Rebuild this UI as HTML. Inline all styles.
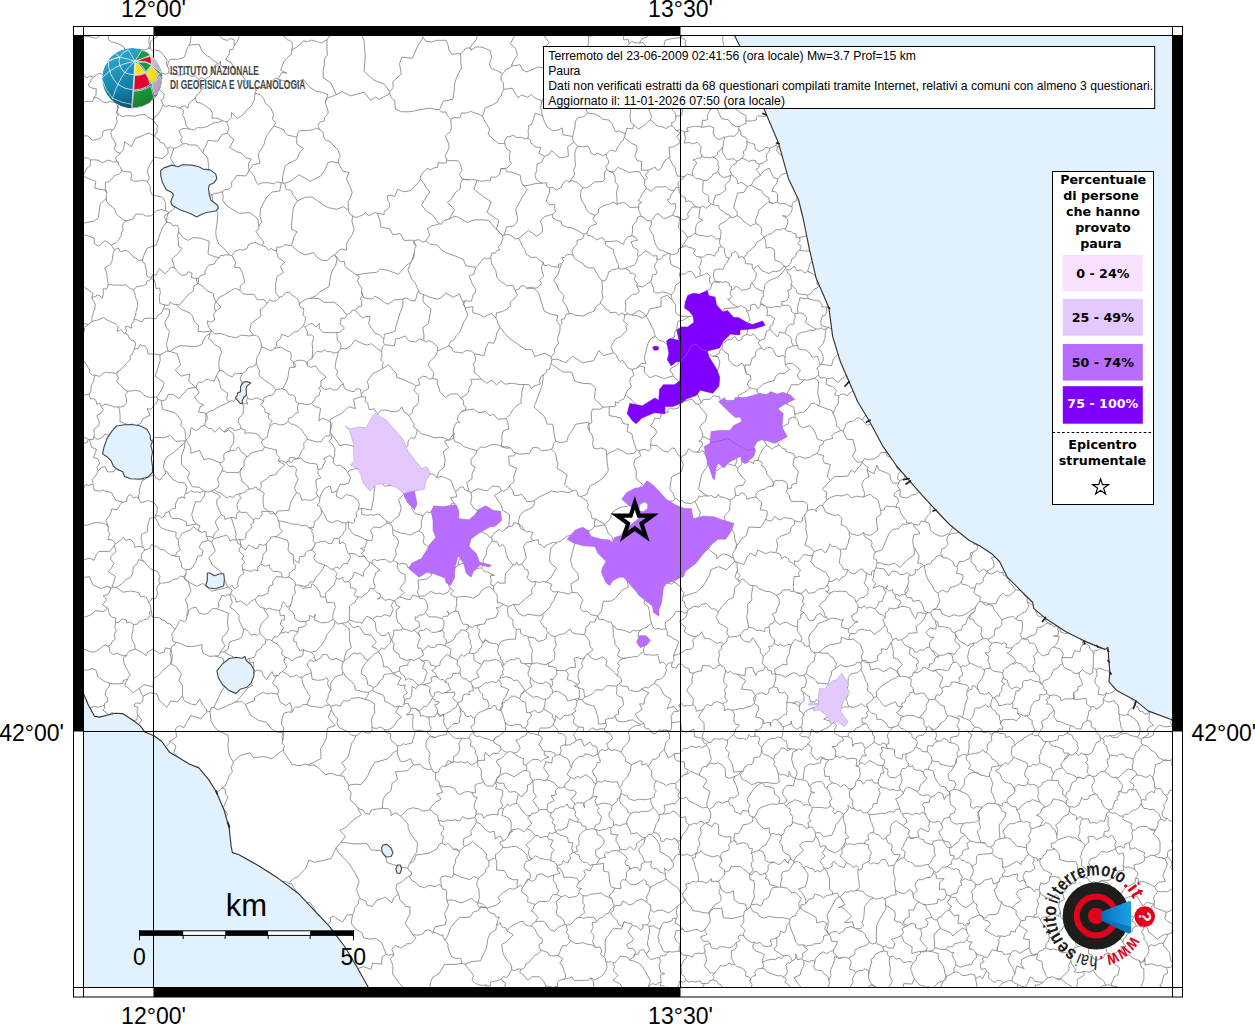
<!DOCTYPE html>
<html lang="it"><head><meta charset="utf-8"><title>Hai sentito il terremoto - Paura</title>
<style>html,body{margin:0;padding:0;background:#fff}body{width:1255px;height:1024px;overflow:hidden}svg{display:block}.h{font-family:"Liberation Sans",Arial,Helvetica,sans-serif}.d{font-family:"DejaVu Sans","Liberation Sans",sans-serif;font-weight:bold}</style></head><body>
<svg width="1255" height="1024" viewBox="0 0 1255 1024">
<defs><clipPath id="mapclip"><rect x="83.5" y="35.5" width="1089" height="952"/></clipPath>
<linearGradient id="gb" x1="0.2" y1="0" x2="0.7" y2="1"><stop offset="0" stop-color="#35aed0"/><stop offset="0.55" stop-color="#1583ab"/><stop offset="1" stop-color="#0b5f85"/></linearGradient>
<linearGradient id="gc" x1="0" y1="0" x2="1" y2="0"><stop offset="0" stop-color="#0a6fc0"/><stop offset="1" stop-color="#1aa3e6"/></linearGradient>
<clipPath id="globe2"><path d="M132.3,48A30.2,30.2 0 1 0 132.3,108.4A30.2,30.2 0 0 0 153,100Q162.5,90 162.3,76Q161,64 152,56A30.2,30.2 0 0 0 132.3,48Z"/></clipPath>
<radialGradient id="gsh" cx="0.4" cy="0.3" r="0.75"><stop offset="0.6" stop-color="#000" stop-opacity="0"/><stop offset="1" stop-color="#000" stop-opacity="0.22"/></radialGradient>
</defs>
<rect width="1255" height="1024" fill="#fff"/>
<g clip-path="url(#mapclip)">
<path d="M734.6,35.5 739.5,45.6 764.0,108.7 778.6,143.3 788.4,178.4 798.6,200.0 803.4,219.5 809.3,248.8 816.1,278.1 828.8,307.4 832.7,336.7 840.5,362.1 848.8,381.0 857.6,401.5 869.3,421.0 883.0,446.4 896.6,466.0 909.3,480.6 922.0,495.2 935.7,510.0 949.4,524.5 968.9,540.2 980.0,545.9 991.7,553.7 999.5,561.5 1007.3,577.1 1019.0,588.8 1032.7,602.5 1033.7,608.4 1046.4,619.1 1065.9,631.8 1083.5,640.6 1097.2,646.4 1105.0,649.4 1107.9,647.4 1108.9,661.1 1109.9,672.8 1108.9,681.6 1116.7,690.4 1136.3,701.1 1148.0,710.9 1172.5,720.0 1172.5,35.5Z" fill="#e1f2fe"/>
<path d="M83.5,693.7 88.6,705.4 94.4,716.1 99.3,717.1 107.1,715.2 114.9,713.2 122.7,713.6 132.5,720.0 140.3,725.9 145.2,732.3 154.0,735.7 161.8,741.5 169.6,752.3 179.4,758.1 189.1,764.0 198.9,767.9 208.7,779.6 216.5,792.3 224.3,810.9 229.2,828.4 231.1,846.0 232.4,852.6 238.5,854.5 259.0,865.9 278.6,878.6 298.1,893.2 313.8,909.8 329.4,926.4 345.0,947.0 356.7,966.5 368.4,987.5 83.5,987.5Z" fill="#e1f2fe"/>
<path d="M100.8,35.5l-1.7,.6 -2.7,2.2 -2.9-.5 -4.2-1.3 -5.8-.3M560.1,325.9l-3.3-4.7 .8-5.7 -7.1-1.5 -6.2-2.8 -3-9.3 -2.7-8.8 -4.6-4.8M534,288.3l-1.4-1.4 -5.9,1.3M560.1,325.9l2.1-2.2 -1.1-4.2 3.4-.6 .9-2.6 1-2.1 3-.2M561.6,263.6l-3.6,10.8 -4.4,5.7 2.6,3.6 3,6.7 4.8,5.2 -1.3,5.3 4.1,6 2.6,7.1M561.6,263.6l-3.2,.6 .4,3.3 -2.7-.7 -4.2-.2 -3-1.8 -2.8,.9 -2.2-.6 -.7-3M543.2,262.1l-1.5,4.1 .1,4.1 1.8,5.8 -4.1,4.1 2,3.4 -4,4.2 -3.5,.5M534,288.3l-.4,.1 -6.9-.2M83.5,682.5l.4-.3 -.4-.7M104.3,705.3l-5.9,1.9 -4.3-.8 -3.5,1.1 -.7,.2M104.3,705.3l.7-2.3 2.8-1.5 -.8-4.2 -1.8-2.3 .6-3.4 .7-2.5 2.8-2.5 0-3.4M109.3,683.2l-5.4-2.2 -6.3-4.6 -1.6-6.2 -3.9-1.9 -4.7,1.9 -3-.3 -.9,.5M134,318.9l0,2.8 -2.5,2 0,4.5 -3.7-1.9 -2.6,.5 1.4,4.1 -1.9,2.6M134,318.9l1.7-3.6 .2-3 1.7-6.6 -.3-4.8 -1.4-2.5 -.5-1.7 -.7-4.1 -1.3-3M91.9,297.4l1.6,3.6 1.7,2.6 -.4,5.6 -1.5,3 -.4,2.9 -1.2,2.3 .4,4M91.9,297.4l3.9-.8 1.3-2 2.9,1.4 2.2,2.1 1.1-3.7 -.3-5.6 3.3,.2 1.8-3M108.1,286l1.7-2 3.7,1.3 3-.4 3.6,.4 2.8-.1 3.4-.3 3.9,3.6 3.2,1.1M124.7,333.5l-3.9-3.8 -3.4,1.8 .9-4.6 -3.1-3.1 -7.2-3.3 -4.6-2.9 -4.3,2 -7,1.8M83.5,395.4l1.6-.4 4.1-.9M89.2,394.1l1.7-2.9 .2-3.3 .2-2.7 1.2-1.6 1.3-2.4 .1-3.1 1.5-3M95.4,375.1l-3.2,0 -2.9-2.5 .5-2 -1.6-3.2 -3.2-4.6 -1.5-2.2M83.5,323.6l5.2,.7M83.5,332.4l.7-.9 .4-4.1 4.1-3.1M91.9,297.4l1.1-4.2 -2.8-1.8 -3.2-2.6 -2.7-1.3 -.8,.2M88.7,324.3l3.4-2.9M134,318.9l3.5,1.1 4.2,2 2.3-3.4 6.1-.5 5.6,.9 2.6-3.9 3.8-2.8 1.1-3.4M163.2,308.9l2.1-3.9M133.4,289.6l3.4-2.8 4.1-.8 2.6-.3 2.9-1.7 .6-3 1.9-.3 2.4-2M165.3,305l-5.4-1.5 -.7-6.9 1.1-3.6 -.6-4.9 -3.6,.5 -.5-4.8 -1.3-4 -3-1.1M551,356.9l-6.3-3.7 -9.9,3.3 -2.7-6.6 -6.9-.4 -7.7-5.6 -9.4-6.7 -4.3-5 -3.9-4.9M551,356.9l2-2.3 1.5-1.9 .3-4.3 1.2-2.2 2.5-2.6 -1-5.3 2.4-7.3 .2-5.1M526.7,288.2l-2.5-2.4 -3.5,.2 -1.8,3 -3.9,1.4M499.9,327.3l-1.9-3.4 -.6-2.7 -1.6-3.1M515,290.4l2.4,4.4 -3.7,4.4 -3.6,3.2 .3,3.8 -4.3,3.2 -3.8,2.2 -5.8,1.2 -.7,5.3M231.9,255.7l4,6.8 -1.7,4.6 5.8,.8 2.8,5.9 1.3,5.4 .5,3.2 -4.2,3.3 -.4,4.6M231.9,255.7l2.1-3.1 1.5-1.6 4.1-1.4 3.1,.6 4.3-1.8 1.6-3.9 6.4-2.2 6.7,3.3M240,290.3l2.8,3.5 5.3,.6 5.8-.1 3.3,5.3 3,0 4.1,.1 1,1.9 1.9,1.6M267.2,303.2l2.3-3.5 4,1.6 2.9-.7 1.7-1.3 1.4-2.1M279.5,297.2l-3.6-4 -.5-7.5 1.6-9.3 6.4-3.8 -3.1-6.2 4.5-4.1 -6.4-4.4 -2-6.9M261.7,245.6l4.1,1.2 2.6,3.5 2.7-1.9 2.1,1.8 3.2,.8M122.4,55.7l3.8-1.5 3-1.6 2.3-1.4 4.4-.9 2.6-1 6.5,.8 3.6-1.7M122.4,55.7l3.6-4.5 -2.6-4.7 -5.5-2.8 -6.8-2.2 -2.9-2 .3-4M148.6,48.4l1-3 -.9-4.2 .8-4.4 -.4-1.3M83.5,75.6l.4,.1 2.9,2.2 2.9-1.8 3.9,1.1M93.6,77.2l2.2-1.8 3.1-2.1 5.6,1.5 4.6-.4 1-6.9 -.5-4 5.9-2.2 6.2-3M121.7,58.3l.7-2.6M499.9,327.3l-1.7,3.6 -1.4,1.8 -1.2,6.4 -1.8,4.1 -5.1-.7 -2.6,4.4 -1.9,8.7 -9.7-1.7M465.3,300.8l-1.6,3.1M463.7,303.9l-.4,.8 1.3,1.6M464.6,306.3l1,1.3 7.2-1 0,5.9 6.7,2.1 4.1,2.5 7.8-3.6 4.4,4.6M465.3,300.8l-2.5,.8M462.8,301.6l.9,2.3M463.7,303.9l.9,2.4M464.6,306.3l1.5,4.1 1.9,4.7 -3.9,6.6 -4.3,10.2 -3.6,3.7 -1.8,3.9 -3.8,1.8 -2.2,4.9M474.5,353.9l-3.1-2.8 -5.7-.5 -3.6,2.5 -4.3-1 -2.3,.2 -2.8-1.5 -1.3-3.7 -3-.9M511.7,969.8l2.1,1 2.4-1.3 2.9-.6 1.7,.4M511.7,969.8l-.1-3.6 -1.6-2.8 -2.9-2.9 -3.9-6.5 -1.7-9.3 5.6-3.3 6.2-6.6 -6.5-4M506.8,930.8l3-3.4 4.5-3.1 2.7-.8 3-1.9 3.3-.1 .8,2.2 3.7,2.1 4,.2M531.8,926l3.4,3.5 1.4,3.3 2.8,4.5 3,1.4 -.4,4.3 -2.9,1.2 0,2.9 1.9,3.2M520.8,969.3l2.5-.5 1.9-2.3 .3-2.2 3.2-1.5 3.5-4.5 2.7-3.1 3.5-1.5 2.6-3.4M118.3,406.9l1.1,2.4 .4,3.5 .3,4 -.1,5.2 1.9,0 2.8,1.7 2.3,.4 1.3,.5M118.3,406.9l-4.4,0 -4-1.7 -1.8-.3 -2.8-1 -1.4,1.1 -2.6,1.6M101.3,406.6l2,3.2 -1.8,3 -4.7,2.8 2.5,6 -.5,4.1 -5.1,3.6 .6,4.4 -.4,3.1M93.9,436.8l3.1,2.5 2.7-.6 2.4-1.4 3.1-3.4 3.8,1.5M133.1,424.6l-1-.8 -1.6,.8M115.8,468.2l-1.8,3.4 -6.2,.4 -2.9-5.3 -3,.4 -3.7,3.7M89.4,439.4l2.2,7.9 4.8,1.8 -1,3.3 -2,5.3 4.2,1.1 2.2,4.4 -2.8,4.3 1.2,3.3M89.4,439.4l3.6,.2 .9-2.8M176.2,304.4l3.3,.6 2.5-2.8 2.2-2.6 3.7-4.9 5.5-3.8 .6-5.2 3.8-1.8 -1.8-5.6M176.2,304.4l4.2,4.4 9.7,4.4 2.4,2.8 1.9,5.9 4.1,3.7 -.4,5.7 6,.7 7.4-1M211.5,331l-2.5-3.6 -1.6-4 .1-2.6 3.4,1.5 3.8-2.3 -1.2-5.3 1.8-3M215.3,311.7l-1-6.2 1.6-4 -2.1-4 -.5-4.1 -6.3-2.6 -4.2-4.5 -4.4-2.7 -.1-5.4M198.3,278.2l-2.3,.1M165.3,305l3.5,.5 1.6-3.5 3,2.3 2.8,.1M151.3,278.7l.6-1.8M151.9,276.9l.9-2.4 3.5,.7 1.1-2.9 2.1-3.8 5.5,5.4 4.1-4.3 1.9-2.6 3.6,1.2M174.6,268.2l2.8,3.2 3.4,3.8 5.4-.4 1.9-3.2 3.9,1.8 -.6,4.3 2.8,.6 1.8,0M163.2,308.9l6.5,.3 -.6,5.8 -4.4,7.8 1.9,5.3 2.9,3.4 -1.6,6.8 -1.6,5.9 2,7.2M211.5,331.1l-1.4,2.4M210.1,333.5l-3.9,2.4 -2.6,4 -1.9,4.7 -6.3,2.1 -9.5-.8 -5.7-.3 -5.4,2.3 -4.9,3.6M169.9,351.5l-1.6-.1M211.5,331.1l3.2,2.7 6.9-.2 6.2,2.5 8.3,1.8 4.7-2.7 4,.2 4.1,.6 4.7-.8M253.6,335.2l-3.9-5.1 1.4-6.4 5.9-4.7 4-2.7 -.7-3 -.2-3.6 3-2 4.1-4.5M240,290.3l-4.5-1.9 -4,1.5 -3.2,2.6 -2.8,1.7 -6.9,3.5 -2.3,4.2 4.7,5.2 -5.7,4.6M174.6,268.2l-.9-3.9 -1.9-5.3 5.8-5.1 4.3-5.6 -3.4-2.1 .1-3.6 -.9-6.9 1-3.7M198.3,278.2l2.1-2.4 4.8-1.7 -.2-2.8 1.4-2.8 2.6-3.6 5.1-.8 2.8-4.5 2.5-2M178.7,232l5,6.3 4.3,2 5.1-2.7 7.6,.6 8.5,3 -1.2,12.6 6.3,2.9 5.1,.9M231.9,255.7l-2.7-.7M229.2,255l-3.4-.2 -2.4,.8 -3.1-.2 -.9,2.2M584,234.3l2.8-1.4M584,234.3l-1.2,4.1 -2,1 -3.8,1 0,3.8 -3.6,4.3 -1.7,2.6 1.5,4.3M586.8,232.9l.9,2.4 3,.6 2.7,1.2 3.4,2.8 4.5-2.2 2.2,.7 1.8,3.1M605.3,241.5l.2,3.3 3.7,2.6 4.2,2 .5,4.3 1.7,4 1.5,4.5 1.1,2 .5,3.7M573.2,255.4l1.5,3.3 4.6,2.9 4,2 1.2,2.4 4.3,1.9 4.9-.1 4.9,8.8 3.5,4.5M618.7,267.9l-2.8,1.2 -3.3,.3 -1.5,1.6 -2.6,1 -.7,3.3 -2.1,4.9 -3.6,.9M552.7,214.2l-.1,3.7 4.8,2.6 3.5,.6 1.2,4 4.7,2.1 4.4,.4 7.4,3.6 5.4,3.1M552.7,214.2l-4.5,1.5 -3.5,.7 -4.5,4.7 2.1,4.7 .1,6.3 -5.8,4.1 -8.1-5.6 -9.8,7.7M561.6,263.6l2-2.6 -1.8-3.9 2.4,.6 2.1-2.8 4.3-.6 2.6,1.1M518.7,238.3l2,4.1 2.2,4.9 2,2.5 1.1,4.1 5.8,3.8 4.5-.6 3.8,3.7 3.1,1.3M600.5,303.4l.3-2.2 2.2-3 -1-5.3 .2-3.1 0-4.5 -.1-4.2M600.5,303.4l-5.1,3.7 -1,3.9 -6.3,2.3 -4.5,2.7 -4.7-.5 -3.8-.2 -3.1-1.9 -2.6,.6M584.7,79.7l1-2.5 3.2-1.7 3.7-.7 2.7-1 2.4-.6 4.1,.2 3.2,4.8 2,2.9M584.7,79.7l-.8-4 -2.7-.6 -2.5-.3 -3.1-1.5M607,81.1l.8-4 -1.3-4.5 -1.2-4.4 5.1-4.2 3.8-6.4 6.1-1.4 3.7-6.1 5.1-6.5M575.6,73.3l-1.2-3.7M574.4,69.6l4.6-4.9 1.7-5.5 -2.1-2.7 -1.8-5.9 3.9-.9 5.4-.6 2.7-6 -.4-6.5M588.4,36.6l2.4-.8 4.7-.2 0-.1M629.1,43.6l-.8-4.1 -4.5,.5 -.3-3.1 -1.3-1.4M504.7,143.8l1,2.8 .9,2.4 3.8,2.2 -.8,3 0,6.3 1.8,3.1 -4.6,4.4 -6.2,.9M504.7,143.8l-.1-2.9 2.5-4.3 2.7,.1 3.3-1.6 3.5,2.3 5.1-.1 3.6,1.6 2.7-.8M528,138.1l2.7,1.8 .1,3.3 2.2,1.2 1.5,2.1 3.4,.8 3,.1 -2,5.8 5.7,3.2M500.6,168.9l4.8-.3 1.5,3.3 3.6,.2 2.4,.5 3.6,1.3 3.9,1.5 .3,4.3 1.8,4.9M544.6,156.4l-1.7,3.1 -1.4,3 -4.5,1.5 -.3,6.8 -1.8,4.5 1.6,4.2 1.8,1.7 3.8,2M522.5,184.6l2.2,1.1 3.2-.3 2.6-.6 4.3-1.1 3.9-.2 3.4-.3M541.2,104.8l.1-4.3 -6-2.2 -3.9-3.7 -3.7,2.7 -6.2-2.4 -3.5,2.9 -6-9.6 -8.2,1.2M541.2,104.8l-1.1,3.1 1.9,3.2 -.3,2.5 .7,2.1M542.4,115.7l-7-2.5 -2.7,8 -1.7,3.6 -2.6,.8 .4,2 -.8,3.3 .5,3.9 -.5,3.3M482.4,116.4l1.2-3.2 1.5-5.1 6.7-2.8 5.9-3.5 .9-3.2 2.2-2 1.2-3.8 1.8-3.4M482.4,116.4l2.5,5 4.8,7.6 -1.7,5 3,3.2 2.9,2.7 4.5,3.6 4,0 2.3,.3M552.7,214.2l2.9-2.4 -.7-2.6 -.2-4.7 -5.2,.3 -3.2-3.5 1.5-5.4 1.9-3.6 -.4-4.5M518.7,238.3l-3.1,.7 -2.5-1.5 -1-1.5 -3.8-1.7 -4.2,.9M504.1,235.2l2.4-8.3 7.2-.9 3.5-4 .3-4.6 -1.8-8 6.3-11.9 5.2-7.9 -4.7-5M549.3,187.8l-2.9-1.7 .6-3.2 -2.6,0 -2.3,.3M418.7,290.8l1,2.3 3.8,1.5M418.7,290.8l-1.8,3.3 -.2,2.6 -1.7,4.3 -4.2-.4 -2.1-1.4 -2.6-1.4 -3.3,1.2M423.5,294.6l-.6,6.1 2.4,3.6 5.6,4.5 -.7,5.5 -1.9,9.5 -5.5,3.6 1.1,7 0,6.1M402.8,299l.1,7.1 -2.9,6.9 -1.9,6.5 -2.3,7.1 -.8,4.7 -4.9,1.7 -5.7,1.2 -.5,5M423.9,340.5l-4.3-1.6 -4,3.1 -6.9-1.1 -3.5-5 -5.5,2.3 -4.1,.7 -1.2,7.1 -9.4-1.4M385,344.6l-1.6-1.8 .5-3.6M361.6,291.7l.3-3.7 -2.4-2.9 -1-1.8 -1.1-2.7 2.2-3.9 -3.1-1.8M361.6,291.7l2,5.9 8.3,1.6 3-3 4.8,2.5 4.8,3.9 3.5,1.6 6.4-4.3 8.4-.9M356.5,274.9l8.1-1.4 12-1.2 3.9-3.2 6.9,1 11.1,4.3 7-8.2 5.9-4.6M411.4,261.6l.4-.3 .1-.4M411.9,260.9l2.3-7.9M414.2,253l-.4,4.9 -1.9,3M411.9,260.9l-.5,.7M411.4,261.6l-.6,.9 -2.9,7.5 2.4,5.6 1.4,3.5 3.5,3.7 1.9,4.5 1.6,3.5M462.8,301.6l-1.4-3 -2.1-4.8 -5.9,3.5 -7.5-4.2 -4.7,4.4 -3.3,1.6 -6.6-1.4 -7.8-3.1M437.6,350.9l3.6-1.6 2.5-.9 1.9-.8 2.8-1.4M437.6,350.9l-.2-4.2 -2.5-2.3 -3.4-2.6 -3-1.4 -2.4,1.8 -2.2-1.7M355.3,310.4l2.5-3.3 3.9-1.2 -.1-5.4 -1.3-1.8 1.9-2.9 -.6-4.1M355.3,310.4l3.1,3.3 4,4.4 3.6-1.6 4.1,.1 -1.5,7.2 6.2,9.2 4.5,1.8 4.6,4.4M347.4,314.4l-2.2-1.1 -2.4-3.5 -4.9-4.8 -3.9-2.8 -5.8,.2 -4.5-.2 -4.6-3.6 -8.7-.4M347.4,314.4l-2.5,4 -3.7-.4 -.9,6.4 4.2,3.4 -3.1,3.2 -2.2,1.3 -2.1,.3M337.1,332.6l-5.2,.1 -9.1-.4 -3.5-3.6 0-5.6 -3,3.7 -4.5-3.6 -3.6,1.5 -3.1,2.7M299.2,304.7l1.8-2.7 3.4-1.7 1.9-1.3 4.1-.8M299.2,304.7l1.6,3.3 2.6,.1 .4,2.6 -1,4.4 2.7,1.9 -.4,4.4 -.8,2.1 -.9,2.2M303.4,325.7l1.7,1.7M355.3,310.4l-2.7-.5 -1.4,2.4 -3.8,2.1M356.5,274.9l-3.9-2.8 -5.2-3.4 -2.2-2.2 -.8-5.1 -2.6,.6 -2.7-1.2 -2-3.9 -2.2-1.5M334.9,255.4l2.1,3.5 -1.2,6.1 -3.1,4.5 -2,6.2 -1.8,11 -9.2,5.3 -3.5,3.6 -5.8,2.6M279.5,297.2l3.2-.9 2.8-3.5 4.1-.6 2.2,2.7 3.9,2.4 2.3,2.5 1.2,2.2 0,2.7M334.9,255.4l-.3-.9M276.4,251l.4-3.8 3-.2 2.8-.4 2.2-2 4.2,.7 2.4,.2M334.6,254.5l-3.9,2.5 -3.4,3.5 -5.4-.1 -4.6-2.9 -3.5-4.9 -8.6,2.3 -6.5-3.1 -7.3-6.3M168.6,212.3l-2.7-1.4M168.6,212.3l-.2,.7M168.4,213l-1.6,4.6 0,4.4 0,.1M166.8,222.1l-4.3,5.6 -1.6,3.8 -4.8,13.6 -9,3.1 -3.2,7 -1.4,4.5M165.9,210.9l-4.7-1.3 -5,1.4 -4.8,4.8 -5.7,.3 -3.3-2.1 -6.9,.2 -2.3,4.7 -6.5,1.9M126.7,220.8l-3.1,2 -1.3,3.8 1,2.5 -1.8,3.4 -.2,2.9 -2.7,4.5 -2.4,2.7 -4.8,2.5M142.5,259.7l-4.1,.9 -1.9-2.2 -3.7-1.9 -2-2.8 -4.5-3.4 -6.1,1.4 -2-3.7 -3.8,1.8M111.4,245.1l1.7,2.9 1.3,1.8M151.9,276.9l-3.6,.5 -1.8-2.4 .2-4.1 -1.5-4.5 .1-2.8 -2.5-1.1 -.3-2.8M169.3,212.3l-.9,.7M168.4,213l-4.4,3.1 2.8,6M166.8,222.1l.1,.2 4.1,.9 2.1,2.7 2.8-.8 2,.7 .8,3.1 0,3.1M169.3,212.3l-.7,0M108.1,286l-.1-3.7 -.9-4.7 -.3-4.5 -2.1-5.4 5.5-2.9 1.9-4 1-6.9 1.3-4.1M83.5,234.3l1.2,.6 9.6,3.2 -.1,5.1 4.1,3.1 7.1-5.7 6,4.5M126.7,220.8l-3.4-1 -4.9-3.9 -2.3-2.2 -.5-2.9 -2.8-3.6 -3.8-2.5 -2.3-3.3 -.3-3.4M106.4,198l-6.3,6.6 -1.9,13.5 -3.9,2.8 -8.3,1.8 -2.5,.4M481.2,379.1l-4.8,.1 -5.7,.3 1.1,3.8 -2.8,4.8 -.1,2.8 -2.6,4 -3.5,1.7 -2.1,1.2M481.2,379.1l5.6,4.1 5.3-3.1 4.4,4.9 4.3-4.1 4.2,3.3 7.5-1 6.3,1.3 5,.1M523.8,384.6l-2,7.4 0,4.5 -1.1,3.2 .7,3.4 -4.2,2 -4.5,5 -2.6,4.4 -4.2,4.1M505.9,418.6l-8.1,.7 -4-5.1 -3.9,1.5 -4.2-4.1 -7.2,1.1 -5.1-3.6 -5,.6 -6.8,1.7M461.6,411.4l4-1.2 .4-3 -2.1-1.6 -.6-1.8 .3-2.8 -2.9-3.2M474.5,353.9l1,4.2 -.1,2.4 -2.3,3.7 1.3,3.1 -.4,4.7 3.6,3 2.4,2.4 1.2,1.7M437.6,350.9l-1,3.2 -2.6,3.6 -3.6,3.1 -1.6,2.3 -.2,2.4 2.2,3.3 3,4 -1.1,5.8M432.7,378.6l4.6,.9 -.2,4 2,4.9 .8,3.1 5.4,5.9 5.4-3.3 6.6-.3 3.4,4M137,425.3l4-2.2 1.4-4 7.8-3.9 -3.1-6.5 3.8,.6 3.8-4.8 2.3-1.9 .8-3.6M151.7,440.6l2.9-3.1 5.3,0 3.6,.3 7.1-2.3 5.1,5.9 6.1-.5 3.5,0M161.5,400.8l-3.7-1.8M161.5,400.8l.8,8.3 12.1,3.6 3.1,2.6 4.2,6.1 -1.1,3.7 4.2,4.4 .6,5 .6,5.5M186,440l-.7,.9M385,344.6l-2.5,2.5 -.8,2.3 .1,2.4M337.1,332.6l-.1,1.8 .1,2.8 .3,3.4 3,2.2 .6,2.4 -.5,3.6M340.5,348.8l5.7-.1 4.8-3.2 4-5.4 8,3.8 3.9,1.2 4.4-1.4 6.2,5 4.3,3.1M432.7,378.6l-3.8,.5 -2.4-2.3 -3.7-.6 -2.4,1.9 -2,1 1.5,5.6 -4.2,1.4M381.8,351.8l-.1,2.9 .4,2.4 -1.5,2.8 2.7,2.7 -1.2,3.5 1,2.2M415.7,386.1l-2.7-2.2 -4.3-1.9 -4.5-2.2 -7.5-2.4 -.2-3.5 -2.9-3.4 -5-5.7 -5.5,3.5M545.6,985.5l1.9,.8 2.6,.5 2.8,.5 2-.4 2.6-.5M545.6,985.5l.1,2M557.5,986.4l.3,1.1M558,955.6l-3.8,.2 -2.2,.2 -2.9-.8 -1.1-2.5 -3.7-1.5 -3.3-.9M558,955.6l4.8,2.9 -3,4.9 2.2,1.7 1.7,4.4 .4,2.6 1.3,1.6 .2,3.8 -1.8,1.7M563.8,979.2l-4.3,1.1 -2.1,2.2 .1,3.9M520.8,969.3l-1,3.4 4.2,2.6 1.9,2.9 2.2,2 3.8-3.5 7.3,.1 4.3,4.1 2.1,4.6M500.7,979.4l4.7,3.5 -.4,4.6M500.7,979.4l2.8-2.8 3,.8 2.2-2 1.4-2.7 1.6-2.9M563.8,979.2l3.3-.5 4.7-1.8 2.7,3.9 5.3-.5 2.9,.4 2.9-.5 2.9,.2 1.8-2.5M590.3,977.9l3,3.7 .5,4.3 -.3,1.6M500.7,979.4l-2.6,.9 -4.3,1.1 -3.2,.8 .1,3.6 -2.8,.3 -1.8-1.3M485.8,987.5l0-.4 .3-2.3M402.7,987.5l-.4-.9 -3.6-4.2 -5.9-8 .1-9.1 -2.7-6.4 3.7-3.9M357.8,968.5l5.8-1.8 7.5,2.7 1.5-6.2 9,1 .5-7.4 4.2-2.5M386.3,954.3l2.6,1 2.1-.7 2.9,.4M327.7,924.5l.3-.2 2.8-3.1 -.8-3.4 3.5-1.7 3.6,2.9 5.6,2.9 4.3-7 5.6-.2M386.3,954.3l-4.7-11.6 -6-4.2 -5.6,.6 -6.1-1.1 -2-5.3 -6.7-4.2 -4-5.2 1.4-8.6M336.1,847.9l2.1,4.5 6.3,6.2 5.1,5.7 5.8,9.3 3.7,7.8 -2.6,7.9 1.6,4.5 1.9,4.8M336.1,847.9l-5,10.5 -7,2 -9.9,1.9 -5.4-2.3 -2.8,7.9 -8,8.8 -4.3,1.8 -5.4,4.7M288.3,883.2l3.8,.9 1.2,3.1 2.4,3.1 .8,1.7M307.1,902.7l2.9-.3 4.2,6.2 1.6,3.4M316.9,913.1l2.3,2 .9,1.4M352.6,914.7l1.7-3.8 .2-3 2.7-2.5 1.5-2.5 -.4-2.5 1.7-1.8M1172.5,839.6l-1,1.9 1,.4M668.9,951.7l-4.1,.4 -2.5-2.9 -1.5-4.2 -2.2-2 .6-2.5 -1.4-3.5 1.2-3.7 1.1-4.4M668.9,951.7l-2.1,1.8 -.8,1.6 -2.9,.7 -1.6-.7 -2,2.6M649.1,926.5l.4,4.6 0,2.5 -1.2,2.3 .1,3.3 -.9,2.6 .1,3 2,4.1 -3,5.5M649.1,926.5l4.4-.8 2.4,1.9 4.2,1.3M659.5,957.7l-2.8,.4 -2.7,.8 -3.1,.5 -2.5-2.3 -1.8-2.7M668.3,987.5l-.4-.3 -2,.3M665.2,987.5l-1.5-1.7 -3.6,0 1.2-4M661.3,981.8l-3.2,1.4 -2.1,1.9 -3.4-1.7 -2.1,1.6 -2.3,2.2M722.1,987.5l-1.3-3 -2.3-.5 -1.7-3 -4.3-1.2M702.5,987.5l.2-1 2-3.1M704.7,983.4l3.2,.1 1.3-2.2 3.3-1.5M686.2,980.3l3,1.7 2.5-.6 4,.6 4.2-1.2 1.7,2.7 3.1-.1M686.2,980.3l-2.9,1.9 -4-1.1 -.3,3.9 -1.4,2.2 -.5,.3M750,981.5l2.1,3.1 -.9,2.9M750,981.5l.5-2.7 -1.7-1.9 -3.3-1 .5-3.3 -2.4-3.4 -3.2-2 -3.2-.4 -2.7-2.4M712.5,979.8l1.9-2.2 -1.7-1.6 1.7-2.9M734.5,964.4l-2.5,.4 -2.8-2 -2.9,2.7 -3.2,.5 -3-.1 -2.5,3.4 -3.2,3.8M686.2,980.3l-1.3-3.2 -3.5-3.1 .4-3.8 -1-2.4 1.2-3.8 2-4 2.9-2.1 -.8-2.5M714.4,973.1l-4.4-.1 -1.6-2.8 -2-2 -2.2-2.4 2.2-4.2 -.1-4.7 -1.3-2.3 .1-3.4M686.1,955.4l3.4,.3 3.1,1.6 .8-2.5 1.9-1.3 3.8-.3 3.8,.4 2.2-2.4M668.9,951.7l4.2,.4 2.2-.6 3.7-.4M661.3,981.8l-.8-6.6 4.3-1.7 -4.1-1 -1.1-4.2 -.5-3.4 1.5-3 -1.1-4.2M686.1,955.4l-3.4-.6 -1.8-2.6 -1.9-1.1M734.5,964.4l-1.8-3.8 -1.6-2.3 .6-2.3 -.5-5.1 3.5-1.2 2.3-3.2 -.8-3.9M736.2,942.6l-3.3,3.9 -3.1,1.4 -3.4-.4 -2.9-.7 -4.3,0 -1.6,2.4 -6.2-1.3 -1.1-4.2M705.1,951.2l-.8-2.4 -.3-2.5 2.5-2 3.8-.6M134.4,349.2l-1.5,3 -.4,1.9 -2.2,1.4 -.1,4.1 -3.8,4 -2.2,2.5 -3.1,3 -1.8,1.5M134.4,349.2l3.9-1 1.6-3.6 2.8,1.3 2-.3 2.8,4.3 .3,4.1 6.4,.2 5.6,.5M159.8,354.7l.4,5.7 -1.9,6.3 -3.1,9.5 9,6.4 -1.2,3.8 -.7,2.3 -3.6,5.4 -2.1,2.9M119.3,370.6l-2.8,3.5 2.1,3.8 -2,3.4 1.7,1.9 3.1,2.8 3.5,3.8 2.8,1.3M127.7,391.1l3.7-.1 3.4-.8 5.5,1.1 3.4,3.6 3.8,2.2 2.6,.2 2.8,0 3.7-.3M124.7,333.5l3,.7 .8,2.5 2.6,3.6 2.7,.5 1.9,2.2 -.8,3.8 -.5,2.4M95.4,375.1l4,1.4 2.9-2.4 3.4-2 3.2,.8 2.5-.3 4.3,.7 3.6-2.7M168.3,351.4l-2-.4 -2.6,2 -3.9,1.7M195.7,387.5l-4.9,.6 -3.2,.7 -3.6,4.2 -5.4,5.9 -5.4-4.6 -5.1,.2 -2.3,5.4 -4.3,.9M195.7,387.5l-7-6.3 1.2-7.2 -8.9,2.2 -5.7-6 5.2-5.3 -1.9-6.8 -1.8-4.6 -6.9-2M157.8,399l-1.2-2M89.2,394.1l.5,2.9 .8,2 3-.4 2.5,1.8 .8,3.9 2.9-1.2 1.6,3.5M118.3,406.9l3.3-.1 2.5-.9 2.2-2.6 .4-3.9 -.9-2.8 -.8-1.8 1.7-1.6 1-2.1M83.5,437.3l1.5,.3 3.4,1.7M88.4,439.3l-1.3,3.2 -3,.7 -.6,1.5M89.4,439.4l-1-.1M98.2,470.8l-1.5,3.2 -1.5,2.2 -1.9,2.2 -1.3,1.4 1,2.6 -.1,2M83.5,487.9l2.3-3.2 2.8,.6 4.3-.9M711.8,284.5l-2.1-2.4 -.2-3.2 .8-3 -3.4-3 -2.4,1.6 -3.6,1.4M711.8,284.5l1.8-3.1 3.6,1.1 3.3-.4M720.5,282.1l-4.8-.8 -2.4-4.7 .8-6.3 4.3-1.3 4.7,.3 1.7-4.3 2.2-2.4 2.3-4.6M700.9,275.9l-1.1-1.7 .8-3 -.9-2.1 -1-2.2 1.4-1.6 1-3.4 .2-2.6 -1.7-2.4M699.6,256.9l3.6,.3 3.2-2.5 4-.3 4.4,1.8 .5-2.8 2.8-1.8 .7-4.2 2.7-.7M721.5,246.7l3,1.7 -.1,4.3 1.3,2.4 .4,2 3.2,.9M731.2,289.8l.4-3.1 -2.2-1.1 -.5-3 -3.5-.9 -2.6,.5 -2.3-.1M731.2,289.8l2.5-.7 1.8-2.9 3.2,1.3 2.4,2.9 4.8-.8 4.3-1.5 .2-3.1 1.6-2.4M752,282.6l2.8-3 1.2-2.7 .1-1.7 -.1-2.6 -2.7-3M753.3,269.6l-1.2-3.2 .3-2 -2.8-.5 -4.2-.2 -.1-2.8 -1.5-3.4M743.8,257.5l-1.8-.9 -3.3,1.1 -.6-3.1 -2.7-3.3 -3.7,2 -.1,2.5 -2.3,2.2M705.1,89.8l-3.6,1.8 -2.8-1.9 -6.1,1.7 -2.6,3.3 -6.1,5.2 -.9,7 -1.3,8.3 -5.9,1.1M705.1,89.8l-1.4-2.5 -1.2-3.8M675.8,116.3l-.6-3.5 -2.4-2.5 -.6-2.6 -2.4-3.1 4-7 4.7-1.5 -3.4-4.3 1-7.9M702.5,83.5l-5-3 -2.9-1.6 -4.8-1.5 -2.9,.9 -.2,3.4 -3.7,2.5 -2.9-.6 -4,.3M647.9,170.2l.2,2.4 -2.8,2.3 2.2,3 -2.6,2.4M647.9,170.2l4.3-1.5 2.7-1.9 1.3,2.3 2.8,1.3 2.5-3 1.1-2.3 2.7-5 4.7-3.3M644.9,180.3l-.5,4.4 2,3.9M684.3,176.6l-2.8-.2 -4.3-.5 -1.6-5.2 -.3-3.6 -2.7-2 -1.1-3.2 -1.9-2.8 .4-2.3M684.3,176.6l-1.8,2.5 -2.1,1.1 -2.2,2.2 .1,3 .7,2.1M679,187.5l-3.2,.2 -1.4,2.5M646.4,188.6l5.1,2.8 3.6-4 3.3-.6 4,.2 3.3-.5 2.9,2.4 2.5,1.6 3.3-.3M617.4,204.7l1.5-1.5 3.6-.6 2.9,.4 1.5,1.8 3.2,2.6 2.8,.1 3.4-.3 2.5,0M617.4,204.7l-.4-3.4 -.1-4.2 -.5-4.3 1.8-7.4 -2.8-3.1 -.4-5.9 -1.5-3.3 -4.9-2M644.9,180.3l-2.1-3.3 -3.4-5.3 -4.9-.1 -5.1,1 -4.1-2 -7.4-3.3 -4,4.7 -5.3-.9M646.4,188.6l-1.4,1.1 -1.5,2.7 -1.7,1.6 -1.2,3.5 -2.6,2.9 4,2.1 -3.1,1.4 -.1,3.3M636.9,286.2l3.1,0 2,.9 3.1-1.7 1.9-1.7 3.8-2M636.9,286.2l2.5,5.3 -3.4,2.6 -3.6,.2 -2.5,2.2 -4.6,4.4 .5,5.6 -.7,4.1 3,3.3M650.8,281.7l1.3,2.8 1.7,4.2 -.3,2.9 2.4,1.1 3.7,.4 2.4-1.3 5.2,1.1 4,2.1M671.2,295l.3,2.7 .9,2.7M672.4,300.4l-5.3-5.2 -6.1,2.6 0,8.8 -11.2,2.4 -2.8,6.3 -1.1,.7M645.9,316l-3.5,1.9 -5.6-2.3 -4.9-.6M631.9,315l-3.8-1.1M600.5,303.4l2.5,1.9 2.8,4 3.1,1.1 .9,2.3 6.2-.4 3.2,3.1 2.4-2.5 3.3,1.9M625.1,268.6l4.3,1.9 1,3 2.3-.5 3.1,2.2 -1.6,3.6 1.6,3 1.4,1.4 -.3,3M625.1,268.6l-4.1,.7 -2.3-1.4M624.9,314.8l3.2-.9M672.4,300.4l3,4.3 .4,2.8 -.6,3.7 1.2,2.2 4.3,2.9 3,.2 2.7-.3 2.4,.3M655.5,336.5l-1.4-3.4 -.3-3.3 -2-2.5 -1.3-3.4 -2.2-4.4 -2.4-3.5M645.9,316l-1.5-2.2 -5.5-3.4 -7,4.6M655.5,336.5l2.9,3.4 2.8,1.2 1.7-.1 3.4,3 4.6,.8 .3-2.7M671.2,342.1l.3-2.6M671.5,339.5l.1-1 3.4-2.3M675,336.2l-.5-2.8 .8-1.9 1.7-3 .2-4.7 1.2-2.7 4.8-.9 3.5-2.3 2.1-1.4M679.4,274.5l3-.5 3,0 2.3-2.2 3.3-.5 3.2,2.9 1.4,3.8 2.4-1.6 2.9-.5M679.4,274.5l.9,3.4 .4,3.2 -1.9,2 -3.1,1.9 -.7,2.1 -.3,3.4 -3.5,4.5M711.8,284.5l-1.2,4.3 -4.5,2.8 -1.4,7.5 -3,4.7 -1.8,4.2 -3.4,1.3 -.7,4 -2.7,2.7M693.1,316l-4.3,.5M731.2,289.8l-1.2,3.8 1.8,2.9 -1.9,2.4 -2.3,.3 3,2 1.3,2.4 3.1,1.9 2.2,1.6M737.2,307.1l-3.7,.9 -2.8,.1 -6.3,.6 -2,3.6 .3,5.7 -3.5,1.9 -.7,6.1 -5.8,1.1M693.1,316l4.1-2.5 4.6,.2 1.7,2.9 4.3,2.4 -1,2.4 1.5,2.3 2.8,2.1 1.6,1.3M617.4,204.7l-2-1.5 -3.2-.9 -2.5,1.9 -2.5,.2 -5.4,2.1 -3.3,2.4 -.1,4.2 -3.4,2.3M595,215.4l-5.1-2.2 -3.1-2.6 -2.1-5.5 -2.8-4.2 -1.4-4 .2-4.1 .8-3.3 1.9-1.8M608.6,171.1l-1.4-1.4M607.2,169.7l-2.9,2.3 .3,4.9 .1,2.6 -2.4,2.1 -7.8,.4 -4,3.2 -3.8,2.6 -3.3-.1M595,215.4l-2.2,3.9 4.3,4.5 -5.1,1.7 -3.2,2.5 -.4,2.3 -1.6,2.6M549.3,187.8l3.9-.2 3.3,2.7 2.1-1.9 2.4-.5 1-2.5 .8-1.9 3.5-3.3 3,2M583.4,187.7l-2.2-1.4 -1.9-1.7 -2.4-2.2 -2.8-.6 -1.9-1.7 -2.9,2.1M589.3,35.5l-.9,1.1M575.6,73.3l-5.7,3.8 -1.2,4.9 -3.8,4.4 .1,5.4 -7.8,3 -9.8-.8 -4,3.7 -2.2,7.1M574.4,69.6l-2.9-2.1 -2.2,1.5 -1.4,1.6 -3,1 -3.6-3.4 -2.5-2.2 -2.7-2.9M556.1,63.1l-.3-.3 1.8-2.8M503.8,89.4l-.4-4.3 -.2-2.6 -1.8-1.6 -.4-3.8 1.6-3.4M502.6,73.7l2.2-2.3 .9-1.7 3.8-1.6 1.9-2.1M557.6,60l-1.5,3.1M556.1,63.1l-2.3,4.7 -7.1,.3 -8.4-1.1 -6.3,2.6 -5.1,2.3 -4.2-1.8 -2.5-5.3 -8.8,1.2M482.4,116.4l-3.9-2.3 -2.5-.7 -5.4-2.1 -3.6,1.7 -5.6,.1 -1.4,4.8 -6-.2 -3.2,1.7M502.6,73.7l-5.7-3.2 -5.7-2.1 -1.8-4.8 2.3-6.3 -1.6-6.8 -8.1-3.4 -6.1-.2 -4.7,3.2M471.2,50.1l-1.9-2.3 -4.1,.6 -1.5,2.7 -3,2.4M460.7,53.5l0,8.3 .8,6.2 -3.8,6.9 -3.1,8.3 -.2,5.7 -1.5,10.2 -9.5,2.2 -4,8.3M450.8,119.4l-1.8-1.7 -1.5-2.1 -1.8-3.7 -4,.3 -2.3-2.6M465.3,300.8l6.2,.4 1.5-6.6 2.2-1.4 .5-3.9 -3.1-4.8 -3.4-8.5 4.7-2 1.8-6.5M515,290.4l-2.1-5.1 -6.4,.5 -2.7-2.7 -2-.8 -4.7-4.4 -1.4-7.7 -4-6.2 -1.1-6.4M475.7,267.5l2.6-2.4 1.6-2.2 1.4-2.1 3.5-2.9 2.7,1.1 3.1-1.4M504.1,235.2l-1.4,.3M490.6,257.6l1.3-4.7 3.4,.2 1.5-2.5 3.2-.6 -2.1-2.8 2.8-2.8 2.1-5.5 -.1-3.4M500.6,168.9l-.7,5.4 -4,2.8 -4.9,0 -1.1,4.2 -2.2-1 -2.5,.6 -3.9,.3 -4.2-.9M477.1,180.3l-3.2,8.7 9.6,7.7 7.8,5.2 -4.4,10.4 5.7,4.1 6.2,4.2 -2.4,8.6 5.7,5.8M502.7,235.5l-.6-.5M414.2,253l.5-2.1 0-2.7 1.6-2.5M352.8,215.9l-.9,5.2 2.1,8.2 -1.7,5.2 -3,4.2 -2.6,4.9 -.1,6.6 -5.5-1.2 -6.5,5.5M352.8,215.9l2.1,1.4 3.4-.4 4.8-2.3 2.4-2.1 2.8,3 3.2-.9 3.4-2.1 2.5,.8M377.4,213.3l2.6,7.5 .6,6.2 9,1.9 3.2,5.7 7.4-1 3.8,6.8 9.1-.2 1,1.8M414.1,242l2.2,3.7M475.7,267.5l-9.9-1.9 -2.4-6 -7.1-3.2 -11-4 -4.2-3 -3.8-4.2 -7.4-1.2 -3.7-3.1M416.3,245.7l-2.7-2 .5-1.7M414.1,242l.6-1.6 4.3-.7 3.6,2.5 3.6-1.3M389.8,91.8l3.4-4.4 -.4-5.7 8.5-7.5 -1.8-10.4 2.4-6.7 10.3,1.2 6-13.3 5-7.4M389.8,91.8l0,1.5M423.2,37.6l2.5,3.4 5.8,1 5.6-1.7 9.1,0 2.2,5.8 .2,3.4 3.3,4.8 8.8-.8M439.4,109.6l-3.8-.1 -5.7-1.3 -6.4,.9 -9.9,2 -5.5,.7 -6.7-.1 -6.2-2.6 -.4-8.4M389.8,93.3l1,3.6 2.2,2.6 1.8,1.2M233.2,66.3l-2.1-4 -5.5-2.5 1.8-2.9 2.2-3.1 0-3.9 3.5-.5 1.1-3.9M233.2,66.3l-3.7,2.1 -4.5,.1 -4.2-2.8 -.4-4.4 -1.8,3.1 -1.9,2.2 -2.5,.4M214.2,67l-.4,0 -1.2,1.8M212.6,68.8l1.6-1.8M214.2,67l3.2-3.9 -5.3-3.5 -2.3-2.7 -2.2-.6 -5.6-5 -2.7-6.7 -6.6,0 -3.8,.9M234.2,45.5l-.1-5.8 -3.8-1.2 -3.1,2 -4.6-1.7 -3.4-3.1 0-.2M188.9,45.5l1.2-2.5 .4-2.8 .9-4.7M199.1,79.5l-3.6-3.3 -4.5,0 -2.8-2.5 -3.2-.5 -5.1,2.2 -4.9-1.1 -4.1-.9 -2.4-.7M199.1,79.5l2.6-2.2 3.4,2.5 1.9-1.6 2.9-2.1 2.3-2.9 .4-4.4M167.2,66.3l1.8,2.8 -.5,3.6M167.2,66.3l1.3-4.2 1.9-2.9 3.8,0 3.7,.2 6.1-2 1.8-3.9 .9-4.2 2.2-3.8M239.1,35.5l-.1,.3 -.3,2.5 -1.5,3.5 -3,3.7M150.4,48.9l1.6,1.5 3.2-.4 3.9,.7 3.2,2.8 2,2.7 2.9,4.4 -.8,2.4 .8,3.3M150.4,48.9l-.2-7.2 6.7-5 1.2-1.2M150.4,48.9l-1.8-.5M195.3,97.6l-2.1,2.6 -3,1.6 -2.1,3.5 0,2.9 -3.9-2.3 -3.4,1.4 -1.9,.7M195.3,97.6l1.3,4.8 4.5,.7 5.4,3.6 3.9,2.4 2,4.3 -.5,4.7 5.2,.1 5.1,2.4M178.9,108l2.3,.4 2.2,1.9 -.2,3.2 -1,1.9 1.8,1.5 1.1,3.5 .7,4.5 3.1,4M188.9,128.9l2.1,.4 3.3,.6 3.1-2.3 4.1,.2 5.7-1.3 6-3.5 5.9-.9 3.1-1.5M255.9,88.9l2.1-1.2 3.4-.3 5.4,.2 3.3-2.2 1-2.7 1.9-2.3 2.4-2.3 2.6,1M255.9,88.9l.2,2.1 -1.2,2.6M278,79.1l8.1,2.4 9.4,2.6 7.5-5 6.4,8 6.2,3.8 6.7,1.6 5.7,2.2 -2.8,7.4M325.2,102.1l1,3.2 1.8,5.4 0,3 -3.3,3.9 -.5,3.3 -4.4,1.3 -1.9,3.4 1.8,4M296.9,136.8l1.2-4.6 2.5-1.7 6.2,.1 3.7-.5 2.9-.4 2.4-1.6 3.9,1.5M296.9,136.8l-2.2,0 -3-.9 -4.1-.5 -2.7-2.9 -.9-2.8 -3.5-1.4 -6.7-2.2M254.9,93.6l5.1,.7 3.5,4.1 2.3,5.2 4.8,4.1 2.9,6.5 -1,5.1 3.3,3.3 -2,3.5M255.9,88.9l-2.5-1.3 -3.5-.5 -2.9-3 -2.1-5.2 -4.6-5.2 -4.8,.4 -.8-3.3 -1.5-4.5M195.3,97.6l2.1-2.9 2-1.4 1.4-3.3 3.2-2.3 -2.2-1 -3.6-2.4 .5-2 .4-2.8M222.2,120.6l2.3,.8 2.6,.4M254.9,93.6l-.6,6.5 -2.9,5.6 -4.7,4.1 -2.2,3.6 -6.9,5.1 -6.1-6.1 -.1,5 -4.3,4.4M106.4,198l-.1-2.7 .6-2.3M83.5,177.2l.7-.7 4.8,2.4 6.9,2.3 -1.2,7 5.8,1.2 4.6,.5 1.8,3.1M121.7,58.3l1.9,4.8 3.9-.7 1.3,2.8 -.2,3 3.3,2.2 2.3,2.2 -2.1,6.4 1.5,3.6M168.5,72.7l-3,1.5 -2.7-1.1 -3.5,2.2 -2,1.8 .9,3.2 -.6,4.7 .9,4.2M133.6,82.6l4.1-.4 2.6,2.6 5-2 3.5,.9 1.6,.6 2.3,2.1 2.1,4.4 3.7-1.6M178.9,108l-3.7-1.9 -2.9,.7 -3.2-1.5 -3.8,1.6 -2.3-2M163,104.9l-.6-2.7 -1.8-2.1 2.9-1.5 .8-4.6 -2.4-1.8 -1.7-2.1 -1.7-.9M595.6,947.6l-1.8-3.2 -1.4-4 1.4-1.6 .1-3.5 -3.3-3.2 2.6-4.3 -1.2-4.9 5.1-1.3M595.6,947.6l-3.5-2.6 -6.3-1.2 -3-1.3 -3.6,1 -4,0 -1.6-1.6 -3.3-1.4M597.1,921.6l-2-2.4 -1.4-2 -2.8,.2 -3.8-.2 -3.2,1.3 -2.2-.9 -3.1-.1M570.3,940.5l-2.2-2.3 1-2.8 -2.7-2.3 1.1-3 -.8-2.6 -.4-2.3M578.6,917.5l-2.7,1 -2.6,3.1 -2.9,3 -4.1,.6M612,898.6l-7.5-3 -3.3-2.9 -3.6,.9 -3.6,.3 -4,.2 -3,1.9 -4.3-.4M612,898.6l.6,3.7 1.7,3.3M582.7,895.6l.5,2.6 -.5,2.3 .3,2.8 1.7,1.8 -1.1,2.9 .9,5 -2.5,1.5 -3.4,3M614.3,905.6l-1.2,1.3 -2.4,2.1 -1.9,4.1 -3.6,1.2 -2.7,3.1 -2.9,.7 -2.5,3.5M531.8,926l.8-2.4 3-2.1M558,955.6l2-3.8 .6-2.9 2.2-3.5 3.2,.7 3.3-3.1 1-2.5M535.6,921.5l2.7,0 4.9-.3 2.4,1.6 1,2.6 3.7,4.5 4.2,1.6 3.8-4.3 6.7-2.8M565,924.4l1.3,.8M582.7,895.6l-1.4-1.1 -2-1.9M579.3,892.6l-2.6,3.7 -3.7,.7 -4.4,.5 -3.1-2.1 -4.1,1.4M565,924.4l-.5-2 -1.6-3.1 -1.9-2 -3.7-1.8 -.9-3.5 1-4.7 -1.4-5.6 5.4-4.9M612.9,963.4l-2.5-2 -1.9,.9 -2.8-.9M612.9,963.4l2.7-1.2 1.2-1.7 2-1.8 1.2-2.4 2.7-.1 3.3,.6 2.6,1 .9,2.3M604,956.9l1.5-5.9 -.4-8.6 1.1-4.5 3.6-4.1 1.9-3.5 2-2.1 7.8,.9 2.6-7.5M604,956.9l1.4,1.9 .3,2.6M629.5,960.1l1.4-1.1 2.6-1.8M633.5,957.2l2.1-5 -2.6-3.9 -4.5,.2 -2-3.8 4.5-2.6 2.7-3 -5.8-7.2 4.3-6.2M632.2,925.7l-1-2.4 -3.7-.3 -3.4-1.4M590.3,977.9l4.6,1.9 4.5-2.3 3.5-2.3 1.9-3.3 1-1.5 1.1-3 -.2-3.8 -1-2.2M622,987.5l-1.9-3.6 -7.3-3.7 5.2-4.7 -4.6-4.9 1.1-4 -1.6-3.2M648.2,987.2l2.2-6.9 -3.3-5.2 -1.1-2.9 -2.3-3.1 -.9-2.4 -3.3-2.9 -4.8-2.5 -5.2-1.2M614.4,905.8l-1.1,5 -2.6,1.8 2,3.6 2.7,2.5 1.9,2.2 1.2,3.5 3.7,2 1.9-4.8M595.6,947.6l4.4-.7 1.6,3.5 -.9,4 3.3,2.5M646.6,954.4l-1.7-2.5 -1.3-2.4 -4.2,1 -.9,3.6 -3.7,.3 -1.3,2.8M649.1,926.5l-2-1.7M647.1,924.8l-2.4,.2 -2.2-.4 .7,2.6 -2.1,3.1 -2.6-2 -2.3-2.3 -4-.3M509.9,447.8l-3.2,.4 -5.6-1.5 .1-.7M501.2,446l1-5.4 -.4-4.1 1.5-5.9 5.3-1.5 -.8-6.9 -1.9-3.6M509.9,447.8l-3.5-1.4 -2.4,.7 -2.8-1.1M501.2,446l-1.7-.7 -2.8-.6 -5.5,0 -5.7,2.6 -5.2-.2 -3.4,3.5M461.6,411.4l-1.7,2.5 -1.6,1.5 -1,4.4 2.4,2.6 -2.2,.2 -2.3,1.5 -1.5,4.1 -.5,3.2M453.2,431.4l.9,1.9M476.9,450.6l-1.8-.5 -3.3-.9 -3.3-1 -4.8-1.6 -3-3 -6.2-2.4 -1-2.9 .1-.3M453.6,438l.1-1.1M453.7,436.9l.4-3.6M83.5,577.3l2.7-.1 3.2-.7 3.4,8.2 7.9,3.9 6.6-2.4 3.9,1.7M83.5,617.2l1.6-.2 6-2.3 4.2-3.8 8.4,.6 4-3.4M111.2,587.9l-1.9,4.3 -1.7,2.7 -2.4,.2 -2,1 2.5,1.7 .4,2.7 -3.7,4.4 5.3,3.2M105.7,644.8l2.2,1.3 3.2-1.4 1.1-3.2 3.2-2.4 -1.2-4.8 2.1-3.5 -1.5-3.3 .9-4.7M105.7,644.8l-2.8,1.4 -3.5,2.8 -4.9,3 -4.6-.2 -5-2.6 -1.4,.5M107.7,608.1l1,2.8 .2,1.8 1.1,2.4 1.7,2.1 3.7,.7 .1,2.9 .2,2M253.6,335.2l2.7,.3 3.4,2.7 .4,3.1 1.1,1.8 .4,3.9M303.4,325.7l-5.3,5.4 -4.5,1.2 -5.4,4.5 -6.3-2.5 -1.5,4.4 -4.2,4 .5,2.6 -2.2,3.1M261.6,347l3.3,1 2.1,1 2.7,1.4 1.9,.4 2.9-2.4M219.3,370.9l-.5-7.9 1.1-6.5 1.9-3.8 -2.2-5.7 -5.1-2.3 -3-4.1 -3-2 1.6-5.1M219.3,370.9l-2,2.9 -1,1.9M195.7,387.5l.6,.3M216.3,375.7l-2,5.4 -3.9-.5 -2-1.3 -3.6,.9 -2.9,2.3 -2.6-.5 -2.7,3 -.3,2.8M141.6,478.7l.2,.2 2.2,.9M144,479.8l6.3-3.5 4.1-1.4 1.4,2.9 4.2,2.3 2.5-3.6 3-2.9 -.3-2.8M185.3,440.9l-.4,1.7M165.2,470.8l-2-3.2 .7-2.5 1.1-5.3 1.9-2.8 3.6-2.6 3.6-2.2 5.2-4.8 5.6-4.8M321,386.2l-.1-5.2 5.3-3.9 -4.2-3.7 -2.9-2 -1.6-2.9 -2-2.9 -4.7,1.7 -3.4-1.8M321,386.2l3.4,3.2 3.8-.4 2.2-.8 2.9,1.9 3.5-.3 1.9-1.3 1.3-2.3 3.5-2.4M343.5,383.8l-3.3-3.4 -1.7-2.6 -2.4-2.4 1.8-3.2 -2.7-4.5 .2-3.2 .9-4.8 2.1-7.8M338.4,351.9l-4.5,1.2 -3.2-1.4 -3.5-.1 -2.9-1.8 -3.2,2.3 -3.9-.9 -3.7,3.9 -1.6,3.6M311.9,358.7l-2.1,.9 -2.3,2.1 -.1,3.8M340.5,348.8l-2.1,3.1M361.2,393.9l3.6-3.2 3.6-1.9 .1-3.1 -1.4-4.1 2.7-3.8 3.2-4.4 6-2.5 4.1-2.6M361.2,393.9l-1-4.8 -3.9-.4 -2.1,2.9 -4.7-.7 -2.7-1.1 -2.4-1.4 -.7-3 -.2-1.6M305.1,327.4l2.6,4.2 -.6,3.7 4.4-.5 2.3,2.3 -1.7,6.6 .6,5.6 -.2,4.6 -.6,4.8M294.9,367.3l.9-2 -1.8-2.8 -.4-.4M293.6,362.1l-2.9-2.5 .6-4.5 -.8-3 -4.3-1.8 -5.4-3.3 -6.3,1.4M294.9,367.3l-1.5-2.8 .1-2.4 .1,0M293.6,362.1l2.5-1.2 2.8-.7 3.9,.2 2.9,1 1.7,4.1M453.2,431.4l.2,2.6M453.4,434l.3,2.9M453.7,436.9l.1,1 -.2,.1M453.6,438l-4.7,2.4 -.9-.4M448,440l-4.7-2.3 -3.5-.5 -4.9,.7 -6.6-2.3 -6.6-1.6 -4.4-4.5M454.1,433.3l-.7,.7M453.4,434l-4.2,5.5 -1.2,.5M448,440l-3.6,1.2 4.3,6.7 -5.4,3.6 1.9,8.9 -1.2,6.8 -5.4,4.7 -1.7,6M406.2,479.1l3.2-1.2 4-3.1 2.6-1.2 3.5,1.2 6.5,2.7 3.7-3.8 4.4,.7 2.8,3.5M406.2,479.1l3.1-3.4 1.9-2.3 1.8-3.3 -2.9-5 -2-2.3 0-2.6 -1.9-5.1 -1.3-2.9M417.3,429.5l-.7,3.6 -.7,2.4 -1.3,2.8 -3.2-.7 -3.4,3.4 0,4.7 -2.6,1.8 -.5,4.7M415.7,386.1l-1.8,4.3 4.8,4.8 -.3,3.7 .4,2.6 -2.4,4.2 -2.8,1.3 -1.5,5.8 -3.3,2.7M417.3,429.5l-3.5-2.2 .1-3.8 -2.3-2.8 -1.1-2.9 -1.7-2.3M535.6,921.5l2.2-4 -2-2.8 -2-2.5 -2.6-1.1 2.4-2.6 -.1-1.9 2.2-2.4M561.4,896.8l-2.2-1.2 -2.8-1.1M535.7,904.2l2.5-2.3 2.6-.7 5,.6 2.7-.9 1.9-1.8 1.1-3 1.8-1.5 3.1-.1M336.7,846.6l-.6,1.3M288.3,883.2l-2.8-1.7 -3.1,0M104.3,705.3l.6,2.9 -2,2 3.4,2.2 1.2,2.7M109.2,714.7l.8-.8 2.4-1.7 .7,1.5M1167.5,856.8l-.1-3.7 1.2-2.3 3.6-1.4 .3-.6M1167.5,856.8l1.9,1.5 2.1,3.3M1171.5,861.6l1,1.1M1162.1,987.5l-2.1-2.1M1160,985.4l1.9-2.6 .9-4 1.3-4 3.5-1.6 -.4-3.4 -1-2.5M1166.2,967.3l4.5,.1 1.8-3M1160.8,987.5l-.8-2.1M1140.2,963.5l1.4-1.2M1141.6,962.3l1.3-1.1 1.6-2.2M1144.5,959l.4-.5 .2,6.7 6.8-1.4 5.7,2.2 3.5-1 1.8,1.9 3.3,.4M1140.2,963.5l1.4,4.1 2.2,1.2 .1,4.8 0,5.9 -1.6,4.1 -.7,2.4 -1.7,1.5M1087.9,917.3l3.6,3.9 4.9-3.9 3.5-5.6 2.5-2.7 1.7,5.8 5.7,.2 4.3-.9 5.7-.7M1087.9,917.3l-1,2.1 -.9,2.8 -1.9,2.8 -1.4,1.8M1092.7,931.8l-3.9-1.4 -3.9-2 -2.2-1.6M1092.7,931.8l2.1,1.1 3.6,2.2 2.8,2.7 3.4,.3 3.2-1 1.2-4.6 3.7-2M1112.7,930.5l2.5-3.2 -1.5-3.6 .8-2.2 3.4-2 -.2-3.3 2.1-2.8M1166.1,912.3l-3.3-1.7 -4.3-1.5 -2.4-1.2 -1.8-.3 -.2-3.6M1166.1,912.3l-.4,2.6 -1,3.7 2,1.8 1.3,1.4 2.1,.7 2.1,1.3 .2,2.7 -.2,4.3M1172.2,930.8l-.9,2.4 -3.5,1M1167.8,934.2l-2.5,0 -3.4,1.5 -4.6,3.3 -5.5-4.8 -3.2-2.1 -.8-3.2 -2.2-3.3 -2.4-2.3M1143.2,923.3l.8-5 -3.5-1 2.5-2.5 3.3-1.3 3.2-1.2 1.4-3.4 .8-2.6 2.3-2.2M1087.9,917.3l-3.5-4.4 -1.6-4 1.4-6.1 -.7-4.7 4.9-3.2 1.9-6 0-3.3 1.5-3M1123,898.3l-1.6-3.5M1123,898.3l-.5,4 -1.5,3.7 -2.4,.9 1.4,2.9 1.3,2.5M1121.4,894.8l-3.9,1.9 -3.3-2 .5-2.7 -2-2.1 -2.3-4.7 -2.7-2 -5.5-2.4M1102.2,880.8l-.7-.3 -1.9,1.3M1099.6,881.8l-2.4,1.6M1121.3,912.3l-1.5,1.1M1091.8,882.6l2.4-.9 3,1.7M1123.1,865.3l.5-1.9 0-2.7 .6-3.4 -1.2-4.6 -2.3,1 -2.2,.5 -2.2-3 -.6-2.5M1123.1,865.3l.7,5.1 -5.6,.8 -1.9,3.2 -2.3,2.7 -4.9,3.2 -5.8,.1 -1.1,.4M1102.2,880.8l-2.6,1M1099.6,881.8l0,0 -2.4,1.6M1087.1,877.7l.3-2.5 1-2.2M1087.1,877.7l2.1,3 2.6,1.9M1088.4,873l2.5-4.2 -2.3-6.3 1.9-3.5 6.2-2.2 4.7-5.2 6.2,.5 5.1-1.9 2.8-1.5M1157.5,891.5l-1.6,2.8 -1.4,1.5 -1,3 1.5,3.2 -.9,2M1157.5,891.5l-1.3-1.7 -1.6-3.1M1123,898.3l2.1,.1 3.4-1.4 3.2-.7 5.3,0 2.8,4.4 2.8,5.3 4.5-3.7 6.9,1.8M1121.4,894.8l.9-3.9 2.2-1.6 1.6-3.7 2.5,.7 3.4-2 3.1-1.5 .3-4.5M1135.4,878.3l2.9,.5 0,3.1 2.7-.2 2.9,0 4.3,1.8 2.7,1.3 3.7,1.9M1123.1,865.3l2.4,2.4 2.5-1 2.2,1 2.4,.4 2.1,1.9M1135.4,878.3l2.3-2.4 .1-3.2 -3.1-2.7M750,981.5l.8-3.3 1.6-1.9 3.3-.8 -1.1-3.3 2.6-3.1 4.3-.8M790.5,987.5l-1.3-2.3 -4.3-2.8 1.4-3.1 -3.2-2.2M783.1,977.1l-1.9-1.5 -3.1,.3 -4.3-1.2 -3.9-1.9 -2.4-.2 -2-3.2 -4-1.1M744.1,936.2l-2.7-1.3 -2.5,.8 -.9,2 1.8,2.9 -3.6,2M744.1,936.2l1.8,2.7 2.6,1.8 3.5,1.9 2.7-.4M754.7,942.2l-2,3.8 .6,2.9 2.6,2.1 5.2,1.9 3.3,1.6 -1.4,4 -.5,3.9M761.5,968.3l2.5-2 -1.5-3.9M744.1,936.2l-1-2.3 2.3-3.5 -2.8-2.9 -2.1-1.5 2.2-2 1.1-1.7 -.1-4.3 0-2.5M750.3,907.1l2.7,4.5 4.7,1.5 1.3,3.2 5.1,1.9 5-2 5.8,1.4 8.1,.1 7,1.6M750.3,907.1l-3.5,2.7M790,919.3l-.4,3M754.7,942.2l2,1.4 3.4-1.4 2.7,3.4 3.1,1 6.1-.8 -1.6-5.8 2.4-.9 4.1-1.5M746.8,909.8l-2.5,1.4 -.6,4.3M789.6,922.3l-2.7,2.4 -.8,5.2 -1.5,2.8 -4.2-1.3 -.7,4.1 -2.8,2.1M762.5,962.4l2.9-1.4 2.2-.9 4.2-.9 3.7,.5 3.6-2.7 2.5,1.9 2.2-3.1M776.9,937.6l-.2,4.3 .3,3.9 -3,2.6 2,3.1 2.7,.9 2.8,2.4 2.3,1M783.1,977.1l3.4-2.6 .8-2.4 -.6-4.2 -.8-2.5 1.7-2.7 2.5,.2 2-2M783.8,955.8l2.3-.3 2.6,.1 1.9,1.8 1.5,3.5M660.1,928.9l1.6-4 2.3-3 3.2,.8 1.8-1.1 2.7-.6 1.4-2.9 3.2,.7M679,951.1l.3-3.2 1-3.4 -1.6-1.2 -2.2-1.7 -2-4 1.5-6.8 3.4-.5 3.7-1.6M676.3,918.8l-1.3,4.3 3.9,1.9 2,2.5 2.2,1.2M710.3,943.7l-2.5-2.5 -4.5,.2 -1.9-2.9 -.5-1.8 4.2-1.5 2.1-1.2 -2.2-2.7 0-2.2M683.1,928.7l1.3,3 4.1-.4 4.1-1.2 3.1-.8 2.8,.4 1.4,1.8 2.7-.3 2.4-2.1M743.7,915.5l-5.8,1.8 -5.7,1.2 -8.9-.8 -1.5-9.4 -4.3,.2 -2.4-.3 -4.3,1.9 -1.7,4.2M705,929.1l1.6-2.1 1.6-2.2 2-2.9 -.2-3.7 -.9-3.9M746.8,909.8l-1.3-5.7 -6.8-.9 -4.7-3.6 -.5-9 -3.6,2.1 -3.4,.1 -3.9-1.9 -2.5-4.6M720.1,886.3l.1,2.4 -1.5,2.9 2.3,4.9 -.1,4.2 -2.2,2.2 -3.3,1.3 -3.5,4.1 -3.6,4.8M709.1,914.3l-.8-1.2M946.9,867l2.5,.3 1.8,1.5 2.9,.5 2.7-.5 2.7,1.2 .2,3 2.7,4.3 -1.9,4.3M946.9,867l2.6-2.6 2.4-.3 -.8-2.5 2.3-2.9M972.1,866.9l1.4,3.4 -.9,3.7 -2.1,3.5 .9,3M972.1,866.9l-1.4-2.9 -1.7-1.3 -2.7,.1 -2.2-2.5 -2.6,0 -2.5-2.8M960.5,881.6l1.7-1.3 2.7-1.7 3.8,1.5 2.7,.4M953.4,858.7l3,.7 2.6-1.9M1002.1,867.3l2,2 1.1,2.4 -2.8,2.3 -.1,2.8M1002.1,867.3l.7-3.3 -.6-3.4 -.3-2.1 -2.9,.1 -1.7-1 -2.3-1.3 -3.3-3M991.7,853.3l-3.6,.5 -4.7,.2 -2,.5 -2.7-.1 -2,2.1 -.3,4 -.1,3.3 -4.2,3.1M975.4,883.9l2.3,1.1 2.3-.9 2.3-1.2 1.7-2.7 5-1 2.7-1.2 2,6.2 5.9-3.1M975.4,883.9l-1.6-1.9 -2.4-1.5M1002.3,876.8l-2.7,1.7 0,2.6M932.1,987.5l1.9-.3 2.2-2.6 3-2.8 3.8,0M943,981.8l-2.6,5.7M109.3,683.2l4.3,.7 4.4-.1 4.8-.2 .9-3.5 3.9-.6M105.7,644.8l1.8,1.7 2.2,.7 .1,4.6 3.1,2.8 4.2-1.5 3,1.7 3.1,.6 3.4,.2M126.6,655.6l-3.3,1.9 .4,4.2 1,3.4 2.8,5.1 1.5,2.9 1.2,2 -1.8,2.2 -.8,2.2M133.9,721.1l3-1.7 .7-4.3M138.4,724.5l3.5-4.4 -4.3-5M127.6,679.5l-2.2,3.4 -.5,2.9 2.9,1.8 2.1,1.9 2.7,3.3 2.9-1.7 2-1.5 1.7-1.2M139.2,688.4l1.5,3.6 1.1,2.4 1.2,1.9M137.6,715.1l-.7-3.6 1.2-4.2 -4.3-1.3 2.1-3.1 4.8,.5 2.1-2.5 .2-4.6M784.2,265.8l.7,.5M784.2,265.8l-4.5-4.1 -4.8-1.4 -.3-6.5 0-3.8 -4.2-2.7 -4.3,.8 -.1-4.7 -1.8-6.5M784.9,266.3l2.2,.3 2.3-1.8 1.7-2.5 .9-3.8 3.7-1.9 .7-3.9 3.2-2.6M764.2,236.9l2.6-1 1.2-1.6 3.4-.6 2.2-1.9 3.2-2.2 3.7,.3 2.1-1.3 2.7,.6M785.3,229.2l1.7,2 4.1,.2 1.8,1.8 3.3,.6 -.3,3.3 3.7,.2M799.6,250.1l1.5-2.7 -.7-2.1 -2.8-1.7 2.4-2.3 -.4-4M752,282.6l2.3,3.8 1.7,1.8 3.3,1.6 3.9,1.8M753.3,269.6l4.3-4.4 4.5,5.8 3.2,.9 3.4,1.7 4.4-2.4 4.9,.2 3.9-2.6 2.3-3M763.2,291.6l1.3-2.5 .4-4.6 2.5-2.6 3.8-2.3 3.3-1.1 4.8-2.6 2.8-3 3.5-4.5M785.6,268.4l-.7-2.1M743.8,257.5l2.8-2.9 .7-2.6 2.1-1 3.1-2.8 2.9-2.4 .8-3 5.4-3.3 2.4-2.7M809.8,251.2l-1.8-.4 -3.6,.3 -4.8-1M806.7,235.8l-3.7,1.2 -3.4,.3M763.2,291.6l0,2.4 .7,2.3 -1.8,1 -1.1,3.2 -.4,3.4 3.1,.4 1.4,1.7M737.2,307.1l4-1.5 2.2,1.6 3.3,1.6 -.1,2.4M765.1,306l-2.3-.9 -2.5-.6 -.2,1.8 -2.1,2.4 -3-4.6 -4.2,.9 -.4,5.2 -3.8,1M509.9,447.8l2.2,1.7 1.2,2.8 2.6,.4M523.8,384.6l4.9-.2 2.8,4.1 1.8-2 3.4-1.2 3.6-1.4 -.8-2.9 1.3-4.3 2.6-2.1M515.9,452.7l3.3,1.5 4.4-.3 2.5-.3 3.1,.1 3.3-6 4.5-.6 4.9,3.8 9.7-1.5M543.4,374.6l-1.2,10.6 -4.6,12.6 -3.6,9.2 10.6,9.8 2.6,7.3 5.6,.1 1.4,10.1 1.5,7.1M551.6,449.4l1.5-2.9 .3-2.7 2.3-2.4M650.2,120l1.4-3.8 -2.1-5 -.9-3.8 1.1-4.6 3.6-2.2 1.9-4.5 -3.5-5.8 -3.2-4M650.2,120l2.7,1.7 1.6,2.2 1.7,1.4 3.2,1 2.8,.5 3.9,1.7 3.3-2.1 2.6-.7M672,125.7l-.4-3.3 2.2-.3 1.8-1.8 .2-4M676.1,83.9l-1.9-1.4 -2-2.8M672.2,79.7l-2.9-2.1 -3.2-1.4 -1.5,4.2 -6.8,2.4 -3.1,3.2 -3.2,.3 -3,0M633.6,125.2l-3-3.6 -.5-5.8 .5-6.2 -2.3-6 -5.4-7 1.3-6.8 -8-8.3 -9-.3M633.6,125.2l2.7,1.7 2.2,2.3 3.7-2.5 3.3-2.4 1.9-2.2 2.8-2.1M607.2,81.2l2.7-6.2 3.7-1.6 5.3,4 7-.4 5,.7 2.7,.3 3.9,3.1 4.1-2.5M641.6,78.6l1.7,1.1 .4,3.1 2.6,2.8 2.2,.7M785.3,229.2l1.4-3.2 1.2-3.8 -.7-3.8 -4.7-2.7 4.9,.7 3.6-3.8 1.3-3.7 -.4-2.4M791.9,206.5l.6-2.7 1.2-2 3.1-1.2 -.3-2.3 .9-.8M764,236.8l-3-3.1 .6-2.2 0-3.5 -2.6-2.9 -2.7-1.3M756.3,223.8l-.9-4.1 2.8-5.8 0-2.7 2-2.4 1.8-1.3 2.5-2.3 3.7-2.9 4.9,1.2M791.9,206.5l-3.3-.8 -2.4-1.7 -3.6-.8 -2.1,1 -3.1-2.2M773.1,203.5l1.8-.7 2.5-.8M738.6,74.6l2.5-1.6 2.4,1 4.4-.8 1.5-2.1M738.6,74.6l-2.5-3.7 -3.6,.8 -1.4-3.7 -3-3.6 -2.5-.2 -2-2.5 -2.7-2.6 -1.5-2.9M719.4,56.2l-.7-5.6 3.9-3.6 1.1-2.9 -1-3.4 .1-4.4 .6-.8M705.1,89.8l4.2-.1 1.3,4.2 1.2,2.7 4.2,1.5M702.5,83.5l1-3.9 -.5-2.4 .5-2.5 3.2-2.9 .6-3.3 -1.9-2.4M705.4,66.1l3.6-1 1.8-2.3 1.5-2.7 -3.5-2.3 2.9-2.7 3.7,2.5 4-1.4M738.6,74.6l1.9,1.9 1.8,3.2 -1.6,3.7 -2.2,1 -1.9,2.5 -1.4,3.3M735.2,90.2l-2.1,1.3 -2.7,2 -3.3-1.5 -2.4-.5 -1.2,2.4 -3.4,1.3 -2.6,.2 -1.5,2.7M721.5,246.7l-1.8-3 0-3.2 .6-1.9M737.1,215.6l-3.2,1.8 -3.6-.3M737.1,215.6l3.8,2.1 2.2,3.5 3.3,2 4.4,3.1 2-1.8 3.5-.7M730.3,217.1l-3.1,2.4 -2.4,2.4 -4.4,1.8 -1.6,3 .7,2.2 1.6,2.4 -.4,4 -.4,3.3M679.4,274.5l1.3-3.9 -2.2-3 -3.6-1.1 -4.1-2.4 -.2-3.1 -.9-2.1 .3-2.5 .3-2.7M699.6,256.9l-3.2-.5 -2.8-2.9 1.7-4.2 -4-1.5 -2.3-.2 -2.8-1.7 -4.3,1.3M670.3,253.7l1.6,.8 2.9-.3 3.8-2.3 -.4-2.8 3.7-1.9M720.3,238.6l-3.8,.5 -2-1.8 -3-1.7 -5.3,1 -4.2-1.3 -2.6,.3 -3.7-2.1M695.7,233.5l-2,.5 -2.9,2.3 -3.3,.9M681.9,247.2l1.3-2.6 1.8-2.6 1.9-2.8 .6-2M697.3,207l-5.4,.2 -2.1,3 -2.3,3.9 .9,3.2 -3.3,2.5 -2.9-.4 -2.4-1.9 -.2-.1M679.6,217.4l-3.7-.9M697.3,207l2.9,.5M700.2,207.5l-.5,3.6 -.5,3.6 -.5,3.2 4,2.4 -3.4,1.7 -2.8,2.2 -.9,3.9 .1,5.4M687.5,237.2l-3.2-4.8 -2.7-2.1 -3.1-2.6 .5-2.7 .2-3.8 .4-3.8M679.6,217.4l0-.1 -3.7-.8M679,187.5l.1,5 3.6,4.3 2.8,.8 .3,4.2 2.5-.9 3.5,1.1 2.4,3.8 3.1,1.2M674.4,190.2l-1.6,2.4 -1.8,2.6 -1.3,3.6 -2.6,.8 3.8,4.6 4.4-.7 .5,4.8 -3.4,7M672.4,215.3l3.5,1.2M543.4,374.6l3.1-2.3 .2-2.3 3.2-1.1 .1-2.4 1.1-2.8M555.7,441.4l4.5,1.1 6.5-.9 1.7-5.8 4.4-6.5 3.1-5.1 4.1-.7 8.7-1.4 .2,1.7M588.9,423.8l.5,7.2M589.4,431l-1.7-3.5 .8-3.5 .4-.2M588.9,423.8l3-1.1 -.4-4.1 -.2-5.8 1.2-3.8 7.3,.3 3.6-2.1M603.4,407.2l-9-8.4 1.1-10.9 -4.4-4.1 -7.9-.4 -8.3-2 -3.2-9.2 -8.6-.2 -12-8.3M551,356.9l.8,2.9M624.9,314.8l-1.3,6.6 3.9,2.8 -1.7,2.5 1.1,3.8 -5.9,5.9 -5.7,2.8 -4.3,7.5 2.3,6M613.3,352.7l-9.9,3 -4.5-5.2 -5.2,10.2 -11.4,2.1 -9.5-6.6 -7.4,6.4 -8.2-3.5 -5.4,.7M551.8,359.8l-.7,3.9M606.2,154.2l-3.7,1.5 -5.1-2.7 -2.7,1.9 -3.9-1.8 -.9-3.9 -2.3-3.4 -4.4,1 -5.5-.4M606.2,154.2l2.4-2.6 1.8-1.6 5.7,1.3 1.4-4.6 2-1.9 1.8-3.3 2-1.3 1-3.1M625.4,133.9l-6-2.8 -4.4,.2 -2.6-7.1 -3.4-4.1 -6.4-.9 -3.9-3.4 -4-1.9 -7.2-.9M625.4,133.9l-1.1,3.2M587.5,113l-3.6,3.6 -6,1.2 -2.3,3.4 -.5,2.8 0,1.6 -.2,3 -1.4,3.4 -.7,4.5M577.7,146.4l-2.1-2.4 -1.8-2M572.8,136.5l-.1,3.2 1.1,2.3M607.2,169.7l-1.6-3.6 2.7-2.3 .6-2.7 -2-3.5 -.7-3.4M569.3,182.2l2.8-4.2 2.5-3.1 -.9-4.8 1.8-4.7 -.5-6.6 -.1-5 .4-3.5 2.4-3.9M647.9,170.2l-6.7,.1 .5-8.7 -4.4-1 -2.5-4.7 2.3-5.8 -.5-4.5 -5.6-2.6 -6.7-5.9M584.7,79.7l.3,3.8 1.2,2.9 -3.3,3.6 -1.5,2.8 6.8,3.8 -2.5,9.2 .6,3.4 1.2,3.8M633.6,125.2l-1.2,3.9 -2.3-.6 -3.4-.2 -.6,3.1 -.7,2.5M672,125.7l2.4,2.5 1.8,2.4M670,156.8l-.6-4.9 -.5-4.7 5-.4 6.2-4.1 -.8-2.7 -2.7-3.7 3.8-3.2 -4.2-2.5M542.4,115.7l1.5,4.5 1.9,4.3 1.9,3.1 5.4,3.3 6-1.2 3.1-1.8 .9,6.9 9.7,1.7M544.6,156.4l4.7-2 2.1-4 3.8,3.4 3,3.1 4.3,1 5.9-1.7 -.7-9.4 6.1-4.8M422.1,35.5l1.1,2.1M389.8,91.8l-5.3-7.5 -10.3-4 -10.1-8.8 1.2-15.9 -.6-6.3 -.7-9.2 -2.2-4.6M557.6,60l-6.1-3.6 -3.1-3 -1-3.6 -3.9-1.5 5.7-5.6 -5.3-7.2M511.4,66l1.7-4.3 4.3-6.6 -1.9-6.7 -5.1-4.7 4-7.5 .1-.7M471.2,50.1l-.7-2.8 1.2-2.1 1.7-2.1 3.1-3.8 .7-3.8M389.8,93.3l-5.8,3.6 -4.8,2.5 -3.4-2.4 -5.2,3.3 -6.4-8.1 -13.5,3.6 -8.6-4.1 -5.7,2.9M336.4,94.6l-2.1,.9 -3.2,1.1 -4,1.8 -1.9,3.7M340.3,156.3l-.9-2.5 -1.7-4.3 -4.8-4.4 -2.4-3.3 -5.1-2.1 -2-3.3 -.2-4.2 -3.5-2.6M446.7,160.1l-.2,2.5 -3.5,.6 -4.9-.6 -.4,4.7 -3.2,.4 -3.9,2.1 -3.5-1.6 -3.1,3.6M446.7,160.1l3.7,.6 3.7-.1 3.7,.2 2.6,2.8 1.6,6.9 -2.8,4 3.5,4.8M462.7,179.3l0,0 6.3,.5M469,179.8l-6.3-.5M462.7,179.3l-.1-.1 -2.2,4.1 .2,4.9 -5.6,4.8 -3.9,6.5 -3.7,2.8 7.2,7.4 -5.6,9.5M424,171.8l-2.2,2.5 -1.2,1.7 -.3,2.9M420.3,178.9l3.9,5 1.6,3.3 4,4.7 -2.8,3.9 -5.5,9.1 5.1,6.4 5.6,3.3 6.9,9.2M449,219.2l-3.9,.9 -1.8,1.1 -1.9,3 -2.3-.4M450.8,119.4l.5,7.8 -.9,4.3 -5.1,4.6 3.3,7.3 .5,3.7 -1.8,4.6 -2.1,4 1.5,4.4M477.1,180.3l-4.1-.8 -4,.3M502.1,235l-7.5-7.5 -6-7.2 -8.9-.5 -5.6,.1 -6.9,2.6 -9.1-5.4 -3.9-.7 -5.2,2.8M387.5,195.6l4.5-.5 2.6,1.6 3.1-7.5 5.6,2.5 7.5-1 3.5-3.9 4.3-4.4 1.7-3.5M377.4,213.3l3.2,.6 3.6,.7 -.1-2.9 2.7-1.8 2.4-2.3 .7-4.3 -2.2-2.9 -.2-4.8M426.2,240.9l1-2.4 2.6-3.2 -1.4-3.8 -.9-3.2 1.9-.5 2-1.9 3.9-.8 3.8-1.3M323.8,35.5l.5,.5 1.3-.5M282.8,35.5l.5,.6 2.3,1.4 1.8,2.4 2.8,.7 1.8,2.1 .4,3.6 -.6,3.9M291.8,50.2l4.9-3.2 4.2-3 2.5-3.3 4.4,1 3.8-1.7 5.1,1.5 4.6,1.4 5.8-3.2M331.1,35.5l-.1,.1 -1.8,1 -2.1,3.1M278,79.1l3.8-6.5 5.1,.5 -6.3-2.9 3.3-8.4 2.4-3.1 1.8-1.7 3.4-2.7 .3-4.1M336.4,94.6l-5.7-11.9 -7.6-5 .1-6.6 1.3-8 -.2-4 3.1-4.2 -.5-6.2 .2-9M348.5,210.6l-4.9-3.9 -6.9,2.6 -8.3-1.7 -4.4-2.1 -6.3-4.6 -5.8-3.9 -7.4,.4 -7,3.7M348.5,210.6l-.4-9 2.9-5.2 1.2-4.1 -2.3-6.1 -3.5-7.6 2.7-6.1 -6-1.3 -4.8-8.2M338.3,163l-5.3-1.3 -5,.7 -2.7,7 -4.5,6.4 -10.4,5.5 -11.5-6.6 -8.3,6.6 -6.6,2.2M297.5,201.1l-2.9-4.3 -2.1-2.3 -.8-3.4 -1.8-1.3 -3.1-.2 -1.5-1.7 0-3 -1.3-1.4M352.8,215.9l-3.1-1.9 -1.2-3.4M291.4,245.5l2.7-8.6 3-5.1 -5.7-2.7 .4-6.9 .7-7.2 .8-7 2.3-4.4 1.9-2.5M340.3,156.3l-1.7,2.9 -.3,3.8M282.6,182.8l0-5.8 2.3-10.6 4.2-3.3 7.6-3.6 3.2-7.2 3.4-3.8 -6.7-4.6 .3-7.1M282.6,182.8l1.4,.7M261.7,245.6l1.6-2 0-2.8 -2.5-2.4 -2.4-2.9 -.9-1.6 -1.7-2.7 3.2-2.5 -.2-2.7M258.8,226l3.1-3.9 -1.9-5.7 .5-7.4 3.3-6.6 3.1-5.4 5.4-5 7.4-1 1.6-8.1M281.3,182.9l1.3-.1M202.8,152.9l1.2-4 1.5-2.3 1.5-3.8 1.2-2.5 4.3,.5 5.1,.4 4.7-6.7 5.2-1.2M202.8,152.9l4.9,4.6 1,10.2 -.5,2M209.1,193.1l2.8,1.5M227.5,133.3l6.4,6.7 -4.3,7.4 6.9,4.3 5.3,1.5 3.5,4.3 6,1.6 -3,4.8 .8,6.6M222.4,191.6l2.8-2.2 2.8,.3 4-3.3 -.9-3.9 3.4-3.4 2.3-3.8 8.9,.7 3.4-5.4M222.4,191.6l-4.2,1.4 -3.9,.4 -2.1,1.3M182.5,144l3.8-.5 3.2,1.5 4.3,0 3.3,.3 1.9,2.5 1.6,2 2.2,3.1M182.5,144l-2-3.7 1.8-3 -2-3.1 -1.4-3.5 4-2.3 3.2,.3 2.8,.2M227.1,121.8l.1,2.3 1.9,3.8 -.8,1.9 -.8,3.5M173.7,148.5l-3.2,9.8 4.3,7.3 .2,.3M173.7,148.5l2.9-1 2.5-1 3.4-2.5M209.9,196.7l2-2.1M273.8,126.1l-3.7,5 -2.9,3.4 -1.9,4.7 -1.2,5 -6,10.3 2,8.8 -6.9,1.3 -4.1,5.9M258.8,226l-.9-7.2 -8.1-6.1 -10.4,.6 -8.7-4.9 -3.8-2.5 -4.3-5.9 .6-3 -.8-5.4M281.3,182.9l-4.7-1.1 -2.2,2.1 -6.5-1.2 -5.3,0 -4.6,1.8 -2.3-3.8 -1.8-5.1 -4.8-5M229.2,255l-4.3-5.7 -6.3-5.4 -2.5-7.5 -.3-5.1 1.1-6.8 1-11.2 -1.4-3.1M212.9,201.7l-.7-7M169.3,212.3l2.8-1.8 2.1-1.9 .8-1.7M83.5,174.6l1.1-1.2 2.4-5.4 2.9-1.9 .5-2.4 0-3.9M90.4,159.8l-2.1-1.6 -4.3-.6 -.5-.1M121.8,170.9l-1.2-3.6 -2.1-2.4 -.1-2.6M121.8,170.9l4.9,.9 3.6,0 1.6,2.8 -1.3,4.8 3.2,1.8 6.1-.3 2.8-.8 4.7,1.5M147.4,181.6l2-3.9 -2.3-6.4 1-2.3 1.7-4 4.6-8 7.6,1.6 6.2-5.1 -.5-5.2M120.4,153.3l-2,2.1 -2.9,2.1 1.2,3.5 1.7,1.3M120.4,153.3l3.1-3.6 1.1-7.9 6.9,4.7 4-8 5.7-2.3 4.1-1.9 3.8-1.3 5.6,3.2M167.7,148.3l-2.3-1.6 -.7-1.7 -1.4-2.1 -2.9-.3 -1.4-3.5 -2.4-.4 -1.9-2.5M106.9,193l-1.6-4.2 .2-6.7 3.6-.3 3.8-4.2 1.8-2.3 4.6-1.1 2.5-3.3M90.4,159.8l5.5,.1 3,.5 3.3,2.5 5.5-2.7 3,.5 1.8,1.2 3.3,0 2.6,.4M165.9,210.9l-.6-5.8 -.1-3.5 -2.8-4.4 -6.4-1.3 -3.6-.8 -2.3-4.2 .2-4.3 -2.9-5M173.7,148.5l-3-1.8 -3,1.6M152.1,119.3l2.8-1.4 .5-2.1 1.9-.5 2.1-2.6 1.2-2.8 1.2-2.2 1.2-2.8M152.1,119.3l1.7,1.5 1.4,2.3 2.7,3 -1.2,3 .6,3.4 -1.9,1 -.7,2.7M361.2,393.9l.3,2.8M408.8,415.5l-5-4.1 -2-4.5 -3,4 -4.2,.8 -3.1,0 -5.5-1.7 -4.7,.3 -4,3.6M361.5,396.7l4.3,.3 -.8,4.4 2.7,1.6 .7,3.6 .8,3 5.1-.8 3,5.1M404.9,452.2l-2.4-4.1 -4.3,.4 -2.5,4.3 -4.9,.8 -5.4,1.7 -6.5-4.9 -4.4-4.6 -1.6-6.3M377.3,413.9l-1.9,3.4 -2.5,2.9 .8,4.7 -1,3.2 .8,4.1 1.7,4.6 -2.3,2.7M535.7,904.2l-3.2-.5 -5.1-1.9 .8-3.8 -2-2.8 -1.8-1.5 -3-2.3 1-4.1M553.5,875l.1,3.2 -.7,1.8 3.2,3.8 .5,3.5 1.7,2.9 -.3,2.2 -1.6,2.1M553.5,875l-6,2.2 -3.4-2.2 -3-1.3 -4.2,1.5 -1.2,4 -3.1,2.2 -3.9-2.1M528.7,879.3l-.9-.5 -2.7,4.8M525.1,883.6l-1,2.2 -1.7,1.5M579.3,892.6l-.4-2 2.5-2 -3.3-.7 -1.7-1.6 1.5-2.2 1.1-2.4M553.5,875l3.1-.6 3.5-1.6 -2.3-1.7 -.7-3.2M579,881.7l-1.8-3.4 -5.7-.9 -3.6-.3 -4.1,.4 -.5-2.7 -1.2-2.8 -2.2-3.6 -2.8-.5M245.3,704.5l5.2,10.6 7.8,5.1 8.1,2.1 3.3,4.3 2.5,2.6 4.1,2.6 6.6,.9M282.9,732.7l1.1,.1 -1.1,7.4M245.3,704.5l5.7-2.7 3.5-1.1 0-3.3 3.2-2 5.3-3.3 4.5,1.9 3.7-1 6.3,1M282.9,740.2l-.9-3.8 .9-3.7M282.9,732.7l.1-.5 .8-4.2 -2.5-4 .8-5.2 1.7-5.6 4.7-1.3 3.5,.4M277.5,694l1.4,4.5 1.4,3.8 6,3.3 3.7-3.4 1.3,4 .5,2.2 .2,3.9M341.1,842.2l4.4-6 -5.7-5.7 6.5-3.4 5.4-5.6 4.2-3.4 5.5-3.4 -2.2-3.5 -1.8-4M341.1,842.2l14.8,1.8 11-.4 4.2,6.3 9.6,.8 1.7,1.9M385.6,856.6l1.5,6 10,3.3M401.1,867.1l6.7,1.2M357.4,807.2l2.9,2.2 2.7,.5 2.2,3.6 4.4,.7 1.2-3.8 4.3-1.1 4.6-.5 2.6-.6M382.3,808.2l2.5,.3 3.5,.3 2.8,2.5 -.3,4.3 3.2-2.1 3.2-.6 1,1.6 2.6,1.6M400.8,816.1l4.1,4.6 3.2,3.1 0,4.6 2.7,5.6 6.7,9 -.8,9.3 -3.6,4.8 -3.3,6.4M407.8,868.3l.6-2.4 1.4-2.4M336.7,846.6l3-2.2 1.4-2.2M307.9,765.1l-2.7-1.2 -2.4,1.1M307.9,765.1l6.1-.1 4.7,3.2 3.5,3.4 3.7,3.3 2.2-1.2 3.6-.4 5.1,2.1 3.1,.3M339.9,775.7l4.1,.7 1.1,3.6 1.8,1.6 1.8,3.7M348.7,785.3l-.4,4.1 2.6,2.5 .1,3.1 -1,3.5 1.1,2.6 2.9,1.9 3.4,4.2M413.2,764.9l-2.5-6.3 -4.9,2.5 -3.3,.8 -2.3-1 -1.5-3.8 -1.5-3.2 .6-3.7M413.2,764.9l-5.8,5.9 -11.9,.9 2,7.6 -5.4,4 -1.2,7.7 -4.8,3.3 -3,5 -.8,8.9M348.7,785.3l6.3-1.1 6,.4 6.3-7.8 2.9-6.6 4.4-7.7 13-3.6 5.8-6.4 4.4-2.3M228.1,797l-4.9,10.5 4.3,6.9 -1.6,2.1M1167.2,818.2l1.8,2.4 2.7,.4 .8-.4M1167.2,818.2l-3-.4 -1.9-2.1 -.1-4.3 2.3-2.8 -.8-4 2.5-3.1 1.3-2.9 -2.1-3.4M1165.4,795.2l2.8-1.1 1.5-3.4 2.8-.7M1138.7,925.9l5.7,1.8 -3,4.6 1.4,1.1 1.3,2.7 -.1,3.3 2.6,2.9 .8,2 1.1,3.4M1138.7,925.9l-2.4,0M1136.3,925.9l-3.1,1.9 -1,3.7 -3,.8 -1.7,1.5 -1.7,2.8 -2.5,2.9 -.4,2.6M1139.1,960.2l2.4,2.1 .1,0M1141.6,962.3l2.9-1 0-2.3M1144.5,959l.1-1.2 1.9-1.9 1.3-2.1 1.2-2.7 -.5-3.4M1139.1,960.2l-3.8-.6 -3.4-2.5 -2.8-2.6 -2.6,1.3 -2.2-2.5 -2.2-2.4M1122.1,950.9l-.8-2.2 -.3-2.6 2,1 3.1-1 -2.3-1.6 -.9-2.4M1163.2,943.4l1.8-3.2 1.9-3.2 .9-2.8M1163.2,943.4l-3-.3 -2.3,1 -3.1,1.9 -4.1-1.4 -2.2,3.1M1143.2,923.3l-1,2.1 -3.5,.5M1121.3,912.3l2.3,2.2 2.9,4.1 3.3-.1 2.6-2.7 1.1,2.1 -1.8,3.1 2.8,1.3 1.8,3.6M1112.7,930.5l.4,2.5 2.4,2 1,4.1 4.3-.1 2.1,3.1M1140.2,963.5l-1.1-3.3M1172.5,962.6l-1.5-1.6 -.4-1.8 -.3-2.9 -1.2-4.1 -1.9-1.9 -1-1.9 -2.3-1.9 -.7-3.1M1157.5,891.5l3.6,.4 2.5-.4 3.9,.2 3.5-2.3 1.5-1.2M1166.1,912.3l3.9-1.2 2.3-1.7 .2-.3M1167.5,856.8l-3,1.8M1164.5,858.6l-.4,.3 -2.7-1.2M1171.5,861.6l.6,3.2 -1.7,2.6 2.1,2.4M1154.6,886.7l3.6-4.5 7.3-.6 -2.7-5.9 2.5-6.2 .9-2.2 1.1-3.2 -2.5-5.4 -.3-.1M1164.5,858.6l-3.1-.9M1108.9,809.5l.5,2.3M1108.9,809.5l3.5-.6 1.3-4.6 .9-3.2 3.1-1.3 -1.1-3.1 2.8-1.8 -1-3.1M1118.4,791.8l2.7-.1 2.3,1.2 3.7-.1 1.8-3.5 2.8,.8M1141.1,803.7l-2.3,3.9 -2.8,2.2 -2.5,.3 -1.8,1.2 -1.9,1.3 -1.6,1.9 -3.2-.4 -1.5,1.9M1141.1,803.7l.3-2.7M1123.5,816l-3.1,.2 -1.7-.9 -2-2 -1.7-.3 -2.9,.2 -2.7-1.4M1141.4,801l-.7-3.2 -1.4-2.2 -2-3.8 -1-2.3 -2,.1 -2.6,.5M1167.2,818.2l-2.6,3 -3.6-2.2M1161,819l-1.7-4.2 -2.4-2.7 -2.6-2.1 -1.7-.7 -3.2,.4 -2-1.1 -3.5-.1 -2.8-4.8M1165.4,795.2l-2.9-2.8 -.4-1.8 -1.6-2.4 -3.2,.9 -2.8-2.8M1141.4,801l1.4-1.6 3.3,.9 -.2-4.1 2.2-2.8 3.7-2 2.5,1.4 .9-3.2 -.7-3.3M1132.9,830.1l-1.1,3.4 .9,3.2 -.5,3.1 -3.1,2.7M1132.9,830.1l2.3,0 1.8-2.1 2.7-1.1 3.7-.7 4.1,.7 2.1,2.1M1129.1,842.5l.8,4.3 .3,2.7 5-1.7 2.9,2 2.7,1.4 3.9,1.2 -.8,2.9 .9,2M1149.6,829l3.7,.1 1.7,.7M1155,829.8l.5,.1 -2.2,4.1 4.5,3.8 2.2,3.9 0,6.7 -.1,4.1 -5.4,3.1M1154.5,855.6l-3.6-.4 -3.7,2.1 -2.4,0M1161,819l-3.1,2.7 .1,3.2 -1.8,3.9 -1.2,1M1155,829.8l-.9,.7 -2.5-.4 -2-1.1M1123.5,816l-1,2.4 1.8,2 3.8,1.5 4.1,1.9 -1.5,2.4 2.2,3.9M1115.7,848.7l2.7-2.2 2.3-.2 3.3,2 1-4.3 4.1-1.5M1134.7,870l-.5-2.8 -.2-2.3 2-.8 2.7,0 3.7-1.9 2.1-1.5 .3-3.4M1161.4,857.7l-3.9-.3 -3-1.8M695.9,854l-.6,3.8 -3.5,.2 2.1,3.4 .9,3.3 1.1,4.8 2,4 .3,2.9 .4,5M695.9,854l3.6-1.3 1.5-2.2 2.8,3.1 3.3,1.6 5.5,1.7 5.6-1.5 2.1,2.7 1.8,2.8M718.4,881.6l-2.9-.4 -4,.1 -.2-2.9 -1.9,2.7 -3.1,2 -2.6-1.1 -5.1-.6M718.4,881.6l1.3-1.8 2-1.7 2.6-2.9 .5-3.2M724.8,872l-.5-2.4 -2.5-1.5 -2.7-2.1 .9-2 2.1-3.1M750.3,907.1l.8-2.2M790,919.3l1.9-2.6 3.6-1 1.4-3.7 2.7-3.3M777.7,887l-5.2,.7 -1.6,2.7 -2.1,7 -5.3,2.8 -1.4,4.3 -2.1,1.5 -2.9-2 -6,.9M777.7,887l3.7,.2M799.6,908.7l-1-5.1 2.8-5.2 -5.5-5.7 -5.1-.1 -1.1-2.2 -2.6-2.5 -2.9-.1 -2.8-.6M930.6,987.5l-2.3-1 -2,1 -2.2-1.5 -3.7-.9 -3.1-2.1 -1.4-2.3 -1.6-2.1M914.3,978.6l-2.2,5.4 -8.3-.4 -.8,3.9M682.7,894l.3,3M682.7,894l-3.3-2.5 -.7-2.7 -2.2-1.8 -4-2.7 -2.4-1.6 -1.2-1.4 -2.8-2.2M683,897l2.4,1.8 -.4,.7M685,899.5l-1.6,2.9 -2.2,1.2 -3.5,2.5M677.7,906.1l-3.2,2.6 -2.4,2.1 -1.8,1.1 -2.2,1 -5.9-2.9 -4.2,.3 -4.1,2 -3.2-2.8M666.1,879.1l-2.1,1.3 -3,1.7 -2.3,.7 -2.5,1 -2.8,1.8 -2.8,1.3 -.5,1.8M650.1,888.7l-1.3,3.7 -1.3,2.4 -1,2.6 .5,2 -.4,2.6M646.6,902l1.4,1.7 2.7,1.4 0,4.4M718.4,881.6l1.3,2.1 .4,2.6M698.6,881.4l-3.3,.6 -2.1-.7 -3.1,1.9 -4.5,.8 1.4,3.9 -2.9,3.8 -1.4,2.3M708.3,913.1l-5.5-.5 -4-1.1 -2.6-.4 -3.7-.4 -1-3.1 -3.7-3.9 -1.9-3.1 -.9-1.1M685,899.5l-2-2.5M676.3,918.8l1.1-2.8 -1.3-3.4 .7-3.5 .9-3M647.1,924.8l2.9-3.4 -1.5-3.9 .8-3.8 1.4-4.2M614.4,905.8l6.7-.5 1.6-4.2 4.1,1.9 1.8,2 4.4-1 3.1-2.9 5.6-2.2 4.9,3.1M1039.9,826.2l1.5-2.7 2.1-2.9 -3.4-4 -3.7-1.3 2.1-1.1 1.8-1.2 1.8-4.7 3.6-1.5M1039.9,826.2l3.8-1 1.8-2.8 4.1,1.7 1.8,1.9 1,2.3 2.8,1.8 1.7,5.3M1056.9,835.4l.4-3.1 .7-1.8 -2.4-5.5 4.5-3.2 1.4-3.3 3.5-2.7 3.4-1.6 .8-3M1045.7,806.8l3.8-1.7 2.5-3.2 1.2-3.1 3.4,.8 3,.5 2.6,.8 2.9,1.8 1.3,1.7M1069.2,811.2l.6-3 -2.7-2.9M1066.4,804.4l.7,.9M1085.3,845l-2.3-2 -1.7-1.4M1085.3,845l3.7-2.9 -1.2-5.3 6.1-.3 2.6,3.5 2.8-1.8 1.8-.4 2.7-2M1081.3,841.6l-1.8-3 -1.4-1.9 1.7-4.4 .1-4 -.5-2.2 1.4-2.2 .2-3.2 1.9-1.8M1103.8,835.8l.5-4.4 4.3-.4 .8-3.1 -1.4-2.5 .1-4.7 .1-3.7 -2-1.7M1106.2,815.3l-.6,2.6 -1.3,3.6 -4-1.1 -3.7,3 -2.6-.9 -4.2,.6 -1.4-4.2 -5.5,0M1055,848.9l4,4.8 .9,5.8 6.9,2.1 9,.1 1.8,4 .2,5.7 2.7,1.5 1.3,4.9M1055,848.9l-3.8-1.4 .1-4.3 2.2,0 2.6-1.7 2.3-1.8M1081.8,877.8l2.2,0 3.1-.1M1088.4,873l-2.8-4.6 -4.2-2.7 .5-5.8 -1.9-3.6 1.5-1.3 .2-3.3 1.9-3.1 1.7-3.6M1058.4,839.7l4.4-1.6 3.3-.8 1.9-1.3 2.8,1 1.9,1 3,0 2.5,1.9 3.1,1.7M1115.5,848.7l-.7-4.5 1.4-2.9 -2-2.1 -.4-2.1 -2.4-1.9 -3,2.3 -2.1-1.3 -2.5-.4M1058.4,839.7l-1.8-1.4 .3-2.9M1069.2,811.2l2.9,3 3.1,.7 1.4,2.3 -.4,2.5 3.8-3.1 2.9,2.3M1109.4,811.8l-2.3,.7 -.9,2.8M1095.1,794l-5.2,1.5 -1.9,3.7 -4.3,.5 -1.8-2.4 -2.8,7.3 -4.3,2.5 -4.9-.3 -2.8-1.5M1095.1,794l2.5,.9 1,3.4 2.7,1.7 .8,3.4 1.9,3 1.8,2.1 3.1,1M1026.5,847.9l.2-3.6 2.1-1.3 1.6-3.4 -2.1-3.6 2.5-3.9 .2-4M1026.5,847.9l-2.7-.5 -3-.8 -3.8,0 -3.3-3.8 -2.8-3.5 -3.5-1.6 -3.4,.4M1031,828.1l-1.5-1.8 .8-3.3 -4-1.5 -2.8,.8 -2.1-1.2M1021.4,821.1l-4.6,1.2 -2.9,1.4 -4.3,.1 -3.7,3.4 -1.9,2.3 -1.1,2.5 2.3,3.3 -1.2,2.8M973.5,902.1l-1.2-4 .3-3.8 -1.5-2.9 2-1.7 2.1-2.1 .2-3.7M973.5,902.1l2.8,1.7 .6,2.6 -.7,2 1.7,2.5 1,2.5 .8,1.7M999.6,881.1l-2.6,2.6 -.3,4.3 -2.7,1.6 1.8,5.2 1.4,3.2 1.3,2.4 3.1,1.3M1001.6,901.7l-1,4 -1.5,4.3 -1.3,3.8 -5.1,1 -4-.2 -3.3,3.5 -2.4-.3M983,917.8l-.2,0 -2.7-2.4M980.1,915.4l-.4-.3M1049.5,877.4l0,3.4 -3.2,2.7 -2.2,.5 -3.3-1.2 -1.3,4.2 -.2,3.2M1049.5,877.4l2.4-3.6 -5.1-2.5 -1.8-.8 -2.4-1.8 -1-2.4 -1.5-2.2 -.4-3.9 2-1.8M1033.6,857.4l3.2,.8 1,2.7 1-2.1 2.9-.4M1033.6,857.4l.5,3.1 -1.5,2.8 1.4,2.3 .7,3.3 -5,3.1 -4.4-.7 -2.4,5.3 2.7,6.1M1039.3,890.2l-2.9-1.3 -2.2,3 -2.1-3.3 -2.5-1.3M1025.6,882.7l.6,2.9 3.4,1.7M1076,880.1l-2.6,1.8 -2,1.4 -4.6-2.1 -2.7,1.3 -3.3-1.1 -1.5-3.5 -5.3-1.7 -4.5,1.2M1076,880.1l-.8,3.1 -3,.6 -3.3,2.2 -2.6,0 -.7,3.5 -2.8,4.5 1.6,5.4 -4.9,2.9M1059.5,902.3l.1-3.6 -3.4-4.2 -2.7,2.4 -2.7,1.8 -4-1 -2-1.3 -3.5-1.5 -1.4-3M1039.9,891.9l-.6-1.7M1055,848.9l-2.8,.8 -1.6,.4 -3.8-.2 -.4,2.8 -2.5,2.2 -2.2,3.5M1081.8,877.8l-4,.1 -1.8,2.2M1028.4,854.2l1.9,1.4 3.3,1.8M1028.4,854.2l-1.5-2.7 -.4-3.6M1031,828.1l2.4,.6 2.4-1.4 4.1-1.1M1028.4,854.2l-3.1,3.1 -.8,2.5 -3.2,2.2 -.2,2.6 -4.6-3.4 -6,3.7 -4,2 -4.4,.4M1002.3,876.8l2.3-.6 3.5,.5 4.5-2.1 5.2-.6 -1,5.3 2.8,2.2 3.9-1.3 2.1,2.5M1021.1,920.6l-2.3-2.5 -1.3-1.7 -1.5-2.7 .2-3.3 -3.7-2.4M1021.1,920.6l4.2-.3 .6-3.4 2.2-.4 2.4-.1 3.8,1M1012.5,908l2.7-3.7 5.9-3.9 -2.6-2.8 -2.3-4.3 2.9-3.5 3.2-.6 3.9-1.7 3.4-.2M1034.3,917.4l-.3-2.3 2.9-1.5 -.6-3.2 1.2-4 1.3-2.6 -1.8-4 2.4-2.9 .5-5M1012.5,908l-2.5-1.1 -2.7-.5 -3.5-1.5 -2.2-3.2M283.4,749.7l.6,2.7 2.7,3.8 3,4.5 2.1,3.8 3.6,.5 2.3,.6 2.2,0 2.9-.6M283.4,749.7l-6.2,4.7 -5.4,4.4 -5.5-1.7 -3.8-.5 -8.8,1.2 -3.8-5 -9.8,2.9 -6.9,6.1M228.1,797l-2-2.3 -.8-1.6 .1-3.8 -3.6-1.2M233.2,761.8l-.4,3 -1.9,1.9 1.6,5 -3.3,3.8 -.6,2.1 -1.1,2.9 -2.4,5.5 -3.3,2.1M738.7,128.6l.8-2.1M738.7,128.6l.3,2.1 -1.6,2.2 -2.8,3.3 -3.3,0 -2.6-.1 -1.9,.9 -3,.1M715.9,104.7l.7,2.9 1.1,2.5 2,4.6 1.7,4 6.9,1.1 2.8,3.6 4.4,3 4,.1M715.9,104.7l-3.1,3.7 -2.8,1.3 -2.6,5.7 0,4.3 -2.1,.7 -3-.1 -.1,3.8 -.5,3.2M723.8,137.1l-2.9,2 -2.8,.3 -3.5-2.9 -1.5-3.8 .9-4.9 -5-2 -3,.8 -4.3,.7M676.2,130.6l4.2-.8 3.8,2.2M716,98.1l0,2.8 -.1,3.8M684.2,132l4.1-.6 -1.6-3.4 3.9-.9 3.6-.8 2.7,.2 2,0 2.8,.8M746.8,141.5l.3,4 -1,2.6 -.2,2 -2.7,1.2 .9,4.2 -2.1,2.7M746.8,141.5l.3-1.8 -1.7-2.5 -2.5-.9 -2.1-1.1 .1-2.6 -1.1-1.9 -1.1-2.1M723.8,137.1l.7,1.9 -1.3,2.7 .2,3.1 -.6,2.1M722.8,146.9l-.6,3.4 .5,2.7 1.7,2.2 1.7,3.2 1.9,1.3 4.8-1.1 3.9,2.4M742,158.2l-2.9,2.3 -2.4,.5M737.1,215.6l0-3.7 -3.3-3.8 .2-2.4 .8-3.2 1.4-4 1.2-5.4 6.7-.8 3.3-5.8M773.1,203.5l-3.9-2 -.4-3.9 -4.1-2.2 -1.8-2.3 -1.6-2.8 -4.2-1.6 -2.3-1.5 -3.5-2M747.4,186.5l3.9-1.3M684.3,176.6l3.2-2.4 2.6,.6 3,.7M684.2,132l1.3,5.9 -1.2,5.2 4.7-.6 3.9,1.3 4.3-1.4 4,4.1 -1,5.9 1.8,3M693.1,175.5l-1.1-3.9 2.4-4.9 2.5-4.2 -4-2.5 2.8-.9 2.2-.9 3.3-.4 .8-2.4M722.8,146.9l-1.5,1.8 -1.4,1.8 -2.1,1.4 -.4,2.7 -2.8,2.2 -2,.2M702,155.4l1.9,2.5 2.5-.8 3.1,.9 3.1-1M785.6,268.4l.9,1M812.3,261.8l-1.9,.9 -.7,2.1 -1,3 -.9,2.9 2.2,2M786.5,269.4l3.6,.6 4-3.9 2.8,4.6 4.6-.7 1.8,2.1 1.6,.9 3-1.7 2.1,1.4M818,282.4l-1.1,1.3M810,272.7l2.2,.6 2.6,2.1 .7,.2M817,280.2l0,.1 -.1,3.4M865.9,415.3l-2.1,2 -1.4,2.9M870.9,424.1l-3.6,1.1 -4.9-5M712.7,327.1l1,3.8 1.1,2.8 1,3.1 -.6,2.2 1.1,3.6 5.7,1.4M746.6,311.2l2,3 .5,3.5 .8,2.4 -2.5,2.6 .2,4 .1,3.5 -1.1,4.2M746.6,334.4l-4,2.1 -.9,2.9 -3.6,1.3 -3.5-4.5 -3.2,3.3 -4.6,.5 -1.4,2.1 -3.4,1.9M675,336.2l-2.4,3.2 -1.1,.1M671.5,339.5l-3,.2 2.7,2.4M671.2,342.1l.4,.4 -.3,2.8 2.7,3.1 .6,4.5 3.7,.8 1.7,2.1M712.8,356.4l-4.9-2.3 -.5-3.9 -4.8,3.5 -3.6-4.1 -3.9-.7 -5,3 -6.5,1.7 -3.6,2.2M712.8,356.4l2.6-.9 3.8-2.2 .7-2.9 1.7-1.6M721.6,348.8l.9-2.5 -.5-2.3M476.9,450.6l-1.4,4 -4.5,4.8 .2,5.3 4.1,2.5 -3.1,6 -.3,5.6 -5.3,3.7 2.6,9M436.9,477.9l4.2-1.7 3.6,1.4 3.1,1.2 3.4,1.9 1.1,3.2 .8,2.8 1,2.5 1.4,1.9M455.5,491.1l2.6-1.1 1.1-2.1 3.7-1.3 2.3,3.6 4,1.3M515.9,452.7l-2.1,3.2 -5.2,.2 .4,4.2 .3,4.8 7.2,3.2 -2.9,8.6 .6,4.9 -5.1,4.2M551.6,449.4l3.9,3.8 1.3,7.1 1.2,4 -1.2,3.8 10.4,6.7 -2.7,9.7 3.6,3.1 4.4,3.4M572.5,491l-3.2,1.6 -3.8-.3 -3-.9 -4.8,.7 -6.5-1.2 -3.6,2.2 -8.9,4.1 -4.6,3.5M534.1,500.7l-3.4,.9 -4-.1 -2.3-4 -3.2-3.5 -3.3,1.5 -3.8-.1 -1.4-4.7 -3.6-4.7M469.2,491.5l1.7,1.2M470.9,492.7l4.4-2.6 2.7-1.4 5.3,1.4 3.9,.7 2-1.6 3.2-3.3 7.2,1 1.9,4.2M509.1,486l-1.9,3.2 -3.4,1.9 -2.3,0M534.1,500.7l.3,3.1 -1.9,3.5 -4.2,2.1 -3.1,1 -5,4.2 -1.9,7.5 .8,2.2M519.1,524.3l1.5,4.1 3.8,2.1M501.5,491.1l-6.9,4.2 4.2,6.4 3,4.3 .5,4.1 7.3,4.3 -.3,6.3 -.6,5 -3.5,3.5M524.4,530.5l-1.2-2.2 -1.5-2.3 -2.6-1.7M519.1,524.3l-1.1-.8 -4.3-.8 -1.2,3.5 -4,.5 -3.3,2.5M886,450.7l-.2,.2 .4,1.7M886.2,452.6l.8,3.2 3.7,1.7M896,465.1l.8,2.8 3.2,3.6 -2,3.6 -.3,3.7 1.8,2M899.5,480.8l5.7-2.4 -.8-3.5M846.7,376.3l-.1,1.5 1.4,1.4M848.5,380.2l.4,2.7 .9,.5M852.9,391.4l-3.4,1.4 -2.1,3 -3-1.6 -3.2-.2 -2.2,2.2M852.9,391.4l.2-.4M839,396.2l-4.5-1.6 2.1-3.7 -3.7-4.4 -3.4-.6 -3.5-1.8 .3-2.7 .3-2.7M826.6,378.7l3.4-.2 1.8-.8 2.8,1.5 .9,1.6 3.1,1.7 2-3.1 3.4-2 2.2-2.3M863,532.5l3.3,2.4 4.8,.2 6.5-4.7 -.5-5.9 -.7-2.6 0-4.2 4.7-3.3 -.4-4.2M863,532.5l1.7,4.1 3.5,2.5 2.8,1.1 1.1,2.7 -.6,3.1 1.5,2.8 2.2,3.3M911.2,522.8l-3.9,1.3 -5.1,.3 -3.6,4.3 -5.7,.6 -3.7,3.9 -3.3,7.5 -3.8,9.1 -6.9,2.3M911.2,522.8l-2.3,.2 -2.5-.5 -.1-2.1 -2.3-2.8 -2.2-3.1 -1.5-2.4 -.7-4.3 -3.4-.3M896.2,507.5l-2.2-1.2 -4,.4 -3.5-.6 -1.7,1.6 -.7,2.4 -3.4,.1M705.4,66.1l-2.2-3.7 -2.8-4 -2.1-2.3 -2.8,2.1 -2.9,.6 -2.2,.7 -2.7-.9M672.2,79.7l-1.2-2.2 .4-3.5 .6-2.9 1-1.9M687.7,58.6l-2.9,.6 -1.8,1.2 -4.6,.9 -3.1-.7 -1.1,4.1 -2.9,1.4 1.7,3.1M769.8,148.2l-1.2,4.2 -2.1,1.6 -.2,3.8 1,2.4 -4.3,2.8 -3.6,1M769.8,148.2l3.3-1.4 2.7-1.4M786.9,173.2l-1.9,.3 -3.7,1.1 -2.1,2.8 -1.4,1.4M782,155.6l-1-.4 -4.5-4.2 1.1-4.5M777.8,178.8l-4-.9 -1.8-3.3 -.9-2.3 -2-4.2 -4.7,2.5 -2.5,2.7 -1.5,2.3M759.4,164l-.6,3.7 -3,1.7 2.7,3 1.9,3.2M777.6,146.5l-1.8-1.1M746.8,141.5l3.5,1.4 4.4,1.5 .4,4.3 3.8,2.9 3.1-1.4 2.1-.9 1.8-2.2 3.9,1.1M742,158.2l3.6,1.3 3.1,2 4.2-1.4 3,.5 .2,2.3 3.3,1.1M777.4,202l.2-2.9 -.1-5.1 -2.9-3 -2.7,.8 1.8-5.4 2.7-2.3 1-2.9 .4-2.4M779.4,146.2l-1.8,.3M751.3,185.2l2-3.6 1.6-2.9 3.4-2.1 2.1-1M731.7,175l-1.4-3.5 -.6-2.3 2-3 1.5-1.7 2.7-.7 .8-2.8M731.7,175l2.5,1.5 2.1,1.9 1,2.4 .6,3.2 1.8-1.4 2.5,.1 3.3,2.4 1.9,1.4M745.8,120.6l.3-4.7 -6.1-3.6 -1.7-1.3 -3.1-2.4 .4-4.4 2.1-2.7 -4.4-4.2 3.5-5.6M745.8,120.6l2.7,.4 4.2-.1 3.5-.9 0-2.8 1.7-1.5 3.5,.5 2.7,.6 2.8-1.1M736.8,91.7l3.9,3.5 3.2,.4 5.2-1.1 2.1,2.8 3.1-.2 2.4-1.4 2.1-.4M735.2,90.2l1.6,1.5M739.5,126.5l3.6-2.1 3-1 -.3-2.8M775.8,145.4l1.9-3.5 -.1-1.1M753.9,82.7l-.5,1.2 1.3,.8M656.8,259.1l.3-3.4 -4.2,.3 -2.9-2.7 -4.3-2.3 -2.7,1.8 -1.6,1.9 -3.3,1.8M656.8,259.1l3.3,.2 1.8-1.6 1.8-2.5 1.8-.1 2.4-1.9M667.9,253.2l-5.7-2.8 -3.5-.8 -2.7-4.4 -1.4-3.2 -1.6-7.1 -3.6-6 2.3-4.7 -.8-3.3M638.1,256.5l-.8-3.3 1.3-1.6 -1.6-2.5 -4.1-2 -1.7-5.6 6.4-1.1 -2.4-3.5 -3.4-1M631.8,235.9l.5-3.4 .2-2.5 0-4.3 4-4.7 1-3.8 3.9-1 2.9,1.7M644.3,217.9l2.2,2.6 4.4,.4M625.1,268.6l2.6-1.3 2-.8 3.9-1.1 1.8-1.3 1.1-2.8 1.2-2.9 .4-1.9M650.8,281.7l1-2.7 .4-3.9 3.9-.9 1-2.7 -2.5-3.7 .6-4 2-2.1 -.4-2.6M670.3,253.7l-2.4-.5M672.4,215.3l-3.7,1.6 -2.2,1.3 -2.8,.1 -1.9-1.5 -2.9-2.7 -2.6-.2 -2.7,3.9 -2.7,3.1M605.3,241.5l4.9,.1 7.3-.8 2.2,1.6 4,1.9 .7-3 1.5-2.4 2.2-2.1 3.7-.9M638.8,207.2l-.2,3.1 1.3,1.7 .4,3 2.4,1.8 1.6,1.1M712.8,356.4l5.2,.2 1.9,6.2 -1.2,5.3 -4,8 -7.6,2.2 -4.6,7.6 -5.7,7 4.6,10M680,355.8l-2.3,3.5 1.4,3.5 -1.5,1.7 -2.7,1.9 -4,1.9 -1,2.8 2.3,1.8 1.2,3.3M701.4,402.9l-3.2,1.5M698.2,404.4l-3.1-1.1 -1.1-2.3 -2.5-1.5 -2,.2 -3.7,1.2M673.4,376.2l1.8,2.2 2.4,1.4 .8,2.2 .4,2.6 1.7,4.1 -.9,5.6 2.7,3 3.5,3.6M655.5,336.5l-3.4,1 -2.3,2.7 -1.8,3.1 -1,4.2 -2.7,10.4 1.6,5.9 -4.4-.5 -5.1,4.9M673.4,376.2l-3.5,.5 -5.4,2 -9-3.3 -5.4,2.4 -5.6-5.4 0-5.4 -5-.9 -3.1,2.1M613.3,352.7l2.9,2 1.4,3.9 2.5,2.9 2.4-1.2 3.2,3.9 1.4,2.9 2.9,1.7 2.2,.6M636.4,368.2l-4.2,1.2M83.5,135.8l1.6,.1 3,0 4.1,4.4 7.7-1.6 2.1-2.6 1.2-5.1 5.7-1.4 3.6,.2M93.8,98l3.3-.4 2.6,1.6 2.3,2.5 4.4,1 3.5-1.2 5.9,1.2 1.9,3.3M117.7,106l.9,1.6 -1.9,4.9M93.8,98l-1.2,3.5 -3.8-.2 -4.3,.5 -1,.1M112.5,129.8l1.6-.9 1.2-2.8 .4-1.7 1.5-2.5 -.4-2.8 -.5-1.9 1.8-1.9 -1.4-2.8M120.4,153.3l-4.4-1.7 -1.9-2.8 1.9-4.8 -2.1-4 -1.9-1.7 -.4-2.5 -.9-3.5 1.8-2.5M93.6,77.2l-2.2,1.6 -.9,3.3 -2,1.9 .6,2.8 4.5,1.8 2.7,.2 -.3,6.3 -2.2,2.9M133.6,82.6l.1,5.9 -1.4,3.3 -.4,4 -.3,3.4 -5.8-1.3 -3.2,3.9 -4.8,3.9 -.1,.3M117.7,106l-1,6.5M152.1,119.3l-4.4-2.2 -1.9-2.3 -4.7-.1 -7.3,1.7 -2.7-.6 -3.4-.2 -5.7,1 -5.3-4.1M415.3,731.3l-.7,3.2 -1.6,4.9 -.6,3.5 -4.1,.9 -2.9,.8 -2-.9 -2.9,2 -3.3,.2M415.3,731.3l-2.8-3.5 .2-2.3 0-3.7 .6-7.5 -7,.4 3.7-2.6 1.1-3.7M384.3,729.5l.4,2 2.9,1.3 3.2,1.2 -.4,4.4 1.9,3.3 2.9,1.7 2,2.5M384.3,729.5l3.2,.5 4.5-2.1 2.4-2.8 1.8-2.3 1.9-3.1 3.5-2.4 -5.8-5.1 3.4-6.2M411.1,708.4l-2.1-2.6 -.8-2.8 -4.3,1.1M399.2,706l3.1,.9 1.6-2.8M92.9,484.4l1.4,6 5.4,.9 2.4-1.4 3.8,1.5 5.5,1 1.7,3.4 2.9,4.5 7.4,1.8M83.5,524.7l.9,.3 2.8,.2 2.9-.8 2.4-1.3 4.6-.5 4.1,.3 4.6,1.1 2.7,3.6M108.5,527.6l-2.6-7 3.5-5 1.9-4 .5-2.6 5.6,.6 2.3-4.3 1.5-2.2 2.2-1M144,479.8l-1.9,1.1 -.8,2.7 -1.4,3.9 -.7,3.5 .5,2 -1.4,2.6 .4,2.8M138.7,498.4l-2.2-1.2 -3.1,.5 -2.5-3.1 -2.5,.9 -1.1,2 -.6,3.9 -3.3,.7M294.9,367.3l-5.1,0 -1.1,4 -.5,4.5 -1.2,4.7 -.9,1.8 -1.5,3 -2.3,3.5M261.6,347l-1,3 -1.3,4 -2.2,2.7 -.6,2.8 -.1,3M282.3,388.8l-4.2,.4 -2.5,.6M275.6,389.8l-2.7-3.9 -2.5-1.6 -2.4-1.9 -3.3-2.1 -5.7-4.9 .4-5.5 -1.7-2.9 -1.3-4.5M219.3,370.9l2.6-.3 2.9,1.8 3.5,3 4.2,1.4 2.5-3.7 3.3,.5 4.1-.1M242.4,373.5l3.3-2 2.1-3.5 2.7-1.2 1.8,.1 2.8-1.8 1.3-2.6M307.3,439.3l4.7,1.3 5,1.3 4.3-.4 1.9-3.2 2.5-2.5 4,.2 .5-3.7M307.3,439.3l-.7-2.6 -2.3-2.5 -1.4-2.6 -1.6-2.2 -2.8-2.5 -4.8-2.6 -2.6-.1 -3.1-2.6M288,421.6l.6-3.4 3.3-.8 3.2-3.8 3.1-.9 -.2-1.8 -.7-3.1 .6-2.7 1.2-1.5M330.2,431.6l0,.7M330.2,431.6l1.8-7.9 -1.5-1.2M330.5,422.5l-3.2-2.5 -4.9-1.7 -3.6,2.7 .5-4.8 1.4-7.8 -6.5-2.2 -2.7-2.9M311.5,403.3l-2.6,1.2 -3.9-.1 -3.7-.9 -2.2,.1M331.7,434.6l-1.5-2.3M331.7,434.6l3.8,4.7 4.3,6.4 5.8-1.4 7.7,1.9 4.7-2.6 2.4-1.7 4.9-.9 2.7,1.9M361.5,396.7l-8.1,2.7 2,9.2 -6.6-1.9 -7.2,6.9 -6.7,3.1 -4.9,3 .5,2.8M330.5,422.5l.2,1.4 -.5,7.7M368,442.9l2.7-.2 2.2-3.2M321,386.2l-2.5,1.7 2.3,3 -1.7,2.1 .2,2.3 -3.8,2 -1.4,3.6 -2.6,2.4M282.3,388.8l3.2,1.2 1.5,1.1 1.5,3.1 2.1,.8 2.2-.2 2.5,2.3 .6,4.7 3.2,1.8M445,940.2l2.7-4.4 3-8.5 8.4-9.7 10.9-.5 3.5-5.2 5.1-1.4 1.5-2.8M480.1,907.7l.7-1.3 4.1,1.1M484.9,907.5l2,.6M445,940.2l3,3.8 -.1,3.1 1.5,4.6 2.3,5.3 2.7,.7 1.7,.8 4.3-.3 1.7,5.2M465.1,964.3l-3-.9M465.1,964.3l6.8-2.8 8.6-.7 2.4-5.4 3.6-7.2 1.2-8.8 2.6-6.4 5.7-3.2 .5-4.5M496.5,925.3l1.5-5.4 1.5-2.7 -3.2,0 -2-3.5 -3.6-.8 -2.4-1.6 -1.3-3.2M486.1,984.8l-3.3,.7 -4-.7 -3.6-1.7 -3.1-2.8 1.5-5 -3.1-3.8 -2.8-3.3 -2.6-3.9M429,987.5l1.1-1.3 .6-3.9 2-5 6.2-3.5 5.5-9.2 11.3-.2 6.4-1M506.8,930.8l-1.1-3.1 -2.2-.2 -2-1.8 -1.4-3.3 -1.8,2.3 -1.8,.6M517.4,887.4l3.1-2.5 1.9,2.4M517.4,887.4l-3.9,1.8 -3.4-.9 -4.1,2.7 -2.6,1.3 -5.4,5.1 2.7,4.4 -4.5,3.4 -9.2,2.9M398.6,894.1l1.5,6.4 3.9,3 1.7,2.9 4.3,.6 -.1,7.1 -4.9,9 3.9,5.5 3.7,5.7M398.6,894.1l-1.6-3.1 -1.2-2.7 1.1-4.3 2.2-.8 3.1-1.5 2.2-2.2 4.6-3.5M409,876l2.6,4.2 4.9,3 2.3,2.9 5.8,1.6 4.6-2.7 5.9,1.7 3.6-2.4 2.6,1.8M412.6,934.3l2.7,.7 2.6,0 2.5-.3 3.1-1.2 1-2.5 3.3-1.1 2.5,.1 2.2,3.1M432.5,933.1l2.5-6.3 10.2-2.1 1.2-4.8 -1.9-6.5 1.5-2.2 1.3-3 1.2-3 -1.6-5.1M441.3,886.1l1.4,3.2 2.7-.1 1.6,3.4 -.7,4 .6,3.5M393.9,955l-2-5.8 3-3.7 6.4,2.6 5.5-4.3 4.1-.2 2.3-2.5 2.8-2.7 -3.4-4.1M360,898.6l5.8,2.3 1.1,4.3 5.4,1.2 4.1-5.7 8.9-3.6 6.7,5.7 1.5-4.9 5.1-3.8M407.8,868.3l1.5,2.7 2.1,.9 .1,3.1 -2.5,1M453.1,849.5l-2-3.1 -1.2-1.5 -2.2-1.7 -2.1,2 -3.5-2M453.1,849.5l3.3,.3 3.3,2.2 -2.1,4.1 -2.2,3.2 .2,3.1 -2.3,4.5 .3,4 .3,3.1M442.1,843.2l-2.8,1 -2.3,4.5 -3.2,2 -4.8,2.5 -5.1,.8 -7.5,.8 -2.7,6.2 -3.9,2.5M453.9,874l-2,3.4 -3.8-.8 -3-.8 -3.6,1.1 -1.5,3.3 1,2.1 .3,3.8M445,940.2l-1.8-3 -.2-2.6 -2,.9 -2.9-1.4 -3.1-1.8 -2.5,.8M486.3,907.4l-4.5-3.9 -3.8-.7M478,902.8l-.5-.1 -2.7-1.3 -3.2-3.3 -5.2,2.6 -5.4,2.3 -7.4-2.9 -6.7,0M486.3,907.4l.6,.7M478.9,878.4l-1.8,3.1 -.5,3.3 2.4,4.6 .2,5.1 -.1,4.3 -1.1,4M478,902.8l-.5,2.1 2.6,2.8M480.1,907.7l.1,.2 4.7-.4M484.9,907.5l1.4-.1M478.9,878.4l-2.4-.9 -3.3-1 -1.4,1.8 -3.1,1.2 -4.7-1.6 -3.7-1 -3.4-1.6 -3-1.3M453.1,849.5l2.7-.9 3.7,2.2 2-1.4 2.8-2.9M478.9,878.4l1.4-2.2 2.4-1 2.4-3 1.1-3.7 2.8-2.1 -.1-2.6 -.1-3.1M464.3,846.5l5.4-2.3 2.9-2.9 4.3,3.9 5.8,4.4 1.7,2 2.5,3.4 -1,3.2 2.9,2.5M517.4,887.4l-.3-4.9 .7-2.9 -4.8,.2 -4.9-2.5 -3.7-6.7 -7.8-.6 .2-7.5 -1.4-4.7M488.8,860.7l3-1.6 3.6-1.3M442.1,843.2l.5-2.9 .9-3.7 -2.4-1.7 .4-2.8 2-1.9 .4-3.3 -3.6-1.7 -2.1-5.1M400.8,816.1l3.7-3.8 2.9-2.9 2.5-.8 2.6-.8 5.8,.9 3.4,2.1 4.1,.1 3.8-1.1M429.6,809.8l2.6,1.5 1.1,1.5 3.6,2.1 1,1.8 .3,3.4M364.8,699.2l-6-1.7 -7.8,.9 -2.1,2.8 -5.5-.5 -1.4,2 -1.8,3.6 -4-1.5 -5.6,1.6M364.8,699.2l4.9,1.4 5.2,3.4 -.8,3.1 .9,5.5 -2.2,3.3 -1.6,4.3 .7,3.4 .1,3.5M355.7,735.9l3.2-1.9 3-3.2 4.5,2.2 3.3,.2 2.4-2.3 -.1-3.8M355.7,735.9l-4.1-.5 -3.4-3.6 -3.4-1.6 -5.7-2.6 -2.2-4.3 .9-4.5 -3.1-2.7 -3.3-6.4M331.4,709.7l-.8-3.3M339.9,775.7l5.9-6.9 -4-6.3 3.8-2.7 2.8-3.6 2-8.3 1.4-4.9 2.6-3.7 1.3-3.4M384.3,729.5l-3.4-2.4 -1.8,.4 -2.5,.9 -2.9-.3 -1.7-1M397.8,750.2l-.6-4.3M307.9,765.1l13.2-6.6 -.6-9.9 3.2-4.8 2.7-5.7 .9-9.8 7.9-2.7 -7-8.4 3.2-7.5M399.2,706l-4.1,1 -4.7-2.9 -2.4-1.6 -3.3-1.3 0-3.1 -2-3.5 -4.5-1.2 -5.9-3.1M364.8,699.2l2.7-3 1.3-3.9M368.8,692.3l3.5-2M481.5,567.8l-4.6,.7 -2.1,1.9 -1.8-1.8 -3.3-.2 -3.2-2.3 -1.8-2.8 -3,.4 -4,1.7M481.5,567.8l2.3-2.9 -.8-4.2 1.5-3.4 1.7-2.5 .2-2.3 .6-4.1 2.2-3.6 2.9-3.9M457.7,565.4l1.6-5.6 2.4-2.7 1.6-2.3 2-1.8 .7-4.2 1-4.9 -.6-5.8 1.2-3.9M492.1,540.9l-.4-3.8M491.7,537.1l-2.3,.2 -2.2-3 -2.6-1.2 -2.3-.7 -2.2-1.3 -4.1-.9M476,530.2l-3.4,.8 -1.6,2.5 -3.4,.7M470.9,492.7l.9,4 -1.1,6.6 3.6,5.5 5.3,2.9 4.2,6.2 -3.3,5.1 -1.5,4.3 -3,2.9M505.2,529.2l-3,2.6 -2.4-2.4 -2.8,1.9 -2.8,1.6 -.9,1.8 -1.6,2.4M455.5,491.1l1.3,5.6 -6.1,1 1.5,3.1 3.1,3.2 -3.7-.5 -1,3.2 -4.9,.1 -2.8,5M442.9,511.8l.1,3.1 -1.3,2.2 .1,3.2 1.3,3.7 3.8,.4 1.9,2.4 1.1,4.4M449.9,531.2l2.2-.6 2.5,.9 2.2,2.1 3.4,1.3 2.1,.5 3.5,.3 1.8-1.5M283.4,749.7l1.1-4 -2.5-2.4 .9-3.1M292,712.3l1.6-3.6 2-1.7 4.3,.3 3.1-3 4.2,.3M330.6,706.4l-1.3-1.4M329.3,705l-3.6,.2 -3.9,2.5 -2.8-.7 -2.2,.2 -3.2-.9 -2.5,.1 -3.9-1.8M216.5,792.2l.3-.1 2.9-1.5 2.1-2.5M165.3,746.3l1.9-1 2.7-2.3 .1-2.1M170,740.9l6,5.1 -2.2,6.9 4,4.2M953.5,527.8l-1.5,.4 -2.9,5.7M949.1,533.9l.6,.8M949.7,534.7l2.2-1.3 4.3-.1 2.7-1.1M777.7,887l-3.8-1.4 -4-.8 -1.7-5.4 -3.3-1.3 1.7-1.9 -1.5-3M751.1,904.9l1.6-4.8 1.8-2.9 -.8-4.8 .6-4.6 .1-4.2 -.4-2.9 -4-1.1 -.5-5.5M749.5,874.1l2.3,.8 1.8-2.9 3.2-.9 2.2,3.3 2.3,.4 3.8-1.6M724.8,872l2.4-.6 2.1-.6 1.6-4 5.6-.2 4.2,.1 3,2.5 3.5,2.6 2,1.8M749.5,874.1l-.3-.5M695.9,854l-.5-.7M722.1,860.9l-1.8-5 2.3-3.7 3.3-1 2.6-1.1 1-2.3 -1.2-2.7 2.3-2.5M695.4,853.3l2.6-2 -.3-3 2.2-3.6 -1.5-5.5 1.4-3 1.4-2.3 -.6-6.3 3.6-3.7M704.2,823.9l1.4-1.1M730.6,842.6l.3-5.9 -6,.3 -6.2-2.6 -.1-9.6 -4.1-2.2 -2.6,4 -2.7-1.4 -3.6-2.4M903.2,825.5l3.3-2.8 .2-3.4 -3.6-2.7 -.3-2.7M903.2,825.5l-4.4-2.6 -2.7-2.3 -4.2,3.2 -1.9,4.2 .8,2.9 -1,3.8 -3.1,1.4 -.7,2M886,838.1l-2.8,1.2 -2.3-1.8 -2.5-3 -3-.3 -1.8-2.1M899.9,809.3l-3.5-.2 -2.4,3.2 -2.1-.6 -3.2,.1 -3.1,1.9 -3.8-.5 -7.4,1.2 -5.2,.3M899.9,809.3l1,3 1.9,1.6M873.6,832.1l.4-3.6 -1.3-2 -.9-3.7 -1.2-1.5 -.6-3.2 -.8-3.4M881.3,787l-2.8,2.1 1.7,4.5 -2.8,5.9 -.3,4.1 -3.8,.1 -1,4 -3.3,2.9 -1.7,2.5M881.3,787l-2-1.6 -1-2.4M853,788.1l-1.8,.9M851.2,789l-.3,.1 -1.3,2.3 -.2,2.5 .3,3.8 2.4,1.4 .6,2.7 0,5 2,2.3M853,788.1l2.4-2.8 .4-3.3 1.5-1.8M878.3,783l-4.5,0 -1.7-3.2 -2.1,.4 -3.3-.1 -3.4,4.1 -2.4-3.5 -3.6-.5M854.7,809.1l2.6,1.9 3.6-1.2 2,2.9 4.4,.4M881.3,787l2.6,1.2 2.3-.4 3.1,2.4 3.5-.9 3.4,1.2 4.3-.5M903.2,793.7l-.4-2 -2.3-1.7M903.2,793.7l-2.9,2.6 -2.1,1.6 -2.7,1 1.9,2.9 1.4,3.7 1.1,3.8M867.3,813.1l1.9,1.6M873.2,897.9l-2.6-1.1 -3.7-1.3 -2.2-1.7 -1.6-2.4 -4.3-.7 -2.6-.5M873.2,897.9l-3.9,2.6 -4.9,6.2 -.1,4.7 -.6,6.3 -1.6,4.9 1.5,2.7 -2.8,3.4 -4.5,0M856.3,928.7l-2-.7M854.3,928l-1.8-6.2 -8,1 7.1-6.6 -5.9-5.9 -3.6-3.4 -4,.9 6.9-3.1 -5.1-7.8M856.2,890.2l-2.2,1.1 -3.5-.4 -1.9,1.2 -3.8-.2 -2.9,3.2 -2,1.8M800.8,908.3l.3-3.7 2.2,.2 2.3-.9M800.8,908.3l3,2.5 6,3 6.2,3.6 .7,5.6 6.4-1.6 3.8,2.1 -2.3,5.4 3.7,4.7M805.6,903.9l1.6-2 1.6-2.7 4.1-.6 2.3-4.7 5,1.7 3.4,2.4 3.1-2.5 6-1M828.3,933.6l-1.6-3.6 1.2-4 .5-5.5 -1.5-5.2 4.2-7.5 2.8-5 1.7-3.9 3.5-2M832.7,894.5l2.5-1.2 2-.2 1.9,3.8M867.6,987.5l1.3-1.1 2.7-1.5M871.6,984.9l.9-.5 2.5,2.1M876.8,987.5l-1.8-1M914.3,978.6l-.9-2.2 -1.3-2.9 -.2-2.2 -1.3-2.1 .7-3.3 1.5-2.4M912.8,963.5l-1.4-1.8 -3.1,0 -3.1,.8 -2.5-.3 -2.6-3.8 -4.3,.6 -2.9-2.9 -3,1M888.4,987.5l3.1-4.2 .8-3 -2.6-4.3 .1-3.7 .6-3.1 -1.2-7.4 .7-4.7M681.2,854.9l3.4,.2 2.5-1.3 1.9,1.4 2.9,.9 3.5-2.8M681.2,854.9l-3.4-.6 -2.7,2.3 -1.1,2.4 -2,2.4M666.1,879.1l-.7-4.3M672,861.4l1.4,2.2 -.1,2.5 -2.2,2.7 -2.9,2.2 -3.9-3 .9,3.9 .2,2.9M681.2,854.9l-1.8-2.1 -.1-2.1 -.8-3.4 .6-2.8 -1.6-3.1M677.5,841.4l-.5-.9 -2.3-2.3M704.2,823.9l-1.3-2.2 -3.3-.4 -2.7,2.8 -3.1-1 -2.7,1.8 -2.1-.1M674.7,838.2l2.4,3.3 .4-.1M677.5,841.4l3.3-1.2 .9-3.5 1.3-2.5 3-3.2 1.4-2.1 1.6-4.1M672,861.4l-1.8-3.7 -4.7-2.8 -3.3-2.3 -2.2-.7 -.2-6.7 -2.4-4.2 -2.1-2.6 -3.7-3.7M651.6,834.7l1.9-2.3M674.7,838.2l-3.1,1.6 -5.7-1.3 -2.4,3.1 -2.6-.4 -.4-2.8 -.7-1.7 -2-3.2 -4.3-1.1M1045.7,806.8l-2.7-1.3 -2.8-3.2M1021.4,821.1l-1.5-2.3 -.2-2.2 -.6-2.9 -2.5-3.6M1016.6,810.1l2.6-1.3 1.9-2.5 4.1-3.4 2.6-1.4 1.9-.1 2.8-1.8 4.4,1.7 3.3,1M943.1,840.2l1.4,2.9 2.6,4.1 3.3,.4M950.4,847.6l1.5,.1 3-3.7 3.5-1.9 2.2-4.5 2-1 2.4-1.6M943.1,840.1l-.7-1.8 -1.9-2.7 -1-2.3 -.8-1.9 2.5-1.1 1.2-1.8 -.1-2.2 -1.2-2.5M941.1,823.8l1.5-2.6 1.8-3 2.4,0 2.8-1.3M949.6,816.9l1.3,4 3.4,2.8 3,.4 1.8-.5 4.5,.1M963.6,823.7l-1.9,2.4 -1.1,2.6 .3,4.2 2.5,.7 1.6,1.4M953.4,858.7l.8-3 -3.9-.3 -.5-3.3 -.4-2.9 1-1.6M950.4,847.6l.9-1.6 -2.6-4.2 -2.5-.1 -3.1-1.5M959,857.5l2.8-3.1 1.4-3.9 2.9-1.5 2.6-.2 -2-5.5 3.7-2.4M970.4,840.9l-2.6-2 -1.2-2.1 -1.6-1.8M928.6,864.4l-3.9,.5 -3.4,1.2 -2.5-.1 -3.8,.3 -2.9-3.8 -4.3-1.1 -3.7-3.5M928.6,864.4l2.4-2.2 1.1-2.9 1.5-2.6 1.9-.9 -.8-1.9 -.5-2.4 0-4.4 -1.7-2.5M904.1,857.9l1.1-6.4 -4.1-2.6 2.1-2.1 1.1-3.4 1.4-2.4 1.7-4 2.8,.9M910.2,837.9l1.2,.4M911.4,838.3l.5,.2 2.6-.8M932.5,844.6l-3.2-.7 -2.5-.8 -2.7-1.3 -.4-2.1 -3.4-.8 -1.8-1.9M918.5,837l-4,.7M946.9,867l-4.1,.2 -2,1.2 -1.6,2.7 -3.2,1.5 -2.1-1.5M943,840.1l-2.9,.1 -1.6-.2 -2.6,.8 -2.8,.3 -.6,3.5M933.9,871.1l-1.8-2.7 -2.5-.3 -1-3.7M896.3,861.4l3-1.2 1.9-2.4 2.9,.1M896.3,861.4l2.2-3.3 1.7-3.5 -6.1-.1 -3-4.5 1.2-2.7 -.6-3.2 -3.8-1.3 -1.9-4.7M903.2,825.5l1,1.6 2.9,.8 2.3,2.5 -1.3,3.8 1.5,1.7 .6,2M910.2,837.9l.2,.6 1-.2M911.4,838.3l3.1-.6M929,820.4l2,1.4 3.9,.6 4-1.3 2.2,2.7M929,820.4l.3,2.8 -.9,3.4 1.3,2 -1.1,3.1 -3.1-1.1 -4.4-2.3 -3.3,2.8 .7,5.9M929,820.4l-1.6-2.3 -1.6-2.9M925.8,815.2l-3-3 -3.4,2.1 -4.1-1.2 -3,1.9 -4-1.9 -2.8,.4 -2.7,.4M943,981.8l.4-1.3M912.8,963.5l2.4-2.3 .9-1.9 .9-3.5 3-1.6 .8-2.5 2.4,.3 4-1M943.4,980.5l2.3-2.1M945.7,978.4l.9-1 -.5-1.2M946.1,976.2l-1.4-3.4 -.3-3 -1.1-4.1 -5-6.8 0-5.1 -3.2-1.4 -6.3-1.3M927.2,951l1.6,.1M949.6,791.4l.5,3 -.3,3.3 .7,6.9 4.4,2.7 .7,2.4 -1.4,3.3 -3.3,.9 -1.3,3M949.6,791.4l-.6,0M925.8,815.2l-1.5-3.8 .4-3.4 -2.7-3.2 2.4-2.1 5-.5 .3-3.2 1.1-1.7M930.8,797.3l4.2-1.9 3.1-3.4 4.4,1.4 1.8,6.3 2-3.8 3.7-1.3 -1-3.2M903.2,793.7l.7-1.8 1.2-2.9 2.5-2 4,1.4 2.6,1.6 2.5,1.4M930.8,797.3l-2-2.4 -4.2,.1 -1.9,.9 -2.9-1.5 -3.1-3M1017.4,987.5l.1-3.2M1035.5,987.5l-.2-2.5 3.5,0 4.2-2.6M1017.5,984.3l4,2.1 3.9,.8 2.9-5.2 1.9-5.2 3.2,1.6 1.4,3 3.9,.4 4.3,.6M999.2,987.5l-.1-.9 2.3-2.2 1.3-1.9M1002.7,982.5l3.5-.6 2.1-1.3 3.9,.3M1017.5,984.3l-3.7-1.8 -1.6-1.6M1056.1,978.5l3,1.7 2.2-1.4 2.3,2.5 3.8,2.7 3.9,2.2 -.2,1.3M1056.1,978.5l-3.8-1.7 -4.1,1M1048.2,977.8l-3.5,2.5 -1.7,2.1M1070.9,957l-.1,3.5M1070.9,957l-1.2-1.7 -1.7-1.9 -3-1.2 -2.8,.7 -4.2-2.7 -4.3-1.3 -4,.8 -4.1-1.9M1070.8,960.5l-.9,2.3 -1.2,2.8 .5,2.9 -1.3,2.9 -2.1,2.2 -1.6,1.3 -4.1,4.2 -4-.6M1045.6,947.8l-3.4,2.4 -3.2,1.1 -1.6,2.7M1048.2,977.8l-2.6-2.7 -.7-3 -1.9-3.2 -.6-3.6 -.3-3.7 -5.5-2.2 .8-5.4M1021.1,920.6l-.8,1.9 -1.2,2.8M980.1,915.4l2.3,.5 .6,1.9M983,917.8l.6,1.8 4.5,1.5 2.5,3 -5.8,6.1 7,4 3.9,2.1 4.8-.4M1019.1,925.3l-3.2,3.8 -.5,2.9 -4.4-.5 -1.2,3.6 -2.3,0 -2.5,1.6 -1.9-.5 -2.6-.3M975.5,952.1l1.4,4.9 -3.7,4.1 -1.6,3.2 -3.9,.7 -2.9,.7 -1.5,.9 -3.3,.5 -4-2.2M975.5,952.1l2.2,2.8 3.6,.2 3.1,1.9M984.4,957l-2.5,2 2.4,2.8 -3.6,1.5 -.4,3.4 1,2.8 4-1.1 1.2,2.8M954.1,972.5l-.2-3.8 2.1-3.8M954.1,972.5l2.9-.7 2.6,1.3 2.7,2.4 3.8-.1 4.1-1.3 4.3,.8 1.2,4.5M975.7,979.4l1.4-2 2.7-1.2 2.8,2.5 1.7-3.8 2.2-3.7M966.8,939.5l1.9,2.5 3.4-.1 -2.1,3.1 -.5,4.2 3.1,.1 2.9,2.8M966.8,939.5l-2.7,3.1 -2.9-.6 -2.3,.8 -4.3,.9 -2.1,3.2 -3.1-.3 -2,.5 -2.3,2.2M945.1,949.3l3.6,1.4 2.2,1.6 3,.3 -1.8,2.1 1.5,4 1.8,2.5 .6,3.7M945.1,949.3l-4.2,.3 -2.9-1.1 -3-.7M943.4,980.5l2.3-.9 0-1.2M945.7,978.4l-.1-2.1 .5-.1M946.1,976.2l2.6-.6 2.6-1.8 2.8-1.3M935,947.8l-2,2.7 -4.2,.6M975.5,987.5l1.3-1.8 -1.1-6.3M1002.7,982.5l-2.1-2.2 -3.1,.1 -3.3,2.2 -2.6-2.6 -3.5-2.7 1.2-4.1 -2.8-2M1049.4,937.8l-.8-3 -.7-3.1 -1-2.3 -.9-2.3 -2-1.5 -1.9-2.5 -1.9-3.5M1049.4,937.8l5.2-1.3 2.3-3.4 4.2-2.2 2.6-4.7 4,3.6 4.6-.1 3.6-2.3 4.7,0M1040.2,919.6l3.7-2.6 2.7,0 3.3-.9 1.5-2.3 2.9,0 4,2.4 2.1-4.5M1080.6,927.4l-4.2-.1 -2.8-2.4 -4.1,2.1 -2.8-3.8 -2.7-3.1 -3.7-3.1 .1-5.3M1070.9,957l.8-2.5 1.2-3.8 1.3-2.6 3.9-1.4M1078.1,946.7l-2.5-2.6 .8-2.9 .3-2.4 2.1-.5 1.9-2.6 0-4.1 .4-4M1081.1,927.6l-.5-.2M1045.6,947.8l.5-4.1 2.1-1.9 1.2-4M1059.5,902.3l-1,3.9 .8,2.2 1.1,3.3M1034.3,917.4l4-.6 1.9,2.8M1081.1,927.6l1.6-.8M235.2,702.1l3.1-2.7 4.3-5.1 5.5-6.6 4.7-2.2 -2.6-1.5M253.8,674.3l1.1-3M235.2,702.1l3.7-.2 3.3-.4 3.1,3M277.5,694l1.4-3.3 -2.7-4.7 -2-.9 -1.6-2.6 2.2-3.2 .8-2.4 3.1-1.8M278.7,675.1l-4.8,1.1 -1.8-4.6 -2.3,3 -3.3,5 -3.7-4.7 -.8-3.6 -4.3-1.1 -2.8,1.1M299.7,585.2l3.3,3.2 4.9-.8 2.9,.2 1.1-4.1 4.3,2.9 3.6,6 .7,4.1 5.1,.5M299.7,585.2l5.5,1.4 3.2-1.4 1.7-3.5 3.8,.4 1.5-3.7 2.4-3 4.2-4.9 2.7-5.5M325.6,597.2l.2-4.5 3.1-2.6 3.6-4 2.2-1.9 .1-2.3 1.7-3.3M336.5,578.6l-.7-2.2 1.4-2.8 -2.1-2.3 -1.9-2.2M324.7,565l3.1,1.6 2.6,2.3 2.8,.2M333.2,619.5l-.5-3.1 .7-4.3 1.9-4.5 -.8-4.4 -3-1.2 -4.2,.9 -1.1-3.8 -.6-1.9M333.2,619.5l-5.5,2.9 -6.3,.5 -6.9-3.1 .7-5.5 -1.4,2.9 -4.1-1.7 -.5,4.5 -3.3,1.4M295.6,585l-1.4,3 .7,1.8 .5,3.4 -2,2.1 -1,1.6 -.3,3.9 -.9,2.8M295.6,585l4.1,.2M291.2,603.6l-.8,2.4 -1.7,3.5 3.8,2.4 1.8,2.7 .6,3.5 3.2,2.9 3.8,.5 4-.1M338.8,538.3l-4.7,.2 -2.7,5.2 -2.8-.3 -3.6-2.4 -3.9,.7 -3.5,.8 -2.4,.6M338.8,538.3l.6,2.2 .2,3.3 2.8-1.6 3.5,2.2 -.2,2.2 1,3 .7,2.4 1.3,1.7M348.7,553.7l1.7,1.9 -.6,3 -1.6,3.2 -.6,2.1 -4.1-.4 -3.7,5 -3.9-1.6 -2.7,2.2M314.1,546.5l1.1-3.4M314.1,546.5l-2.7,3.4 .2,.2M311.6,550.1l4,3.6 -1.9,3.9 2.1,3.9 3.7,1.8 3,.8 2.2,.9M730.6,175.2l-3.3,1.6 -3.7,.6 -3.7-2.1 -1.9-3.9M730.6,175.2l-.8,5.5 -3.1,2.8 -1.9,2.3 1.3,3.9 -5.8,4.7 -4.8,.8 -2,5.8 .3,3.6M718,171.4l-1.8,1.8 -2.9,.7 -1.9,3.1 -2.5,1.7 -1.4,1.5 -4.2,.2M703.3,180.4l-.4,4.6 -.1,3.6 -.1,3 1.7,1.9 3,1.5 1.4,1.3 -.2,5.1 2.4,2.4M711,203.8l2.8,.8M731.7,175l-1.1,.2M712.6,157l3.7,1.9 1.8,2.2 -.1,3.6 1.1,2.5 -1.1,4.2M730.3,217.1l-1.2-2.3 -3.5-.8 -2.6-2.9 -2.7-1.4 -1.4-1.7 -.2-2.5 -3.3-.2 -1.6-.7M693.1,175.5l2.2,2.1 1.5,1.2 2.7-.2 3.8,1.8M700.2,207.5l2.8-1.6 2.5,2.5 3.7-2.4 1.8-2.2M786.5,269.4l1.2,3.7 2.8,2.1 .5,4 1.2,2.8 -1.2,2.1M816.9,283.7l1.7,2.1 -1.6,2.4 -2.7,.7 -2,2.4 -1.5,2.1 -3.3,1.9M807.5,295.3l-2.6-1 -2.1,.2 -3.8-.6 -1.9-.9 -1.1-3.3 -3.3-3.6 -1.7-2M765.1,306l1.5,.9M766.6,306.9l3.7,.4 2.2,.3 3.2-1.3 4.1,.7 2.1-1.7M791,284.1l.4,5 -3.7,1.2 .8,2.4 .5,3.3 -1.6,3.9 -2.5,1.5 -3.2,.4 .2,3.5M675.2,498.4l2,.8 1.6,2.1 3.4-1 1.7,2 2.7,.9 4.3,.4 4.1-2.3M675.2,498.4l-2.3-5.5 -2.9-3 .5-6.5 1.1-6.4 3.5-1.9 6.3-3 1.9-8.1 -2.6-4.9M680.7,459.1l1.4-2.8 3.9-2.1 1.4-3.2 1.4-2.4 3.8,3.2 4.1,.3M695,501.3l2.5-1.8 1.6-3.8 1.8,1.5 3-1.5 4.1,.4M708,496.1l-5.1-3.1 -4.2-3.3 1-6.7 1.4-5.5 .8-3.3 3.1-4.8 2-2.5 .3-3.8M696.7,452.1l3.2,.4 2.1-1.9 2.1,1.1 1.2,3.6 2.4,3.4 -.4,4.4M694.5,549.9l2.2-.7 2.4-1.4 .3,3.3 .9,1.8 3.3-1.1 2.7-1.1 2-1.7M694.5,549.9l-6-2.3 -5.6,2.3 -4.2,.7 -1.1-5.1 -5,.1 -4.6-4.5 1.6-5.4 -1.9-5.1M667.7,530.6l-1.2-2.3 -.3-3.4 1.2-3.7 -1.2-3.8 -.6-6.3 -1-3 -1-3.6M663.6,504.5l3.8-1.9 2.3-1.6 3.5,.1 2-2.7M708.3,549l2.9-3.8 -.1-5.1 1.5-4.3 -2.9-5.8 -3.9-4.6 -8-4.3 2.6-8.2 -5.4-11.6M589.4,431l3.1,4.7 .8,3.7 -.8,4.9 1.3,3.8 3.5,.9 3.7-1.1 5.2,2.1 .5,4.9M572.5,491l2.9-1.1 1.8,1.6 .8,4.4 3.1,.7M606.7,454.9l.4,6.3 1.2,9.5 -5.2,7.3 -5.3,3.8 -3.2,1.9 -4.7,2 -3.1,8.6 -5.7,2.3M689,824.8l-3-2.8 -.2-5.3 -4.9,1.1 -4.7-5.4 -3.5-1.3 -2.8,2.2 -3.1,.5 -3.6,.2M653.5,832.4l.7-3 1-1.7 1-4 2.1-2.6 .9-2.3 -.2-4.1M659,814.7l4.2-.7M707.2,807l1.9,2.3M707.2,807l-4.4,1 -4.7-2.5 -3.6-1.9 -2.5-1.4 -3.4-1.4 -2-3.5 -3.7,1.1 -3.3-.2M705.6,822.8l2.9-.4 1.8-4 .6-4.4 -1.1-3 -.7-1.7M663.2,814l2-4 -1.2-4.7 4.4-.6 4.4-1.4 2.3,1 2.1-2.8 2.4-3.3M813.3,652.1l2.8,.8 2.4-.4M813.3,652.1l2.1,2.1 -.5,2.7 -.8,4.4 -2.6,1.5 -2.9,3.1 -1.5,2.9 -.1,1.7 -.7,3M827.6,684l-4.3-.5 -3.5-.4 -2.5,.2 -1.5-3 -3-2.6 -2.7-.9 -3.8-3.3M827.6,684l1.3-1.9 .4-3.3 2-3.6 .5-4.5 3.5-2.1M835.3,668.6l-.3-1.9 1.7-2.7 -1.9-3 -1.7-3.5 -2.6-.7 -2.5-3.7 -4.1,.2 -5.4-.8M707.2,807l-.6-3.7 1.4-3.9 .7-3.4 1.4-4.5 -7.1-4.5 4-6.7 -3.7-2.9 -3.9-2.1M734.8,776.3l-1.4,3.5 1.7,2.9 1.4,3.5 1.3,4.7 .9,3.6 -4.2,3.1 -4.8,.4 -1.3,3.5M734.8,776.3l-5.1,2 -4-1.3 -.6-8.4 -3.3-3.7 -3.5-2.2 -3.8,1.2 -4.2-.9 -3.5,3.6M728.4,801.5l-2.3,0 -3.5,1.8 -4.3-1.7 -3.4,2.3 -1,2.7 -2.1,1.1 -2.7,1.6M706.8,766.6l-2.8,0 -1.7,.8 -1,3.1 -1.8,2.3 -.1,2.5M679.6,798.2l-1.7-2.3 1.6-3.7 -.9-2.2 -2.9-1.1 .5-3.3 -1-2.2M675.2,783.4l2-1.2 2.4-2.3 1.7-3.4 3.4-1.7M684.7,774.8l3.7-1.4 2.5-2.3 2.4,1.4 2.5,1 3.6,1.8M773.5,686.8l4.1,1.1 1,4.4 3.8,.7 2.3-1.1 1.4,2.3 1.9,1.6 -.5,4 -.8,2.9M773.5,686.8l-1.4,.9 -2.8,1 -.7,4.2 -1.9,1.9 -5.1-2.1 -3.6,.8 -2.6,2.3M755.4,695.8l-2.2,2 1.3,4.5M754.5,702.3l-.4,1M786.7,702.7l.2,3.7 -.5,2.4 .7,2.4 -.7,3.3 -3,.4 -2.5,2.8 -3.6,2.2M777.3,719.9l-2.9-.7 -2.9,2.6 -1,1.2M770.5,723l-.6,.7 1.1,2.7 -.5-3.4M770.5,723l-.1-.3 -3.2-.3 -3.2,1.5 -.9-4M754.1,703.3l2.1,1.8 2.4,1 0,3.9 -1.6,2.7 -1.3,4.3 3.7,.9 3.7,2M734.8,776.3l3.7-1.5 2.5-3.4M728.4,801.5l1.8,3.8 2.6,.5 1.4,2.6 .4,3.1 3.7,1.5 2.4,1.5 1.9-4.2 6,1.1M748.6,811.4l-.2-2.9 1.8-3.4 -2.7-3.2 -.2-3.2 4.3-6.6 2.3-3.5 4.8-4.2 3.1-1.5M761.8,782.9l-4.2-.7 -2.8,1.6 -3.5,.7 -4.5-3.4 -2.6-.9 -2.7-1.6 -1.2-4.1 2.9-3.4M743.2,771.1l-2.2,.3M829.3,759.8l-3.1,2.7 -.7,3.6 -1.4,2.4 .5,4.6 .4,3.2 4.2,0 .1,3.8 3.3,2.7M829.3,759.8l-3.6-.4M825.7,759.4l-4.2-1 -1.1,4.7 -2.7-.1 -3.1,1.6 -4.4-.7 -5.3,2.8 -1.3,7.1 -.5,6M827.2,788.6l.4-2.6 1.8-1.4 3.2-1.8M827.2,788.6l-2.5-1.8 -.5-2 -2.7-3.5 -1.9,.2 -3.1,.3 -3.5,1.4 -4,3.1M809,786.3l-.9-3.7 -2.2-1.8 -2.8-1M853,788.1l-1.5,.9 -.3,0M851.2,789l-2.7-.3 -4-4.2 -4.1,2.3 -1.6-1.5 -2.3-1.5 -3.9-1M857.3,780.2l2.2-2.8 .9-3.8 -1.2-2.7 .9-2 -1.7-2.5 -2.4-.4M835.2,757.1l2-.9 2.4,1.7 3.2-2 4.3,3.2 3.6-.9 5.6,.5 .5,2.9 -.8,4.4M835.2,757.1l-1.9,2.2 -4,.5M830.6,805.8l1.6,1.8 2.1,1.6 -1.8,2.3 2.6,2.6 1.3-2 3-.7 1.7,1.1 2.6,1.9M830.6,805.8l-1.1-3.8 2.6-3.6 -1.8-2.5 -.9-3.9 -2.2-3.4M854.7,809.1l-3.8-1.2 -3.1-2.7 .6,2.8 -.9,2.6 -2.4,2.4 -1.4,1.4M783.9,803.4l3.1-2.4 -1.3-3.1 -3-3.1 .3-5.1 1.7-1.4 2.4-3 6.3,.3 1.9-7.1M783.9,803.4l-2,.2 -3.1-.4M795.3,778.5l-.4-.5M778.8,803.2l1.1-3.7 -1.2-2.5 -1.4-1.2 -2.6-1.8 -.8-5.4 -3.8-1.8 -4.7-.2 -2.8-3.7M762.6,782.9l3.3-.6 2.5,.4 4.1,.7 4.5-.1 2.5-1.5 -.8-3.3 -.7-6.1M794.9,778l-3.6-1.5 -1-3.2 -1.2-1.8 -.4,5.4 -5-2.5 -3.1,.5 -2.6-2.5M762.6,782.9l-.8,0M761.8,750l-.6,3.2 -1.5,3.7 -5.6,.7 -1.4,5.7 -1.4,1.2 -3,.2 -3.8,2.4 -1.3,4M761.8,750l.2,2.5 2.8,2.4 2.1,.3 2.9,1.6 3.7,2.3M773.5,759.1l1.2,3.1 -.9,2.4 2.9,3.4 .3,2.1 1,2.3M927.4,751.9l1.9,1.7 2,2.7 .7,4.3M927.4,751.9l-3.4-.2 -2.3-.5 -1.7-2.8 -1.9,0 -2.2-2M915.9,746.4l-2.3,3.9 -2.2,1.6 -2.1,.6 -2.3,1.4M932,760.6l-1.2,3.8 -1.8,2.1 -.6,3M907,753.9l-.9,1.8 -.4,3.1 1.3,2.8 2,2.6 -1.1,1.9M907.9,766.1l2.6,.3 2-1 1.4,3.9 2.8,.9 2.5,0 3.9,1.5M928.4,769.5l-2.9-.4 -2.4,2.6M950.8,742.9l-2.3-.7 -1.2-2.3 -3.5-1.6 -1.9,2.4 -3.7,.5M950.8,742.9l2.7,.4 2.3,.9 2.7,2.3 .6,3.7 -2.5,3 1.2,3.6M938.2,741.2l-3.2,1.4 -1.3,1.6 -1.1,2.2 -1.6-.6 -3.1-.1 -.6,2.8 .1,3.4M957.8,756.8l-1.4,2M956.4,758.8l-.3,4.2 -.6,.8M955.5,763.8l-2,2.6 -5.3-.2 -5.1-1.3 -3.1-.8 -1.3-2.6 -2.9,.1 -3.8-1M949.6,791.4l3.8-1.9M949,791.4l-2.1-1.2 -1.6-3.2 -4.6-1 -2.4-2.8 -2.2-3.5 -1.2-2.2 -1.7-6.6 -4.8-1.4M953.4,789.5l2.6-5.1 -2.2-3.6 -4.2-.4 -1.5-3.4 .1-3.1 3.4-3.3 3.8-6.7 .1-.1M955.5,763.8l.9-5M900.5,790l-1.3-3.4 2-3.3 .9-3.8 -.8-2.1 -.5-2.9M900.8,774.5l0-2.4 1.5-3.6 2.9-.1 2.7-2.3M916.7,791.4l2.3-1 .7-3.5 1.8-3 2.5-2.1 3.2-3.7 -2.7-1.8 -1.4-4.6M827.4,585.5l1.9,2.8 -1.3,3.1 -2.3-.1 2.9,1.8 2.5-.5M827.4,585.5l-3.7,3.1 -5.1,.3 -2.3,2.3 -2.4,1.5 -5.5,.5 -2.2-4 -4.4,4.1 -5.1-.5M803.9,612.5l-3.2-1.7 1.1-3.7 2.5-3.6 -2.1-1.8 1.6-3.8 -2-3.8 -5.1-1.3M803.9,612.5l2.8,3.9 1.2,2.4 2.4,2.3 3.9-1 2.3-5 3.6-1.5 3.6,3.2 3.2,.6M831.1,592.6l-2.8,2.8 -2,3 -.6,1.7 -2.7,1.5 -3.9,3.8 4.5,5.3 1.1,4.6 2.2,2.1M899.5,480.8l-.8,2.3M898.7,483.1l-1.1,3.4 2.5,3.2M900.1,489.7l-.1,7 6.7,1.4 4.9-2.9 5-1.3 2.3-2.2M925.2,521.7l0-3.1 2.8-2.9 2.2-2.3 -.2-5.4 .4-3.7M925.2,521.7l-4.1-.7 -2,4 -3.3-.2 -2.3-.7M913.5,524.1l-2.3-1.3M896.2,507.5l.1-2.7 2.4-3.3 -1.5-4.2 -3.1-1.2 .3-2.8 2.6-2.1 3.1-1.5M880.7,510.2l-.9-2.9 -1-4.3 -.4-2.4 -2.2-2.1 -2.5-.7 -3-3.5 -3.8,1.1 -3.1,1.7M898.7,483.1l-5.5,.1 -2.6-3.9 -.7-4.8 -2.9-1.5 -8.1-3.1 -1.9-4.9 -2.9,8.7 -7.2-3.7M866.9,470l1.5,4.1 .8,2.6 -2.2,.8 -2.8,2 -2.4,4.5 1.1,4.4 1.8,5 -.9,3.7M863,532.5l-1.2,1.3 -2.5,1.5 -2.8,.1 -2.2-.9 -2.7-.4 -2.3-2M863.8,497.1l-3.5-.3 -3.9-.7 -5.1,1.6 -3.7-3.5 -5.6,1.8 -5.1-.7 -6.6,2.2 -3.3,2.4M827,499.9l-2.6,2.4 -1.8,3.4M822.6,505.7l3,6.5 5.4,2.2 4.4,1.2 2.9-1.1 3.5,3.9 -.7,6.5 4.6,1.4 3.6,5.8M682.7,35.5l.1,.1 -1.8,1.5M681,37.1l-3,.9 -3.3,.3 -3.6,.5 -6,1.6 -1.3,6.9 -3.8,1.9 -4.3,.1 .3,5.6M648.3,35.5l-.2,.7 -1.4,1.1 -3.1,.9 -2.3,1.3 -1.8,3.6M639.5,43.1l3.6-.7 1.4,2 1.5,2.2 2.5,2.2 -2.8,2.9 2.7,2.6M648.4,54.3l3.3-1.5 1.7,2.5 2.6-.4M687.7,58.6l2.7-1.1 1.3-3.7 -1.6-1.3 -1.2-3.4 -.8-2 -3-1.8 .4-5.3 -4.5-2.9M673,69.2l-2.5-2 -1.4-1.1 .4-2.6 -.2-3.7 -3.4-2 -.3-2.6 -3.9,.3 -5.7-.6M629.1,43.6l2.4-2.2 3.6,1.3 4.4,.4M641.6,78.6l1.5-4.6 1.6-2.7 2.8-3.7 4-.3 5.8-3 -2.7-5.9 -1.4-3 -4.8-1.1M609.4,406.6l3.6,.1 2.8-.9 -.5-4.1 2.9,1.4 1.8-2.5 3.6-1.4 1.9-3.8M609.4,406.6l-.3,8.9 11.6,2.3 2.8,5.7 4.9,1.1 -1.5,6.8 4.9,2.3 2.1,9.3 2.7,6.8M625.5,395.4l4.2,2.8 5,4.9 3.6,3.3 7.3,3.2 4.9-7.2 6.8,5.6 2.8,3.7 .9,3.3M661,415l-1.2,3.6 -5.3-.7 -.9,3.4 -3.2,4.6 4.7,2.8 1.8,4 -5.6,6.2 -.8,6.2M650.5,445.1l.4,3.4 -2.3,2.7 -1.7-1.1 -2.6-.8 -2.9,.6 -2,.9M636.6,449.8l2.8,1M603.4,407.2l2.3-.1 3.7-.5M632.2,369.4l1.1,3.8 .6,2.3 -3.7,2.5 -.2,4.3 1.3,4.6 -3.5,2.9 -1.2,2.3 -1.1,3.3M606.7,454.9l2.3-1.4 2.7-1.8 3.8-1.4 1.5-1.8 6.7,3.3 3.5,2.2 6.7-.6 2.7-3.6M685.8,400.9l-5.6,2.8 -1.8,4.4 -4.9,1 -3.1-1.2 -2.7,1.9 .7,2.5 -3.5,.4 -3.9,2.3M702.4,437l.4-2.8 -1.8-4.5 -1.5-2.8 2.5-3 3.5-2.8 1.4-6 -5.1-6.2 -3.6-4.5M702.4,437l-1.5,3 -2,1 3.1,1 .7,3.3 -3.1,2.9 -.7,2.8 -2.2,1.1M680.7,459.1l-.7-2.8 -3.6-3.8 -1.3-3.7 -3.3-1 -3.3,4.4 -5.2-1.3 -6.3-5.3 -6.5-.5M663.6,504.5l-2.5-2.7 -3.7-.4 -1.4-3.8 -3.9-2.8 -.1,4.1 -3.4,1.4 -5.9-1.3 -3.7-.8M639,498.2l-1.1-7.3 4.5-6.5 -6.3-5.8 .3-7.3 -2.8-7 1.5-5.1 5.4-3 -1.1-5.4M639,498.2l-4.6,3 -7.1,5.2 -5.1,.4 -5.1,2.2 -5.3,4.1 -1.2,5.1 -5.5,6.2 -9.7-5.5M581.1,496.6l2.8,2.6 2.3,.9 2.3,4.7 -1.5,3.5 3.6,3.8 .6,3.6 1.1,3 3.1,.2M395.3,672.7l2-1.1 2.4-.6M395.3,672.7l-.9,1.8M394.4,674.5l6.6,3.3 -3.5,6.8 5,1.1 2.8-.9 -1,3.7 3.1,4.3 -3.8,2.5 1,5.9M399.7,671l1.3,3 2.5,1.2 2.1,3 .1,2 2.6-1.6 4.3,1.1 3.5,3.4 2.1,2.2M418.2,685.3l-2.2,3.3 -4-2.1 -.1,4.6 -.3,4.2 -1.9,3.5 -3-.5 -2.1,2.9M378.7,652.1l-4,1.7 -3.2,3 -2.1,1.6 -1.1,1.9M378.7,652.1l2.8,3.9 1.2,4.8 .8,2.9 -.3,3.1 3.7-.1 3.4,2.5 2.1,3.6 2.9-.1M368.3,660.3l-3.7,3.6 -2.7,5 -.6,4.9 3.9,2.2 1.7,3.6 .9,5.3 3.8,1.4 2.1,1.2M373.7,687.5l4.1-2.6 1.9-4 3.3-2.5 1.1-3.9 3.7-.6 4.2-.2 2.4,.8M403.9,704.1l.7-2.9M373.7,687.5l-1.4,2.8M419.1,658.2l1.1,1.3M419.1,658.2l-2.2,.7 -2.6,1.6 -3.1-1.1M411.2,659.4l-3,3.3 -.5,2.5 -4.4,.5 -3.8,1.4 .2,3.9M421.2,684.3l2.8-2.6 1-2.9 .5-2.8 1.7-3.6 -2.4-3.3 -2.4-.9 2.4-5.8 -4.6-2.9M421.2,684.3l-3,1M83.5,559.8l6.5-1.6 4.1,2.3 2.2-5.8 2.5-3.2 11.1-.2 4.2-5.6M111.2,587.9l1-.5M112.2,587.4l3.2-11 -7.2-4.7 3.2-3.5 2.7-5 -3.1-3.4 -.3-3.1 5.5-5.7 -2.1-5.3M148.9,602.7l2.2-2.3 .5-1.9 3.8,.2 1.5-2.8 .5-2.9 -.7-4 .8-3.2 2.1-1.6M148.9,602.7l-.9-2 -1.9-3.8 -5.7-.3 -1.3-3.6 -3.3-1.1 -5-.9 -8,1.2 -6.5-4.9M159.6,584.2l-.8-3.8 1.3-4 -1.7-2.2 -.6-2.7 -4.3-1.3 -3-1.3 -2.6-3.1 -4-4.4M116.3,587.3l5.9-3.6 3.3-3.8 5.2-2.6 2.2-4.6 .3-6 4-2.9 1.4-4.2 5.3,1.8M108.5,527.6l-.5,3.7 1.8,2.2 -1,3.4 -1,2.6 2.7,.2 1.9,.5 1.5,1.4 1.2,2.4M114.1,545.7l1-1.7M115.7,622.8l3.2-.5 3.4-3.4 4.2,1.2 .3,2.9 3.5-1.1 3.2,2.6M126.6,655.6l.8-2.1 2-2.6 3.2-.9 2.6-.9M135.2,649.1l-.5-4.8 -1.7-2.7 -1.4-3.1 .3-2.1 .2-3 .8-1.9 .1-2.7 .5-4.3M148.9,602.7l1.8,3.2 0,1.8 .5,3.1M112.2,587.4l4.1-.1M133.5,624.5l4.1-.4 1.6-2.9 2.3,.1 2-1.5 4-.8 2.6-3.3 -.7-3.5 1.8-1.4M143,696.3l7-3.6 7,1.3 2,6 3,2.5 4.7,5.1 4.3-6.7 6.5,1 5-6.3M170,740.9l6.7-3.9 -1.3-8.1 4-3.2 4.7,1.9 2.7-5.4 3.9-6.7 10.2,3.2 5.9-7M182.5,695.6l1.4,4.8 2.5,1.7 5.2,2.1 4.2,.7 4-5.8 3.1,6 3.3,3.7 .6,2.9M139.2,688.4l4.8-3.6 9,2 .8-8.4 4.4-2.9 6.4-6.5 6.2-5.3M170.8,663.7l.9-.8 .5-7.2 -1.2-6M182.5,695.6l-.2-10.4 -3.4-4.9 2.5-6.1 -5.1-7.4 -5.5-3.1M170.8,663.7l-.1-.1 .6-5.3 -1.3-4.7 1-3.9M235.2,702.1l-3.6,1.8 -3.1,1 -1.9,1.1 -3.3,1.5 -3.6,1.5 -2.6,.6 -3.1-2.3M233.2,761.8l-4-6.3 -1.3-10.1 .7-6 -.5-4.1 -7.7-3.5 -4.9-3.5 -4.5-7.2 -1-9.5M214,707.3l-3,.1 -1,4.2M135.2,649.1l6.7,3.2 4.5,3.3 1.2-3.6 5.2-2.9 6.7,4.2 4.7-1 1.1-4.4 5.8,1M171,649.7l.1-.8M210,711.6l-3.2,.1M288.8,461l2.7,1.5 2.1-3 3.6-.9 .1-.1M297.3,458.5l2.1-2 1.7-4.6 3-3.8 -.4-4.8 3.6-4M288.8,461l.6-3.1 3.7-.4 2.8,1.2 1.4-.2M297.3,458.5l3.9-.4 2.6,3.1 5.4,2 7.6,.8 1.2,5.7M331.7,434.6l-.2,4 -2.6,2.9 3.3,2.5 3,5.1 -.5,1.9 .1,3.7 -1.3,4M318,469.7l4-.9 1.8-4.5 1.6-2.8 -1.7-3 3.5-1.7 2.7-1.3 2.1,2.1 1.5,1.1M368,442.9l-2.7,8.2 2.2,5.1 1.2,4.8 2.8,1.7 -.5,2.6 -.1,3.8 -2.7,4.2 -3.4-.1M364.8,473.2l-3-1.3 -1.3-1.3 -2.6-1.7 -3.1-.3 -2,.7 -3.2,.9 -2,2.4M333.5,458.7l-.1,4 3,3.1 3.5-.8 2,1.8 3.5,2.3 2.2,3.5M386.5,520.9l-2.8-2.4 -2.8-2.8 -3.1-1.7 -3.8,1.3 -3.6-.7 -3.9,.7 -4.8-.9 0-6.2M386.5,520.9l4.5,2.1 4.1-4.5 3.9-2.6 2.2-7.6 -2.6-8.8 4.8-5 2.4-4.6 .1-3.1M361.7,508.2l9.6,2 1.6-8.2 .8-4.4 .4-6.2 .9-5.5 -3.5-1.8 -.8-2.3 .8-3.3M371.5,478.5l4.9-.8 3.6,3 4.3,5.4 7.5-.7 3.2-1.2 4.7-1.4 2.1-2.1 4.3-1.5M406.1,479.2l-.8,3.9 .6,3.7M364.8,473.2l1.5,1.6 2.2,1 3,2.7M423.2,515.6l-8-2 -3.4-4.8 .7-5.4 .1-3.5 -1.6-1.4 -1-3.2 -4.2-3.2 .1-5.3M423.2,515.6l3.3-3.9 3.6,1.2 2.2-2.8 2-3.3 2.1,2.1 1.2,1.4 2.8,1.4 2.5,.1M387.1,523.2l-3.7,2.3 -3.5,2.3 -2.9-.5 -3.4-.2 -3.1,3 2.3,5.7 -1.1,5 -4.2-.9M387.1,523.2l-.6-2.3M367.5,539.9l-3-.6 -2.5-1.8 -3.9-1.5 -4.3-1.5 -2.3-2.6 -3-4.3 -.1-3.1 -.2-2.7M361.7,508.2l-3.5,1.4M358.2,509.6l-2.1,3 .5,4.4 -2.2,2.1 0,2.8 -1.9,1.6 -1.7-.9 -2.6-.8M347.6,472.6l2.9,5.1 -2,5.5 -4.7,1.6 -3.4-.9 -1.7,3.7 -1.6,3.1M358.2,509.6l.9-3.4 0-2.6 -1.3-3.5 -4.9-3.9 -6.5-1.6 -5,4.1 -5-2.1 .7-5.9M367.5,539.9l-1.3,2.4 -.1,2 -1.3,3.5 -4.3,.3 1.7,1.8 2.9,.1 -3.8,3.5 3.6,2.9M364.9,556.4l-4.1-.1 -2.4,.1 -2.2-1.9 -3.3-1.1 -4.2,.3M338.8,538.3l2.3-2.1 1.7-1.8 1.2-2.7 1.7-2 .1-3 .2-3.9M346,522.8l2.2-1M450.1,569.6l3.1-1.6 2.9-.6 1.6-2M450.1,569.6l1.4-4.2 -5.1-4.1 -3.5-1 -4.7-2.1 -2.8-2.8 -3.6,.3 -3.8-.4M449.9,531.2l-3.2,1 -2.7,1.5 -1.3,2.4 -.4,3.3 -3,3.9 -4.7,.9 -4.6,0 -1.4,2.6M428.6,546.8l1.5,3.4 -2.5,2.6 .4,2.5M423.2,515.6l-1.1,3.4 -.8,3.7 .2,4.4 -2.6,3.7M428.6,546.8l-1.9-1.1 -2.6-1.9 -1-2.2 .9-3.1 -.1-2.4 -1.2-2.8 -3.8-2.5M387.1,523.2l3.8,1 1.4,2.3 .5,2.6M418.9,530.8l-2.8,1.3 -3,1.2 -2.3,1.7 -2.1-.3 -3.9-1.2 -3-.1 -5.9-2.1 -3.1-2.2M275.6,389.8l-1,2.7 -1.9,2.6 -4,.5 -2.1,1.6 -2.5-.1 -.6,4.4M242.4,373.5l-2.3,5.1 1.5,3.5 .4,2.1M246.3,395.2l.6,.5 .8,3M247.7,398.7l1.9,.3 2.7,.6 2.7-1.7 2.6,.3 3.9,1.8 2,1.5M288,421.6l-1.8,1.6 -2.2,1.2 -4.4,.6 -2.7-1.2 -2.7-.5 -2.1,1 -1.9,2.2M263.5,401.5l-2.6,3.3 3.9,3.8 .3,3.7 4.3,1.6 -1.4,3.6 4.3,3.9 -2.6,2.3 .5,2.8M288.8,461l-3.3,1.4M285.5,462.4l-3.7-1.6 -3.4,.2M278.4,461l1.2-3.5 -3.4-3.7 .2-4.2 -2,.4 -2.5-1.3 -2.6-.2 -4.6-1.5M264.7,447l-2-2.1 -1-1.4 -.1-2.4 2-1.7M270.2,426.5l-1.4,2.8 -.7,3.5 -.7,4.4 -3.8,2.2M308.8,527.8l-2.8-2.6 -5.1,.7 -2.1-1.6 -4,0 -4-.5 -2.2-1 -6.2-1.3 -4.2-.9M308.8,527.8l1.7-.1 3.2-.4 .5-3.4 -.2-2.2 3.1-1.9 3.2-4.1 1.3-2.9 -.4-3.5M296.6,492.7l-2.5,3.7 -2.7,4.5 -1.1,3.5 -1.6,6.1 -3.9,0 -2.2,.3 -5.1,.2 -1.9,3.9M296.6,492.7l3.5,1.6 1.8,6 2.6-.8 4.5,.7 2.7-.1 3.3-1.8 2.5-2.4M278.2,520.6l-.5-3.1 -2.1-2.4M321.2,509.3l-1.5-3.2 -2.8-.9 2.6-2.9 .4-4.4M317.5,495.9l2.4,2M315.2,543.1l-2.2-2.2 .6-2.6 -.5-3.8 -1.4-3 .6-2.4 -3.5-1.3M346,522.8l-4,0 -4.3-2.3 -2.8,.6 -2.3,1.8 -5.5-2.3 -2-4.5 -1.3-2.5 -2.6-4.3M285.5,462.4l4.1,4.1 3.8-.5 3.2,3.1 -1,5.1 2.5,5.1 -2.5,5.4 -1.2,3.5 2.2,4.5M278.4,461l6.5,3.8 -6.5,5.8 -2.8,4 -5.7,1.1 -3.7,3.4 -5.4,3.5 .6,4.2 -2,3.2M259.4,490l4.8,3.2 -1.1,4.7 .1,6.2 .9,4.4 2.9,1.3 1.3,1.6M268.3,511.4l2.2,2.6 3.2-.7 1.6,1.4M318,469.7l-.2,3.9 3.2,4.2 -5.1,2 .2,6.1 1.4,3.7 -1.5,2.6 1.5,3.7M337.1,490.7l-5.2,2 -1.8-6.8 -4,1.7 -2.1,1.5 -1.9,3.4 -1.2,1.9 -1,3.5M241.5,468.3l-1.1,2.6 -2.2,1.9 -3.5-.3 -5.2-.1 -3,.3 -1.7-1.8 -3.1,.6M241.5,468.3l2.7-2.1 -.1-2.9 .1-3.2 2.6-3.2M246.8,456.9l-2.4-3.2 -2.3-.7 -1.7-2.7 -2.1-3.4 -2.6,2.9 -2,.7 -3.5,.4M230.2,450.9l-3.9,1.4 -2.2,1.2 -.4,2.7 .5,4.2 -2.3,2.1 -2.5-.1M221.7,471.5l1.5-3.2 -1.9-2.4 -1.9-3.5M249.2,489l-1.9-3.4 -2.1-1.9 -3.5-2.2 0-3.2 -1.4-2.8 -.2-4 1.4-3.2M249.2,489l-2.6,1.2 -1.2,1.9 -1.9,.4 -3.1,1.1M240.4,493.6l-4.6,1 -2.6,2.9 -3.5-1.1 -2.7,1.7 -2.6-2.2 -4.8-3.3 -3.3-1.1 -1.9-2M214.4,489.5l3.8-2.3 .8-4.1 -1.2-3.2 .1-2.1 2-2.9 1.8-3.4M259.4,490l-2.3-1.4 -1.1-1.8 -3.7,2 -3.1,.2M264.7,447l-1.3,2 -1,1.9 -2.9-.3 -2.1,1 -3.4,.4 -4,1.7 -1,2.2 -2.2,1M667.7,530.6l-4.8,4 -2.3,2.4 -3.9,5.2 2.7,7.4 -7.9,8.2 -11.3-1.7 -6,7.2 -1.4,6.6M595.4,518.9l-.9,3 0,4.5M594.5,526.4l10.5-1.4 3,7.9 4.5,4.4 -1.1,9 1.5,6.2 1.9,7.3 9,4.1 9,6M464.3,846.5l-1.1-2.9 .7-5.3 4.8-1.7 3-1.7 -1.2-3.6 3.4-4.5 1.6-2.7 .7-1.7M438.2,820.1l6.1,1.7 3.3-1.9 3.3,.9 3.9-1 4.9,1.1 3-4.2 4.2,2.2 7.9-1.3M476.2,822.4l-.1-2.6 -1.3-2.2M429.6,809.8l2.1-3.7 3.8-3.8 2.6-1.6 2.7-1.3 -1-2.2 -3.1-3.2 5.9-1.6 -3.1-7M476,814l-1.2,3.6M476,814l.2-4 -2-1.4 -.1-3 1.3-4.6 1.8-3.6 -3.1-.5 -2.5-4.5M439.5,785.4l4.1,1.4 5.5-.4 5.2,2 3.8,5.6 2.8,.2 3.5-2.1 3.9-.6 3.3,.9M419.1,658.2l2-1.6 2.3-1.2 -.1-2.3 -1.1-2.2M451.1,657.2l-3.9-2.7 -2.8,2.2 -2.6,3.2 -1.7,2.1 -.1,3.3 -4.1,1.2M451.1,657.2l-.9-1.8 0-2.7 1-3.4 -2.7-1.6 -3.1-1.9M420.2,659.5l2.5,1.5 2-.3 2.6-.3 2.1,1.3 1.7,3.7 2.2,.2 2.6,.9M445.4,645.8l-3.3-1.1 -3.3-.4 -2.3,.5 -1.4,2.4 -3.9,.3 -3.5-1.8 -2.5,3.1 -3,2.1M342,623.2l3.7-.4 2.2-1.5M342,623.2l3.5,2.6 3.6,2.6 .6,6.6 -.3,4.7 2,8.2 -5.1,3.3 -1.7,6.1 -.5,3.5M344.1,660.8l4.8-3.6 2.6-2.4 2.4-2 3.1,1.2 3.1-1.1 3.7,3.2 .8,2.8 3.7,1.4M347.9,621.3l5.2,6.3 6-1.3 5.4,8 6.7,.8 5.2,7.1 -4.6,4.5 4.4,1.7 2.6,3.3M348.2,581.5l3.5-2.8 2.8-6.2 3.8,1 4.8,3 .9-4.9 2.3-3.5 2.5-1.9 1.1-3.8M348.2,581.5l2.3,2.4 -.2,3.8 3.2,.7 2.9,1.2 -1,2.7 -1.4,2.2 1.8,2.2 2.6,.3M358.4,597l3.8,0 1.9-2.1 2.1-1.2 2.6-2.6 1.2-3 3.4,1M373.4,589.1l1.9-2.4 -1.6-4.2 0-3.9 1.1-2.1 1-3.9 4.3-2.3 -4.7-3.8 -3.2-2.9M372.2,563.6l-2.3-1.2M364.9,556.4l1.2,2.6 .9,1.7 2.9,1.7M336.5,578.6l2.5,.6 3.8-1.9 .1,1.9 1.6,2.9 3.7-.6M335.3,621.1l2.4,3 4.3-.9M335.3,621.1l-2.1-1.6M347.9,621.3l1.5-1.1M349.4,620.2l-.1-5.4 .5-4.4 -.4-4 2.7-2.5 3-1.6 .7-2 2.6-3.3M393.2,560.5l2.9-5.9 -.5-4.8 2.2-4.7 .9-3.5 -2.5-4.7 -2.9-1.5 -.6-3.5 .1-2.8M393.2,560.5l-1.6,1.5 -3.4-.4 -2.8-2.3 -5.3,.5 -3.1,1.1 -2.5-1.7 -2.4,1.5 .1,2.9M415.3,731.3l2-.9 3.1-.2 4,1.1 2.5,.1M411.1,708.4l4.3,0M426.9,731.4l2.7-.6 1.9-2.6 -2.2-3.6 0-3.4 -.4-4.5M415.4,708.4l2,.7 1.5,1.7M418.9,710.8l.9,1.1 .7,4.2 3.4-.5 2.2,1.6 2.8-.5M368.8,692.3l-5.7-.4 -8-2.3 -.3-4.2 -3.3-3.9 -3.4-2.8 -2.4-2 -1.6-2.8 -1.1-2M329.3,705l-2-2.2 -.9-1.4 1.5-3 .5-3.9 1.4-2.9 1.2-1.7M331,689.9l-.8-4.3 1.3-4.1 2.7-2.5 1.2-2.5 4.1-1 2.9-.8 .6-2.8M344.1,660.8l-.8,1.1M343.3,661.9l-1,2.6 -.3,2 .1,3.3 .9,2.1M1131.7,790.1l2.4-3.5 -.6-2.6 -2-.8 -1.9-1.6 2.5-2.3 1.8-2.3 2.9-2.1M1154.5,786.3l0-3.2 -.9-2.9M1153.6,780.2l-1.1-2.4M1152.5,777.8l-.4-.8 -2.2-2.4 -1.6,1.8 -3,1 -2.7-1.4 -2-.5 -3.8-.6M1118.4,791.8l2.4-.9 1.4-2.8 .1-3.2 -1.6-2.3 -2.3-2.8 -3.1-2.5M1115.3,777.3l3.4,.4 2.8-3.1 3.4-2.8 1.2-1.9 3.2-.8 3.4,.8M1136.8,774.9l-1.1-3.2 -3-1.8M1122.1,950.9l-4,.3 -2.7,2.1 -1.8,1.2M1118.2,987.5l-1.8-1 -4.3-.4M1112.1,986.1l-.8-2.2 1.5-3.4 1.4-3.6 3.7-1.9 1.8-7.1 -6.6-4.9 .8-3.2 -.3-5.3M1078.1,946.7l4.3-1 4.6,1.3 1.6,2.2 0,4.3 3.9,1.8 .5,3.3 3.6,1.5M1092.7,931.8l1.5,3.3 2.7,.6 3.7,2.5 5.9,3 -.7,4.8 .6,5.2 2.9,2.5M1096.6,960.1l2.2-.5 2.9-1.3 2.1-1.1 .8-3.1 2.6-.2 2.1-.2M1113.6,954.5l-4.3-.8M1077.1,987.5l-.1-.4 -.1-1.6 .5-3.2 -.2-2.9 2.5-1.7 2.9-1.4 1.9-2.4 -1.1-2.3M1100.4,987.5l0,0 2.1-1.8 3.3-.4M1105.8,985.3l-1.8-3.9 -2.6-2.6 -2.6-1 -1.5-1.7 -2.2-2.9 -1.9-3M1083.4,971.6l3.7,.3 2.4,.2 3.7-1.9M1070.8,960.5l.9,3.4 2.3,3.1 1.9,2.8 -1.7,2 2.2,.5 3.2,.3 3.8-1M1112.1,986.1l-3-1.4 -3.3,.6M1096.6,960.1l-2.4,3.7 1.9,2.6 -1.5,2.6 -1.4,1.2M925.2,521.7l3.7,1.6 1.1,3.5 .4,3.5 4.6,3.7 4.7,2 3.3,.1 3.6-1.6 2.5-.6M913.5,524.1l.6,2.7 2,1.7 2.6,2.5 1.1,2.8 -6.2,.9 -.9,6.4 .4,2.9 .9,3.3M875.2,552.1l-1,2.3 -.6,4 3.1,1.4 .3,3.5M914,547.3l.5,7.2 -7.9,5.9 -6.4,7.1 -6-4.6 -5.1,2.2 -6.1-1 -2.9-1.4 -3.1,.6M961.7,717.1l1.7-2.3 0-2.6 1.1-3.3 .8-5.8 1.3-2.6 1.4-1.9 -1.4-3.7 .6-2.6M961.7,717.1l2.7,1.2 1.6,.5 3.3,1.5M993,698l-2.3-3.1 -1.9-2.9 -1.2,1.7 -2.9,.6 -5-1 -1.3-2.9M993,698l-1.2,1.8 -.8,2.6 -.2,3.6M969.3,720.3l3.7-3.8 1-4 .3-3.5 1.8-1.1 4.4,0 4.8-3.2 2.9,2.3 2.6-1M967.2,692.3l2.1-2.6 2.7-.4 .3-3.5 2.5,.1 1.7,2.4 1.9,2.1M1082.4,645.4l.1-3.8 -1.8-1.6 -.1-.9M1082.4,645.4l2.2-2.2 2.3,.9 2.5,2 .5,2.8 2,1.2 1.9,3.6M1101.3,648l-1.3,1 -2.4,1.7 -3.3-.6 -.5,3.6M1062,657.7l5.4-.2 4.7,.4 1-2.9 1.5-4.2 2.4,.2 3.2,.5 .5-3.8 1.7-2.3M1062,657.7l1.4-3.6 -1.2-2.1 -2.7-3.5 -3.1-.5 -2.6-1M1068.5,633.1l-4,.3 -4.1-1.7 -.4-2 -1.9-2.4M1053.8,647l2.3-2.4 1.4-2.2 1.8-5.7 -5.8-.9 4,.1 1.2-3.6 -.8-2.5 .2-2.5M770.3,834.5l-1.1-3 .1-3.7 -5.2,.9 -4.2-3.5 -2.8-3.1 -.1-2.2 -2.3-2.6M770.3,834.5l.5,2.1 -1.7,2.4 -1.7,3 -1.5,3.1 -3.6,1.5 -1.7,1.9 -1.7,1.8M735.9,841.8l-2.2-2.7 .9-5.4 4-.2 2-3.4 2.5-5.2 5.5-1.1 4-2.3 .3-4.7M735.9,841.8l1.2,2.6 3.2-1.2 3.2-.5 4.1,1.5 1.6,4.1 3.5,.6 -.9,2.4 -.7,2.1M754.7,817.3l-1.8-.5M758.9,850.3l-2.4,.8 -2.5,.9 -2.9,1.4M774.5,862.4l-2.5,.4 -1-.2M771,862.6l-2.4-.6 -3.4-1.5 -.2-3.4 -.3-2.4 -1.7-2.9 -4.1-1.5M774.5,862.4l2.5,1.6 2.5,.4 3.3-2.6 1.9-2.7 1.2,1.9 2.6,2.5 .3-3 2.1-1.4M781.2,835.9l.3,2.6 -2,4.2 2.5,2.5 .9,5.6 3,3.3 3.7,1.1 1.3,3.9M781.2,835.9l-2.2-1.9 -3.2,.4 -2.6-1.3 -2.9,1.4M730.6,842.6l3.1-2.2 2.2,1.4M748.6,811.4l.9,4.4 3.4,1M749.2,873.6l4.1-3 -1.9-4.6 -.2-3.2 2.3-1.6 -1.2-2.9 .6-2.6 -1.8-2.3M778.8,803.2l-2.1,1.3 -3.3-.6 -3.9,.6 -4.1,1.3 -4.2,1.6 -2.7,1.7 -1.5,3.4 -2.3,4.8M774.5,862.4l-2.6-.6 -.9,.8M771,862.6l-1.1,1 -1.8,2.1 0,3.7 -.5,2 -2.5,1.8M878.3,783l.4-4.3 1.6-2.3 .4-3 3.3-.3 -.9-2.9 -.3-2.2 -.8-2.1M856,766l2.5-.3 1.7-2.9M882,765.9l-2.3-.5 -3.2-.7 -2.8-2.2 -4.1-2 -3.1,2.5 -1.8,1.7 -1.5-1.6 -3-.3M900.8,774.5l-2.4,.7 -2.8,2.6 -5.7-.3 -2.3-2.8 .3-3.2 -.3-2.6 -2.7-.8 -1.5-3.2M882,765.9l1.4-1M907,753.9l-4.3,.5 -.7,4.8 -2.3-.8 -2.9-.6 -2.3-2.5 .1-5.6 -3.1-.9 -3.1-.2M883.4,764.9l1.1-2.5 .1-2.6 -3-1.4 -1.7-4.3 2.4-2.5 -.8-4.4 3.8,.9 3.1,.5M808.9,827.1l-2.3,1.8 -2.4-2.6 -2.2-1.7 -4.4-.6 -4.3-1.9 -.9,1.2M792.4,823.3l-2,2.8M808.9,827.1l-1.1-4.3 3.4-1.8 -2.2-2.7 .3-3.8 2.4-2.7 .6-4.1M812.3,807.7l-1.8-2.1M810.5,805.6l-4.1-1.2 -2.8,1.1 -2.6-3.7 -6.3-2.1 -2.5,2 -2.8,.9 -1.7,1.6 -1.7,1.8M786,806l2.6,2.3 1.9,.6 -.8,3.6 3,3.8 -.4,4.1 .1,2.9M792.4,823.3l.1,.2 -2.1,2.6M830.6,805.8l-3.3,2.2 -2.9,.1 -3.2-.9 -4.2,.5 -2.9-.6 -1.8,.6M815.3,833.4l-.5-2.1 -1.3-2.3 -1.6-2 -3,.1M815.3,833.4l4.3-1.2 4,4.6 8.2-1.6 3.1-6.7 .8-3.9 2.3-1.9 3.2-4.7 2.1-2.7M843.3,815.3l.4-.9M809,786.3l2.3,1.6 -.6,3.5 4,1.3 -3.8,.5 -1.7,4.7 -1,3.1 2.3,4.6M783.9,803.4l2.1,2.6M795.3,778.5l2,.6 2.7,.7 3.1,0M781.2,835.9l2.9-3 .5-3.6 2.9-2.9 2.9-.3M825.7,846.1l-1.4,3.6 -2.1,3.2 3,3.4 -2.8,2.1 -2.3,3.1 2.3,3.2 1.7,3.4M825.7,846.1l-2.5-.5 -2.6,1.7 -1.2-3.5 -.4-2.1 -1.2-2.5 -2-2.9M815.8,836.3l-2.8,5.3 -6.7-.1 -3.6,.9 -3.3,2.6 3.8,5.3 -3.1,3.4 -4.1,3.2 -2.3,4.1M824.1,868.1l-1.5,2.2 -2.3,1.6 -2.8-1.5 -2.9,1.4 -1.3-3.1 -3.8-.5 -3.5-2.1 -2.1,1.8M803.9,867.9l-1.3-1.2 -1.2-3 -3-1.9 -4.2,.1M794.2,861.9l-.5-.9M815.3,833.4l.5,2.9M790.9,859.1l2.8,1.9M805.6,903.9l.4-3.6 -2.5-5.4 -1.9-2.7 -3.2-3.2 7-2.3 2-6.5 .7-5.8 -4.2-6.5M824.3,868.3l1.5,1.9 1.5,2 .5,3 1.6,2.4 .2,4.1 -.1,7.2 3,2.9 .2,2.7M799.6,908.7l1.2-.4M781.4,887.2l-1-2.2 .5-2.9 1.2-4.3 -1.2-2.8 2.3-3.5 5.2-.8 2.6-3.4 3.2-5.4M864.7,843.5l-1.7-.2 -3,0 -3.2,.6 -3.3,.9 -2.8-1.1 -3.7,.6 -1.8-1.7M864.7,843.5l3.7,1.6 .6,4.4 2.6,2.8 -1.8,4.3 .3,3.4 -1.9,1.8M846.4,862.3l2.6,1.7 1.7,1.2 2.7,2.1 3.6-1.6 1.3,1.5 -.5,3M846.4,862.3l-2.1-2.6 -1.8-1.7 -2.6-1.9 2.3-3 -.3-4.2 3.2-2.6 -.4-3.1M844.7,843.2l.5-.6M868.2,861.8l-2.2,.8 -3.4,1.9 -.1,2.5 -1.2,2.6 -3.5,.6M873.6,832.1l-3,.7 -2.3,1.7 -.3,2.6 1.1,2.4 -3.5,1.2 -.9,2.8M843.3,815.3l.3,5 1.9,5.7 .3,4.2 -.4,2.8 1.6,2.2 2,2.3 -3.5,1.5 -.3,3.6M893.9,865.2l2.4-3.8M893.9,865.2l-5.2,1 -2.2-4.7 -1.4-2 -3.4,.1 -3.5,4.5 -4.8-1.5 -2.5,1.5 -2.7-2.3M824.3,868.3l4.4,0 3.6-2.3 -.4-3 2.4-1.8 2,2.8 3.4,2.4 4.4,1.1 2.3-5.2M856.2,890.2l3.1-1.9 0-3.7 -.5-3.8 -.5-2.5 -.2-3.9 -.3-4.2M839.1,896.9l.8,0M825.7,846.1l1.9,3.5 5.3,2.4 2.5,.9 3.1-2.2 2.1-1.6 1.9-1.7 1.2-2.7 1-1.5M833.2,950.4l-2.8,.9 -2.8,1.9 -1.9,.1 -2.7-1.5 -2.8,2 -2.9,2.8 -2,2.5 -.2,2.3M833.2,950.4l1.1-2.1 2.1-3.2 1.1-3.9 -2.8,.2 -3.4-.3 -.4-3.9 -1.5-2.2M828.6,934.4l.8,.6M828.6,934.4l-4.9,1.6 -.3,3.6 -2.7,3.6 -6.6,.7 -1.8,1.2 -3.6,.4 -2.7,.8 -2.3-1.5M815.1,961.4l-3.3-1.1 -2.5,1.7 -2.2-.7 -3.6-.9M803.7,944.8l.6,2.3 3.4,2.4 -2.4,2.2 -2.8,1.7 .4,3.2 -1.3,2.3M803.5,960.4l-1.9-1.5M829,980.2l-1.4-3.9 -3.1-2 -2.9-3.6 -3.4-.4 -3.1-.7 -1.2-3 .3-2.1 .9-3.1M829,980.2l1.9-4.6 -.6-3.3 .6-3 2.1-4.5 1.9-4.9 -.4-3.7 2.8,1.7M837.6,958l.3,.2 .2-.1M838.1,958.1l3.8-.4M841.9,957.7l-2.5,.8 -1.3-.4M838.1,958.1l-.5-.1M837.3,957.9l-1.5-3.5 -2.1-1.3 -.5-2.7M828.3,933.6l.3,.8M854.3,928l-3.5-1.5 -5.5,1.6 -1.6,3.1 -4.8,2.4 -2.1-2.1 -4.1,.5 -2.4,.7 -.9,2.3M789.6,922.3l.3,3.9 1.4,3.5 .7,2 1.5,3.2 .9,2.4 .9,3.8 3.2,4.2 5.2-.5M829.9,987.5l-2.1-1.1 1.7-2.2 -.5-4M801.5,987.5l-3.1-3.2 -4.3-6.7 6-2.7 1.2-4.8 1.9-3.3 1-3.1 -.7-3.3M792.1,960.9l3.8-2.4 -.2-4.4 .8,2.1 .9,3.4 4.2-.7M1016.6,810.1l-.6-3.2 -3.8-.5 -2.1-1.4 -2-1.9M1040.2,802.3l-1.7-3.4 -1-3 1.2-2 -.5-2.6 -.2-3.2M1038,788.1l-1.2-2.3 -4-1.5 -2.7,.8 -2.4-1.5M1027.7,783.6l-2.3,2 -3.6-.1 -4-1.1 -3,3.3 .2,3.1M1008.1,803.1l-1.3-2.4 1-2.2 .9-1.8 2.7-1.2 1.9-1.5 1.7-3.2M997.7,804.2l-3.1-.7M997.7,804.2l2.6,3.2 2.4,4.2 3.4,1 -1.1,4.5 -2.5,3.4 -3.2,4.2 0,6.1 .7,8.1M994.6,803.5l-3.5,0 -2.1-.4 -1.9,.6 -2.7,1.6 -2.2,1.8M1000,838.9l-2.5,.8 -2.2,1.2 -1.4,3.9 -3.2,1.9M982.2,807.1l-.2,.5M982,807.6l-4,4.5 .3,1.2M978.3,813.3l1.2,4.5 -.1,1.8M979.4,819.7l-.2,2.8 1.4,5.8 -3.5,3.1 1.8,4.6 1.8,6.3 4.4,.7M990.7,846.7l-3.1,0 -1.2-1.6 -1.3-2.1M1004,838.1l-4,.8M1008.1,803.1l-4-1.2 -1.5,1.7 -.7,2.9 -1.8-1.4 -2.4-.9M991.7,853.3l1.5-3 -2.5-3.6M963.6,823.7l2.5-1.2 2.3,.6 3.3-.8 3.6-.2 4.1-2.4M979.4,819.6l-1.6-3.4 .5-2.9M978.3,813.3l.1-.9 3.6-4.8M953.4,789.5l3.4-.1 2.9,1.4M959.7,790.8l4.3,2 3.3,1.5 3.8,5.8 -.7,6.5 3.2,1.9 2.9-1.9 2.1,.3 3.6,.2M970.4,840.9l4.2,1.1 2.5,.5 3.4-.2 2,.7 2.6,0M966.8,939.5l1.3-2.7 1.2-1.2 -1.6-1.6 -1.1-3.3M935,947.8l-.5-2.4 .2-3.7 -.6-2.8 0-5 1.9-.9 1.6-2.8 3.1-1.7M940.7,928.5l1.8,1.1 3,1.1 4.6,1.8 2.8,3.5 2.4-2.3 3.2-2.5 4.2-3.1 3.9,2.6M979.6,915.3l-2.5,.2 -2.6,1.6 -3.4,1.2 -2.4,2.1 1.1,2.8M1000.5,935.9l-1.8,3.8 .5,3 -1.6,3.8M997.6,946.5l-.8,4 -5-.6 -2,3.9 -2.5,3.7 -2.9-.5M969.8,923.2l-3.1,2.7 -.7,1.9 .6,2.9M884.1,951l-4.9,1.1 -4.2,2.6 -.9,2.8 -3.1,1.7 .8,3.6 -1.1,2 -1.3,5.6 -.8,4.4M884.1,951l-1.6-4.1M882.5,946.9l-2.4-2.1 -1.9,.2 -1.6-2.3M876.6,942.7l-4.1,1.3 -3.1-2M869.4,942l-1.9,2.5 -3.3,1.5 -5.5,1.7 -3.9,2.5 0,3.5 -1.7,2.3 -3,.4 -1.1,2.1M849,958.5l2.3,3.7 -1.2,3.7 -.5,3.5 3.1,.5 2.9,2.9M855.6,972.8l3.6-2.5 3.7,.4 1.8-2.1 1.4,1 2.8,.9 -.3,4.3M875,986.5l-3.3-1.4 -.1-.2M871.6,984.9l-.7-2.1 -1.6-3.1 -.9-2.1 .2-2.8M889.9,957.1l-2.7-2.5 .5-2.7 -3.6-.9M927.2,951l-.4-.4M926.8,950.6l-2.7,.6 -4.4,.1 -7.9,2.2 .3-6.8 -4-2.1 -4.2-2.9 -.8-2.2 -1.7-4M901.4,935.5l-3.6,1.8 -6.3,2.1 3.4,3.7 -1.5,4.9 -2.2,.2 -3.7-.4 -1.5-1.7 -3.5,.8M856.3,928.7l2,1.7 4.1,1 2.7,3.1 1.5,3.3 1.1,1.4 1.7,2.8M841.9,957.7l3.5-.6 3.6,1.4M850,987.5l0-.1 3-5.1 -.4-4.4 3-5.1M912.9,894.6l-.8-3.3 -2.8-1.8 -4.1,3.7 -3.4,.1 -3.4-1.3 -2.8-2M912.9,894.6l.7,3.5 1.8,1.6 3.6,2.4M919,902.1l-1.8,.8 -1.5,2.3 -2.3,5.3 -4.6-.8 .6,7.2 -4.5,2.3 -1.7,4.4 4.5,1.9M895.6,890l.1,3 .8,1.7 -4.1,.4 -2.7,1.4 -1.8,.9 -3.2,1.6M907.7,925.5l-2.1,1M905.6,926.5l-2.5-1.1 -2.1-3.1 -3.7-.6 -3.1-1 1.2-5.9 -.9-3.9 -3.5-2.3 -5.5-3.6M884.7,899l1.1,2.4 -.3,3.6M893.9,865.2l-.2,4.2 -.4,3.1 1.1,4 .9,3.3 -.8,1.9 .3,3.4 .3,2.5 .5,2.4M933.9,871.1l-.5,2M933.4,873.1l-2.7,4.3 -4.2,.1 -4.5,2.4 -3.1-1 -2.6,3.1 -1.4,3.7 2.5,4.8 -4.5,4.1M873.2,897.9l2.7,1.4 3.8-.8 3.1-1.4 1.9,1.9M926.8,950.6l.1-3.1 -2.9-3.1 -2.7-3.3 -1.4-2.4 2-3.9 -.7-3.1 -.5-2.9M920.7,928.8l-2.3,0 -2.9-1.5 0-3 -3.8-.9 -4,2.1M901.4,935.5l2.1-2.9 -1.8-4 3.9-2.1M876.6,942.7l-.3-6.1 0-3.6 .4-7.3 2.8-6.4 2.1-3.4 1.7-2.8 3-4.8 -.8-3.3M959.7,790.8l1.8-2.4 2.5-3.2 .5-2.8 .2-3.6 4.6-5.1 4.4-1.3 2.7,.3M976.4,772.7l2,.2 2.1,2.3M957.8,756.8l3-1 1.9-1.4 4.4,.8M967.1,755.2l-1.2,3.6 3,3.5 1.9,3.1 -2.5,3.3 3.5,1.2 2.4,1.8 2.2,1M976.4,772.7l1.8,.8 2.3,1.7M1015,790.8l-2.3-4.7 -1.5-2.4 -6.4-1.6 -3-3.7 -2.2-5.1 -3.9-2.3 3.1-2.5 3.8-3.5M1002.6,765l-3.5,.6M994.6,803.5l.9-2.7 -1.2-2 -1.2-3.8 -1.9-3.3 .3-3.9 1.4-4.1 -1.9-4.8 -1.6-2.8M999.1,765.6l-3.8,.9 -3.6,.5 -.5,3.5 -1.4,1.8 -.4,3.8M980.5,775.2l3.5,.4 3.3,1.2 2.1-.7M1014.7,974.4l2-8.6 7.7,3 -3.2-3.9 .3-5.4 5.5-2.7 3.3-1.2 3.8-.3 3.1-1.3M1014.7,974.4l-1-4 -1.4-3.2 -1.6-2.1 -1.5-2.5 -1.1-3.8 1.9-2.7 .4-2.5M1010.4,953.6l2.2-2.4 1.7-.5 2.3,.3 3.3,2.3 3.4-2.1 2.1-1.5 3.7-1.6M1037.2,954l-3.9,.3 -2.4-1 -.9-3.3 -.9-1.9M1012.2,980.9l0-2.7 1.3-2.4 1.2-1.4M997.6,946.5l-.1,3.1 -.2,1.8 4.9,.2 1.7,2.9 3-.4 3.5-.5M1019.1,925.3l3.7,2.4 4.7,3.3 -2.3,2.5 -1.9,5.2 3.8,.8 2.2,.1 0,3.4 -.2,5.1M307.2,704.6l1.1-3.7 2.1-4.6 -2.7-2.9 -.6-2.5 -2.5-3.1 -1.9-5 -.8-3.6 .3-2M278.7,675.1l1.2-2.3 2.4-1.2M282.3,671.6l3.9,1.9 2.3,1.4 1.4,2.1 3.2-.4 3.4-1.8 2.8,2.5 2.9-.1M335.3,621.1l-1.4,5.1 -4.5,5.5 -2.7,3.1 -.9,3.5 -2.5,4.2 -2.2,3.1 -4.7,5.2 -5.1,1.4M343.3,661.9l-3.6-1.8 -3.4-1.7 -4.4,1.6 -2.9-1.8 -1.6-3.4 -4.9-.4 -2,3.8 -4.2,2.1M311.3,652.2l1.7,2.3 1.5,1.2 -.7,2.5 2.5,2.1M331,689.9l-2.3-3 -1.2-3.7 .8-2.6 -1.4-2.9 -3.1,1.9 -6.1,.7 -5.4-1 -1.1-6.7M316.3,660.3l-2.9,1 -3.2-1.5 -2.4,3 -.5,2.2 1.6,2.8 1.7,1.6 .6,3.2M302.2,677.2l3-2 2.6-.8 3.4-1.8M272.1,640.8l1.8,1.8 3,1 2.3,3 3.3,3.6 -.8,4.3 3.6,2.6 -1.5,3.6M272.1,640.8l2-3.9 3,.2 1.6-1.5 2-2.6M280.7,633l2.1-.3 3.2-.9 2.5,1.3 2.1-2.5 3.4,.2 4.1,.9M283.8,660.7l1.5-3.1 2.6-.1 4,3.4 3-2.3 3.1-1.5 3.7-.4 1.3-2.7 .6-4.5M298.1,631.7l-2.5,3.1 -1.8,2.5 0,4.1 3.2,1 -.6,2.2 1.2,2.3 2.7,4.1 3.3-1.5M279.5,610.4l.9,5.5 4.4-.7 -.6,2.7 .7,2 -3.2,.1 -1.5,4.4 3.4,3.2 -2.9,5.4M279.5,610.4l2.1-3.1 .6-3.7 1.6-1.8 1.9,2.7 1.2,2.6 2.4-.9 1.9-2.6M305.9,621.4l.2,3.4 -3.5,2.3 -4.1,.5 -.4,4.1M282.3,671.6l2.5-2.7 2.3-1.7 -1.4-2.5 -1.9-4M311.3,652.2l-4.1-.8 -3.6-1.9M766.6,306.9l1.1,3.9 -.9,5 3.6-.6 4.7,3.7 -1.7,1.8 -.6,4.1 -3.1,1.7 .6,3M794.6,313.6l-3.2-2.2 0-2.5 -2.4-3.5 -4.4-.1 -2.7,0M794.6,313.6l.7,3.5 -1.2,2.9 -.1,4.4 -3.4-.3 -3.1,2.2 -1.3,3.6 -1.3,2.9M784.9,332.8l-2.1,.2 -3-1.2 -1.4,3 -.7,2.3 -2.8-2.6 -2.4-2.5 -2.2-2.5M746.6,334.4l4.2,1.2 2.5-1.7 2.4,2.5 1.7,2.7 2.2,1.1M759.6,340.2l2,0 2.8-1.2 1.2-4.2 .7-3.5 4-1.8M808.1,298.4l-2,.3 -3.1-.3 -3-.7 -1.1,3.9 -.5,2.2 -.7,2.8 0,3.3 0,3.4M808.1,298.4l4.2,1.6 4.3,.4 3.4,1 1.9,3.1 -.1,2.5 2.7-.2 1.9,.4M797.7,313.3l3.6-.4 3,1.5 2.4,3.4 -1.2,4.7 5.2,3.5 3.4,2.1 2.1,1M826.4,307.2l.5,4.3 -1.9,3.7 -2.5,.6 -1.7,5.2 .2,3.9 3.3,1.7 4.5,.8M816.2,329.1l2.3,0 3.1-1.3 2.3,1.9 2.3-1M826.2,328.7l2.6-1.3M807.5,295.3l.6,3.1M794.6,313.6l3.1-.3M828.4,306.4l-2,.8M831.7,329.4l-.2-.2 -2.7-1.8M838,354l-.2,.6 -4.4,4.2 -1.8,6.9 -4.7-.6 -5.7-.9M821.2,364.2l1.8-3.2 .2-4.4 -1.6-4.1 -3.2-4.2 4.3-4 2.3-5.9 .3-5.4 .9-4.3M445.4,645.8l.3-2.2M422.2,650.9l-1.5-2.8 -2.7,.1 -.8-2.9 1.8-2.7 -.1-1.9 1.4-2.2 -.4-2.4M419.9,636.1l-1.7-3.9 2.5-1.9 3,.2 2.6-2.1 2.2,1.1 3.2,2.9 4.2-.1 3-1M445.7,643.6l1-2.6 -1.1-2.1 -2.2-2 .7-1.6 -.3-3.1 -1.9-2 -.1,.1M441.8,630.3l-2.9,1M803.6,692l0,3.4 .5,2 -.3,3.6 -2.8,2.4 -.8,.9M800.2,704.3l-1.5,1.8 -2.6-2.1 -3.5-1M803.6,692l3.4,3.6 2.9,1 -.5,2.2 1.7,3.1 3.6-.3 2.4-2 2.2,3.1M792.6,703l4.9-1.5 2.9,2.1 -.2,.7M800.2,704.3l-1,2.7 .3,4 2.4,1.2 1.9,3.1M803.8,715.3l.3-2.5 2.9-2.6 3.6-1.6 3.8-1.1 1.9,2.1 3.1-1.3M819.3,702.7l0,2 .1,3.6M803.9,675.1l2.2,3.7 .2,4.2 -1.8,4.3 -2.9,.5 -.5,3.1 2.5,1.1M803.9,675.1l-4.7,1.1 -2.1-2.6 -4.1-.9 -4,2.4 -3.6,2.1 -4-2 -5.9-1M773.5,686.8l1-3.7 1-2.1 .4-4.4 -.4-2.4M786.7,702.7l3.6-.2 2.3,.5M803.9,675.1l2.4-1.6M827.6,684l1.8,4M829.4,688l-1.1,2.4 -4.1,1.3 2,5 1.3,3.3 -2.6,.2 -2.5,1.1 -3.1,1.4M829.4,688l2.7-1 2.1-1.3 2.8,1.7 .9,1.7 1.9,2.2M839.8,691.3l2.3,2.7 3.4-1.1 2.7,2.6 -2.7,3.5 1.8,2.4 .2,2.6 1.9,2.9M849.4,706.9l-2.9,.3 -2.9-.7 -2.2,1.8 -3.9,2.7 1.6,3.3 -.1,3.9 -2.4,.6 -3.3,2.7M833.3,721.5l-3.7-.5 -6-1.9 6.1-3 -3.6-4.8 -3.3,1 -1-2.3 -2.4-1.7M737.7,569.6l-2.9,7.4 5.3,5.8 -5.5,4.5 -.2,5.2 -1.3,5.2 -4.5,1.8 -7.3,7.8 -3.1,4.9M737.7,569.6l-.3,3 2.8,2.9 -2.4,3.2 2.2,2.7 2.2-2.5 3.9,2.4 3.5,3.8 3.4,.6M718.2,612.2l-.7,2.4 -1.8,2.3 1.8,2.7 1.5,3.8 4.5,1.9 4.5,3.2 -1.2,4.3 2.1,4M728.9,636.8l2.2,.3 2.8-.5 3.4,0 2.7-2M740,634.6l1.6-1.5 2.2-3 3.4-.4 1.6-2.4M753,585.7l-.4,3.2 -.9,4 -.1,2.9 .3,4.6 -4.3,3.8 .2,6.1 -1.1,6.9 2.1,10.1M867.7,707.5l-1.1-3.3 3.6-2.4 2.6-2.1 .7-2.2M867.7,707.5l-2.8-1.2 -1.7-.9 -1.9-1.9 -2.6,2 -3,1 -2.8,.9 -3.5-.5M839.8,691.3l4.1,1 3.3-4 .9-2.6 -.1-2.7 .3-5.4 2.7-3.8 6.7-1.2 3.3-3.1M873.5,697.5l-1.8-3.7 -4.2-2.9 .4-3.8 -.5-4.4 -1.7-1.6 -1.3-4 -1.3-3.2 -2.1-4.4M835.3,668.6l2.9-1.9 2.1-2 3.6,1.5 2.2,.8 5.6-1.5 3.4-.8 2.2-2.7 3.5,1M861,669.5l.8-2.7 -1-3.8M818.5,652.5l3.3-2.2 3.2-3 5.3-2.8 4.2-.4 6.4-1.5 .5-5.5 5.1,2.2 3.6,.3M850.1,639.6l3.3-.5 3.1,2.6 2.1,1.1 2.1,2.2 1.6,4.9 .8,2.8 -1.7,2.6 .6,5.1M860.8,663l1.2-2.6M801,726.9l1.1,2.1 .1,3.3 -2.9,2.3 2.3,2 2.2,.1 3.1,.1 1.5,1.2M801,726.9l-4.5,2.5 -3.4-3 -1.3-1.7 -.6-3.8 -.5,3.2 -3.1,.9 -3.9,1.8M781.5,737.8l1.2-3.3 0-3.8 1-3.9M781.5,737.8l2.6,2.8 2.4,.5 .6,3.8 0,3.3 3.5,.6M790.6,748.8l3.9,.3 2.6,1.1M797.1,750.2l2.1-1.5 2.5,1.4 2.7-3.1 2.4-1.2 1.3-2.4M808.1,743.4l2.6-2.9 -2.3-2.5M833.2,722.5l.1-1M833.2,722.5l-2.8,2.9 -1.6,1.6 -3.7,1.8 -8.7,4.1 -4.9-4 -1.1,5.7 -2,3.4M803.8,715.3l-1.9,3.4 .6,2.6 -.3,3.5 -1.2,2.1M777.3,719.9l1.8,2.8 2,.4 .2,2.7 2.4,1M763.1,719.9l-.2,4.4 -2.1,3.7 -2.6,2.2 -2.5-.5 -.7,2.5 -.1,4M761.6,747.2l-2.3-2.3 -1.1-1.9 1.1-2.4 .5-2.7 -2.1-1.5 -2.8-.2M761.6,747.2l2.6-3.5 2.2-2.2 1.2-1.4 4.4-2 2.8,.7 2.9-1.8 3.8,.8M761.8,750l-.2-2.8M773.5,759.1l1.6-4.3 2.7-1.5 1.8-2.4 2-2.9 3.5,.5 1.9,2.6 3.6-2.3M794.9,778l1.9-3.1 0-2.5 -.6-2.6 -2.1-1.8 -1.5-4.8 -1-4.1 1.3-7.1 4.2-1.8M825.7,759.4l-1.8-1.7 -3.2-.7 -3.9,3 -3.2-3 -3-4.2 1.6-5.2 -2.5-1.4 -1.6-2.8M835.2,757.1l.5-4.7 0-2.8 -2.1-1.4 -1.5-1.7 4,0 3.1-4 4.4-2.1 -1.7-3.4M841.9,737l-2.8-1 -1.7-1.1 -3-1.7 .4-3.9 .8-1.8 .9-2.5 -3.3-2.5M856.2,602.6l-1.1-3.4 -3.8-3.3 -2.4-.9 -2.4-3.3 -5.2-.6 -4.6,.4 -2.3-.5 -3.3,1.6M856.2,602.6l1.9,1.7 -.2,2.9M826.9,617.4l1.4,2.1M828.3,619.5l3.6-1.4 4.6,.5 4.3,1.7 2.7-1 -1.9,3.8 .2,4.1 4,1.5 2.5-.1M857.9,607.2l-.6,5 -5.8,3.5 1.7,4.8 4.8,1.2 -4,1.7 -2.6,3.7 -3.1,1.5M809.2,646.2l.2-3.3 -.7-5 1-3.2 1.2-2 3.5-2.9 4-6.4 6.1-2.2 3.8-1.7M809.2,646.2l1,2 .7,2.3 2.4,1.6M850.1,639.6l-1.2-2.1 1.3-3.9M850.2,633.6l-1.8-1.3 -.1-3.7M732.6,400.7l-2,5.3 6.2,4.8 3.4,2.5 .3,3.1 2.3,4 3,1 1.2,6.4 -3.8,3M732.6,400.7l-7.9-.2 -4.3,.7 -.8-4.3 -6.3-1.3 -2.3,2.6 -1.4,1.2 -6.2,0 -2,3.5M702.4,437l2.7,.3 1.9,1.4 4.4,1.2 2.6,1 3.5,.9 4.9-1.6 4.3,1.2 4.2,.8M730.9,442.2l.7-3.9 2.2-.2 2.3-1.2 0-2.8 2.3-2.5 2-2 2.8,1.2M707.3,463.1l3.1,3.3 1.9,2.7 2.9,.3 2,1.1 4.6-3.5 2.6-4.9 4.8,2.2 5.8,1.3M730.9,442.2l-.7,2.7 -3.3,.9 0,4 2.1,3.4 2.1,2.8 4.1,.8 1.8,3.7 -2,5.1M866.3,573.1l-2.4-1.5 -1.4-2.7 -2.5,.5 -2,2.3 -4.4,2.4 -4-2.2 -2.3-2.5M866.3,573.1l2.9,1.4 2.4,.6 -.2-3.2 3-1.8M874.4,570.1l1.6-2.3M849.3,532.1l-.1,2.6 1.1,1.9 -1.8,3.4 .1,2.4 -1.6,3.5 -.9,3.4 -3.5-.3 -2.3,.5M877,563.3l-.8,2 -.2,2.5M840.3,549.5l.6,3.8 -.5,2.9 -.9,4.3 0,2.7 2.9,3.3 .9,2.9 4,0M866.3,573.1l-.3,6 -1.8,3.6 1.6,2.9 2.3,2.4 -.3,6.2 -3.9,3.1 -4.3,1 -3.4,4.3M827.4,585.5l1.5-4M847.3,569.4l-.2,3.5 -2.8,3.8 -2.6,.6 -2.4,3.5 -2.5-2.3 -2,1.1 -3.3,1.9 -2.6,0M138.7,498.4l2.1,4.3 5.1-1.2 1.8-1 2.8,.9 3.2,1 3.6,4.6 -.4,5.5 -1.7,3.4M115.1,544l3.3-2.1 5.1-4.5 2,3 4.9-1.1 3.1,3.1 1.2,4.7 5.2-.7 3.4,1M155.2,515.9l0,1.6M155.2,517.5l-5.5,.7 -2.2,8.1 0,5.3 -6,2.8 -.5,4.2 .9,2.8 .3,3.9 1.1,2.1M143.9,561.4l-2.5-2.4 -.3-4 1.1-1.8 2.5-3.1M144.7,550.1l-1.4-2.7M169,511.4l1.4,4.9 2.6,2.3 5.1-.1 3.9,1.2 4.3,2 0,4.4 5.5-1.5 4.5-.4M169,511.4l3.7-3 2.9-.1 -.2-4.1 2.6-5.8 4-1.5 2.8,1.5 -.8-2.2 1.5-2.8M196.3,524.2l-3-4.1 -1.6-5.5 1.6-5.8 2.4-7.2 4.1,.4 2.8-3.4 2.1-3.6 .5-3.5M185.5,493.4l3.1-.6 2.1-2.3 3.9,1.9 2.7-.6 2.8,1.1 3.6-2.1M203.7,490.8l1.5,.7M165.2,470.8l2.8,1.7 .4,2.3 3.1,2.5 1,2 6.5,3.3 5.6,.3 2.3,4.5 -1.4,6M155.2,515.9l3.7-.1 2.9,2.2 2.5-2.2 .8-2.7 3.9-1.7M184.9,442.6l-.4,5.2 -3,8.4 .1,8.1 8,8.3 -2.1,5.5 4.8,8.6 6.8,.5 4.6,3.6M211.3,491.3l3.1-1.8M211.3,491.3l-3.7,.7 -2.4-.5M186.3,439.9l4.4,7.7 .2,5.8 8.6-3.1 4.5,9.5 3.3-1.1 2.5,0 4.3,1.7 5.3,2M314.1,546.5l-2.5,3.6M311.6,550.1l-.1,.2 -3.1,.1 -3.2,2.7 -.1,2.9 -5.7,.8 -.5,6.3 -3.8-2.3 -1.7-2M278.2,520.6l1.3,2.5 -.3,2.5 .8,3 2.5,2.9 -3.3,2.3 -1.6,2.2 -2.8,.6M274.8,536.6l6.2,1.5 6.4,2.4 1.4,3.2 -.8,5.7 2,3.8 3.1,1.2 .3,4.4M295.6,585l-.9-3.1 -2.4-2.6 -3.7-2.2M288.6,577.1l1-4 1.9-2 3.6-2 .2-4.2 -1.9-1.9 0-4.2M151.2,610.8l1.1,6.4 7.2,.6 2.6,2.1 2.8,.5 2.2,2.9 3.5,.8 1.8,2.7 2.7,2.3M171.1,648.9l.6-2.6 2.8-1.3 1.7-2.7M175.1,629.1l-1.2,2.2 -2.3,3.3 1.3,2 -.4,3.1 .7,1.9 3,.7M214,707.3l3.4-7.5 3.3-7.1 4-6.1M223.6,663l-.4-4.5 -7.8-2.5M176.2,642.3l4.4,1.2 5.9,3 8.8-.2 6.8-1.8 -.2,3.6 .9,5 6.7,3.3 5.9-.4M393.2,560.5l2.3,1.3 2,1M428,555.3l-4-.3 -1.7,4M397.5,562.8l2.4,1.4 2.3-.9 4.6,1 1.2,3.5 2.5-1.6 3.1-3.4 5.2-3.1 3.5-.7M228.8,401.9l-3,1.9 -5.2,2.2 -4.4,2.3 -3,2 -3.2,.7 -3.7,2.6M206.3,413.6l-.5,.3 .4,.8M206.2,414.7l1.7,4 -2.4,2.7M228.8,401.9l2.2-1.3 2.8,.8 2-3M242.2,402.4l1.5,4.5 -.3,2.8 -.2,3.9 -1.5,1.8 -2.9,2.6 -.8,4 1.9,2.8 1.2,3.7M241.1,428.5l-2.5,1.1 -4.4,1.1 -1.1-1.6 -2.4-1.5 -4.1,1.5 -2.4,3.1M224.2,432.2l-1.8-2 -3.5-2.4 -1.7,1.8 -2.8,2.5 -3-3.6 -3.1-.2 -2.2-1.8 -1.5-1.2M205.5,421.4l-.9,3.9M216.3,375.7l2.3,4.2 1.2,3.6 .6,3.4 1.1,2.4 3.7,2.2 2.6,1.7 -1.1,5.7 2.1,3M196.3,387.8l2.7,5.3 -4.5,3.9 3.9,5.5 5.3,2.5 -3.6,2 -1.6,5 7.8,1.2 0,.4M206.3,413.6l-.1,1.1M206.2,414.7l-.7,6.7M247.7,398.7l-1.6,2.2 1.7,3 -3.4-.3 -2.2-1.2M263.6,439.4l-2.8-.7 -2-3.7 -3.5-1.6 -5.1-.5 -3.3-.1 -2,.8 .3-3.4 -4.1-1.7M230.2,450.9l0-2.5 1.3-2.5 2.1-2.9 .1-2.4 .2-4.7 -1-2.6 -4.2-3.2 -4.5,2.1M186.3,439.9l3-3.2 1-2.5 .2-4.1 .8-2.5 4.7,2.9 3.2-1.4 1.6-2.8 3.8-1M275.6,515.1l-.3-.4M275.3,514.7l-2.2-2.9 -4.8-.4M268.3,511.4l-.9,0 -2.3,.1 -3.4-.2 .4,3.5 -3.6,4.2 -2.8-.7 -2.6,1.4M240.4,493.6l-.8,2.4 1.9,2.2 -2.9,2.3 -.9,2.5 -.9,1.7 1,4.7 1.9,2.3M253.1,519.7l-1.8-1.9 -2.5-2.7 -2.2-2.8 -2.6,0 -1.9,.4 -2.4-1M718.2,612.2l-2.4-3 -4.2-.5 -5.3-5.1 -4.8,.7 -2.5,2.8 -5.1-.9 -2,1.4 -3.8,2M688.1,609.6l-1,2.5M728.9,636.8l-1.9,1.7 0,2.4 -3.2,3.2M723.8,644.1l-2.5-1.9 -4.6,1.2 -4.3-2.9 -2.9-1.7 -4.9-.4 -2.9-6.7 -1.6,2.7 -4.4,2.2M687.1,612.1l-.2,2.4 -1.2,3.2 -6.5,3.8 6.5,6.1 -1.6,3.6 3.3,2.5 2.7,2 5.6,.9M687.1,612.1l-2.4,1.1 -2.9-1.7 -5.8-.2 -2.5,4.2 -4,4.5 -4,1.9 -.3,2.7 .9,4.6M695.7,636.6l-2.9,3.4 .6,4.3 -.2,3 -2.2,1.9 -5.3,.5 -5.2,3.7 -3.5,1.3 -3.4,.9M666.1,629.2l1.1,2.2 .2,4.3 3.2,.6 2,1.9 6.2,3.2 -2.2,6.6 -1.4,3.2 -1.6,4.4M662.7,581.8l4.4-1.3 5.3,.9 1.4,.7M673.8,582.1l2.5,1.1 2.7,2.4 1.9,1.4 .7,3.8 2.5,1.7 -1.1,4M662.7,581.8l-2.9,.1 -3.7-.9 -2-1.2 -1.4-2.4 -2.9,.2 -.9,3.4M688.1,609.6l-1.2-1.6 -1.7-2.1 -.9-4.3 -2.3-1.3 1-3.8M666.1,629.2l-2.9-.1 -1.6,.2 -3.8-1 -2.4,1.2 -2.7-2.8 -1.1-3.3M648.9,581l2.6,7.8 -5.7,4.9 0,3.6 -2,6.1 4.5,3.3 1.2,4.7 .6,7.8 1.5,4.2M694.5,549.9l-6.7,2.8 3.3,4.7 -1.3,5.9 -6.4,2.5 -1.4,6.3 -4,6.1 -4.2,3.9M673.8,582.1l-2.3,2 -8.8-2.3M632.8,569.9l1,3M648.9,581l-3.1-1.8 -3.5-.1 -1.8,2.5 0-1.8 -.8-2.8 -1.2-3.1 -4.7-1M575.2,804.4l-4.4-5.6 4.3-3.5 1.2-3.2 -3-1.9 -3.9,.2 -2.2-1.2 -3.2-2.2M575.2,804.4l1.7-1.5 3.1-.1 3.6,0 .3,1.4M583.9,804.2l.7,3.5 -1.2-2.5 .5-1M583.9,804.2l1.3-2.5 3.3-2 1.9-.9M564,787l1.9-4 2.5-1.7 1.4-2.6 1.4-1.1M590.4,798.8l2.5-3.3 .7-4.2 .1-2 1.1-2.6 1.1-3.1M571.2,777.6l3,1.4 2.9-2.6 3.6,1.4 5.1-3.1 3.1,2.2 2.9,2.2 1.9,3.5 2.2,1M532.9,781.4l.5,5.3 0,5.6 3,4.3 -3.7,3.9 2.6,3.6 2,3 1.8,2.7M532.9,781.4l2.3-1.8 4.4-.4 2.5,.9 3,.8M545.1,780.9l2.1-1.1 3.2,1.1 3.9,1.8 1.4,2.3 2.5,2.4M558.2,787.4l-2.9,3.3 1,4.1 -5.3,.9 3.1,5 -6.5,2.9 -.3,4 -.3,2.2M539.1,809.8l4.3-.5 3.6,.5M571.2,777.6l-2-1.1 -2.3-2.5 1.3-1.5 1.4-2.3 1.7-2.4M571.3,767.8l.9-2.8 1.4-3.9 5.6-4.5 4.2-.3 1.6-2.6 3.4,.7 4.5,1.9 3.9-1.8M595.9,783.6l1-.7M596.9,782.9l-.5-4.9 -2.3-3 -1.9-4 3.9-4.4 1.1-3.9 3.2-.6 -.5-2.8 -1.9-4.7M596.8,754.5l1.2,.1M556,831.8l-1.3-3.2 .3-3.7 -3-1.9 1.6-4 -3-1.6 .4-4.5M556,831.8l2-2.1 3.6,.4 5.5-3.1 1.2-4.3 1.2-3.9 4,2.3 3.8,1.1M551,812.9l3-1.5 1.4-3.3 2.4,.4 2.5-1.7 3.1,.1 3.8-3 1.6,3.7 5.1,1.3M577.3,822.2l1.3-3.1 -3.1-2.6 -.5-2.7 .8-2 -1.9-2.9M575.2,804.4l-1.6,1.4 .3,3.1M564,787l-2.9,1 -2.9-.6M547,809.8l1.1,2.1 2.9,1M495.4,857.8l.3-3.5 3.7-2.2 1.4-2.1 1.9-2.5M476.2,822.4l4.4,1.4 4.9,5.9 4.3,2.7 4.2-1.3 1.1,4.8 -.2,3.1 5.3-3.1 3.3,5.1M502.7,847.5l-.3-1.9 -2.6-2 .9-2.3 2.8-.3M525.1,883.6l3.4-4 .2-.3M528.7,879.3l2.2-2.1 -1.3-4.5 -2.8-1.5 -2.8-3.9 .7-3.2 1.1-2.4 3.1-1.1M502.7,847.5l4.6,.2 4.2-1.2 4.8,0 5.6,3.4 3.2,2.7 1.9,2.8 .1,3 1.8,2.2M413.2,764.9l3.7,0 3.2-.9 2.6,3.5 4,1.7 3,.6 1.9-1M426.9,731.4l1.7,2.8 1.8,1.6 .3,.3M430.7,736.1l1.9,1.8 3.1-.6M435.7,737.3l-5-1.2M430.7,736.1l-.5-.1 -3.9,4.9 -.3,6.6 2.5,3 1.8,3.1 -1.3,3.7 .1,4.9 2.5,6.6M439.5,785.4l-.5-3.8 -3.5-2.1 .1-3.8 .1-3.4M431.6,768.8l1.9,3.2 2.2,.3M372.7,619.1l2.6,3.3 .2,3.6 1.1,5.4 4.5,4.1 4.1,0 3.4-3.3 .8,3 1.6,4.3M372.7,619.1l1.9-1.5 2.4-1.5 3.7,.7 4.1-2.2 5.4,1.8 3.1-6.9 -2-4 2.4-4.7M394.9,600.7l1.2,4.4 4,2 -4,2.9 .3,7.2 1.4,5.1 2.7,1.9 1.1,2.3 1.3,2.3M394.9,600.7l-1.2,.1M402.9,628.8l-2.7,1.3 -3.1,.1 -3.4,0 -.1,3.1 .2,1.7 -1.1,2 -1,2.4M391.7,639.4l-.7,.1M349.4,620.2l4.3,1 2.5,1.3 2.7-.6 3.3,1.4 1.6-3.3 2.9-3.7 2.3,.9 3.7,1.9M378.8,651.7l2.8-3.9 2.9,1.7 2.2-3.1 2.8-2.6 1-1.9 .5-2.4M373.4,589.1l3.6,3.6 3.2,1 .5,2.6 -3.1,2.8 4.8-1.9 2.4,3.2 4.5-1.2 4.4,1.6M397.5,562.8l-.1,5 2.2,4.1 5.4,2.9 .1,7.3 -3.5,3.6 -1.9,3.1 4.4,3.7 -4.7,4.7M399.4,597.2l-2.4,1.3 -2.1,2.2M411.2,659.4l-4.5,1.1 -6.8-2.8 -1.2-4.1 -4.2-2 -1.3-3 1.1-5.1 -1.6-1.2 -1-2.9M414,629.9l2.6,2.3 1.8,2.3 1.5,1.6M414,629.9l-2.5,1.6 -3.4-1.2 -3.1-1 -2.1-.5M421.2,684.3l2.2,.6M435.9,666.5l-1.1,2.3 -3,1.9 3.2,2.3 2.2,3.9M423.4,684.9l3.5-1.4 3.5-.7 1.5-1.8 -1.1-3.2 3-1.4 3.4,.5M428.9,716.7l3.8,.3 2.3-.7 2.2-3.6M435.7,737.3l2.2-1 2.2-.7 3.2-.6 3.2-.2 .7-3.8M447.2,731l.1-2M447.3,729l-1.6-2.2 -1.2-2 -1-3.6 .6-2.8 -.7-3.3M443.4,715.1l-.2-1.1 -1.8,1.4M441.4,715.4l-1.8,1.5 -2.4-4.2M1095.1,794l-2.2-2.5 -.6-2.1 -.5-3.2 1.4-2.5 1.5-2.3 -.6-2.6 -1.8-2.4M1115.3,777.3l-3.5,0 -2.1-1.7 -1.8-2.3 -3.5-1.6M1092.3,776.4l3.9-.2 .8-1.8 2.6-1.5 1.4-1.6 3.4,.4M1133.1,758.7l.2,4.1 -1.2,2.1 .5,3.2 .1,1.8M1133.1,758.7l-4.4-1 -3.3-.6 -2.1-3 -4,.1 -2.1,1.9 -3.8-.7 -3.7-.1M1104.4,771.7l1.9-3.1 2.1-2 -.8-3.6 -.6-3.5 2.3-.8 .4-3.4M1110.1,735.6l2.3,1.9 4.4,.1 2.5-1.9 1.5-1.7 5.4-.9 3.3,2.1 4.2,1 3.6,.9M1110.1,735.6l4.2,.1 3.2-2.1 6-2.1 -2.7-4.8 -.1-3.4 -1.6-4.3 .9-2.7 -1.2-2M1137.3,737.1l2.1-3 .7-2.5 -.3-4.1 -1.5-3.3 -.7-2.7 -3.2-2.3 -2.2-2.3 -4.2-2.3M1118.8,714.3l1.9,.3 3.5,.8 3.8-.8M1170.4,760.4l-1.1,.1M1170.4,760.4l2.1-1.4M1169.3,760.5l-5.1,.1 -.4-.2M1163.8,760.4l-2.8-1.4 -2.9-2 -2.7-4.3 -2.3-1.5 -2.7-1.6 -3.9-3.8 -3.6-.9M1142.9,744.9l-2-2 .6-3.5M1172.4,726.1l-8.1,.8 -4.6-2 -3.6,3.3 -1.8,2.5 -1.1,4.5 -4.8,2.5 -2.8-.4 -3.2,1M1142.4,738.3l-.9,1.1M1172.5,765.3l-.7,0 .3-2.3 -1.7-2.6M1153.6,780.2l-1.2-2.2 .1-.2M1152.5,777.8l1.3-3.1 .5-3 .4-3.3 1.1-4 4.2-1.2 3.8-2.8M1163.8,760.4l1-.7 4.5,.8M1133.1,758.7l1.7-2.6 .4-1.9 1.1-2.6 2.2-1.2 1-3 3.4-2.5M1109.7,755.3l-1.8-3.8 -.8-2 -.3-3.2 -3-2.5 .4-2.6 -1.2-2.6M1103,738.6l2.4-2.9 2.1,.5 2.6-.6M1137.3,737.1l1.9,1.1 2.3,1.2M1171.7,719.7l-1.4,2.7 2.1,3.7M1150.3,711.8l-.8,1.3 -.5,3.3 .2,4.7 4.3,4.2 -3.3,1.1 -3.1,2.6 1.4,5.2 -6.1,4.1M1149.4,711.4l-.1,.1 -1.9,2.6 -3.2-.5 -1.6-2.2 -3-.1 -1.4-3.9 -2.7-1.7M1135.5,705.7l-2.7,1.7 -2.7,1.9 -1.9,3.2 -.2,2.1M1106.2,648.6l.8,.6 1-.7M1093,667.2l.3-3.6 .1-2.5 -.2-3.4 .6-4M1093,667.2l3.2,2.7M1096.2,669.9l2.9-1.7 3.2,1 3.9,1.5 3.5,.3M1096.2,669.9l1,4.7 -1.6,3.7 -.7,2 .4,3.2 3.9,4.1 -1,6.7 5.1,.8 3.4-2.2M1106.7,692.9l2.7,.6 3.5-1.5 3-2.5M1135.5,705.7l-1.6-4.1 -2.1-2.1 -.2-1M1118.8,714.3l.1-4.7 -.9-5 -2.5-1.4 -1.6-2.9 -2.9,1.5 -2.6,.3 -2.1-.6 -3-2.5M1103.3,699l1.5-2.2 1.9-3.9M1012.2,648l1.1-1.9 2.4-2 2.8-.8 1.1-2.2 2.5-2.5M1012.2,648l-2.2,3.6 -3,1.2 4,2.7 3,2.2 1.8,3.9 -3.7,2.1M1038,651.5l-1.9-4.8 -1.3-2.4 -2.8-1.4 -2.2,.7 -1.2-2.1 -.9-2.5 -2,.8 -3.2-1.1M1038,651.5l-3,2.8 -1.8,2 1.5,2.5 -.1,1.8 .6,2.5 -2.1,1.9 0,2.3 1,3.8M1034.1,671.1l-4.9,.9 -3.7-5.1 -2.3-.3 -1.9-3.1 -2.3,.3 -2.4-1.5 -1.8,1.8 -2.7-.4M1062,657.7l-.1,3.8 .8,2.1M1053.8,647l-1.7,.6 -2.1,2.2 -.8,2.1 -.6,2.5 -2.6,.3 -2.7,1.3 -2.5-1.7 -2.8-2.8M1034.1,671.1l2.9,3.2 2.8,2.8 -.1,3.4 1.6,3.5M1041.3,684l.7,.4M1042,684.4l1.6-3.8 4.8-1.6 2.6-3.2 2.8-6.4 3.1-1 2-1.3 1-2.3 2.8-1.2M1093,667.2l-.5,2.8 .6,2.6 -3.3,1.7 -3.9-1.8 -3.5-3 -3.2,3.2M1090.7,707l-1.9-1.3 -2.3-1.6 .1-3.4 -.7-2.2 -2.8,.2 -3.8,.5 -5.7,.1 0-1M1073.6,698.3l.1-5.6M1090.7,707l3.3-.7 1.8,2.8 3.3-1.1 1.5-2.3 2.8-1.9 -.3-1.7 .2-3.1M1073.7,692.7l4.2-2.6 .1-3.5 2.8-.6 1.9-1.4 -1.2-3.5 -1.1-2.4 -1.2-2.7 0-3.3M1079.2,672.7l-3.4,.9 -2.9-1.2 -1.7-1.9 -2.2-.7 -3.1-1.5 -2.5-1.8 -.7-2.9M1015.9,619.3l2.1,1.1 4,0 .4,3 0,3.9 -.5,4.2 -1.7,3 1.9,4.1M1015.9,619.3l-3-2.9 -2.8,.5 -4.2,1.1 -3.9,1.6M1002,619.6l-.3,5.3 -2.8,3.2 -3.4,0 -1.2,4.5 .2,2.7 -3,2 -3.4,2M1012.2,648l-3.4-.1 -3-.4 .9-3.4 -2.9-1.6 -2.2,1.3 -2.8-.9 -4.1-.6 -2.6,.9M992.1,643.2l-2.3-1.1 -1.7-2.8M1012.1,663.7l-2.8,1.5 -1.1,1.4 -2.9,1.8 -1.5,1.4 -1.1,3M1002.7,672.8l-2-.6 -3.2-.4 -4.1-.7 -3.3-2.9M992.1,643.2l-2.7,4.2 .9,3 -1.6,2.3 -3.9,.1 4.2,3.9 -1.2,3.9 2.1,4.7 .2,2.9M958.4,683.1l1.7-2.1 -1.4-3.6 3.2-1.4 .9-2.1 -1-2.5 -1.3-4.4M958.4,683.1l3.6,1.1 2.2-.1 2.9,1.3 2.1,2.8 -2.2,1.4 .2,2.7M978.4,690.4l-1-3.3 -.2-2.6 2.1-2.4 1.9-2.7 1.5-2.5 .9-1.4 .6-3.4 .4-2.8M960.5,667l2.9-1.4 1.8,.8 3.3-1.8 .8-2M969.3,662.6l2.4,1.1 3.2,1.4 3.4,2 2.6-.6 1.6,2.7 2.1,.1M988.1,639.3l-2-.8 -2.8,.2M969.3,662.6l-1.2-3.3 -.5-2.8 1.2-4.3 .1-2.4 1.9-2.9 2.6-1.3 .4-2.5M990.1,668.2l-2.3,.2 -3.2,.9M983.3,638.7l-3.4,1.6 -2.9,2.4 -3.2,.4M960.5,667l-2.4-3.3 -1.5-1.5 -3.4,.3M955.6,634.2l1.1,2.5 1,2.3 2.8,2.6 3.7,1.8 3.6,2.9 1.9-2.2 4.1-1M955.6,634.2l0,3.2 -.8,3.3 1.4,2.2 2.6,1.1 1.4,3.3 -2.8,2.6 -3.1,4.5 -5.9-1.4M948.4,653l3.7,2.4 .6,3.4 .5,3.7M862.2,660.3l4.5,.5 1.7,1.8M868.4,662.6l.7,.8 1.6,6.5 7.1-1.6 5.7,3.4 6.9-4.1 5.1,2.8 3.5,4.6M862.2,660.3l3.8,2.6 2.4-.3M868.4,662.6l4.2-.4 5-1.5 0-5.2 3.6-2.3 .4-4.5 5.4,.9 4.1-7M891.1,642.6l.8,3.1 1.4,5.5 -.1,3.7 .1,2.9 4.4,1.3 4.7,5.7 -5.4,5 2,5.2M876.7,696.7l-.5-4.9 5.4-5.8 4.2-2.7 3.8-2.5 3.8-2.1 2.2-.8 2.5-1.8 2,.1M876.7,696.7l-3.2,.8M899,675l1.1,1.2M902.3,706.5l-.7-3.3 3.4-.9 .6-2.3 .8-2.2 2.6-2 1-3.2 3.7-.7M902.3,706.5l-4.7-.4 -2-4.3 -5.3,2.2 -5.8,2.6 -2-2.4 -1.2-1.8 -2.4-3 -2.2-2.7M900.1,676.2l3.7,.2 2.6,.2 2,.9M913.7,691.9l-.7-3.7 -2.1-2.3 0-2.9 .4-4 -2.9-1.5M931.6,650.4l3.7,1.7 3.6,3.3 -2.1,1.4M936.8,656.8l-2,1.3 -.5,3.3 -2,2.4 -2.8,.1 .1,2.9 -2.5,1.5M931.6,650.4l2,2 1.3,2.1 1.9,2.3M936.8,656.8l.9,1.1 1.7-2.4 2.4-.3 2.8-.2 3.8-2M953.2,662.5l-2.8,3.3 -.8,3.4 -3.5,1.6 -4.4-1.2 -3.7-.2 -2.2,.5 -2.9,1.2M932.9,671.1l-2.3-.5 -3.5-2.3M958.4,683.1l-3.7-1.2 -3.2,.5 -1.1,3 -2.2,1.3 -3.1-.3 -3.3,1.8M932.9,671.1l3.2-.4 1.8,2.8 2.3,1.6 2.3,1.7 -.3,3 -1.8,4.1 -.9,2.9 2.3,1.4M1016,589.9l-1.6-1.5 -1.4-2.4 -2-2 -2.4-3 1.5-1.1M1016,589.9l-2.9,2.6 -3.9,3.5 -3.9-.4 -2.2-2.3 -3.9,3.3 -3,6.7 -5.6,.7 -8.1-1.9M1009.3,579.1l-1.4-.1 -1.6-2.8 -3.2-1.3 .1-3.1 -2.5,1.1 -3.6-2.1 -5.3,3.3 -4.8-1.5M982.5,602.1l-2.6-.6M979.9,601.5l0-2.5 .4-2.4 -3.3-1.4 -2.2-1.8 -.9-1.5 1.3-4.2M975.2,587.7l1.2-4.2 3.5,.6 3.1-2.3 .4-3.8 2.4-3.4 1.2-2M1026.9,597.7l-2.4-2 -1.4-2.8M1021.9,591.7l-1.4-1 -1.8-.5 -2.7-.3M1026.9,597.7l.8-.2M974.6,727l3.5,.3 3.4,1.7 .5,2.6 2.4,1.4 3.9-1.6 2.1,2.9 2.4-.8M974.6,727l-3.3,4.8 -5.1-.9 5.9,4 -2.7,4.8 -.6,2.3 .4,4.2 -.4,3.7 -.9,4.7M992.8,733.5l-1.6,3.7 .8,3.3 -4,3.1 -1.1,3 1,2.9 -2.7,3M967.9,754.6l3.7-.6 3.8-.7 3.9-.6 3.6-3 2.3,2.8M969.3,720.3l2.3,2.2 .7,2 2.3,2.5M990.8,706l1.3,2.8 3.4,2.6 1.3,2.7 2.7,1.1 -.2,3.9 1.1,1.7 0,3.3M1000.4,724.1l2.3,2.2 .2,3.1 -4-.7 -1.2,3.5M997.7,732.2l-2.2-.1 -2.7,1.4M956.8,718.4l2.7,.6 -.8,3.6 -2,2.6 2.5,3.7 -.4,4.7 -1,2.5 -7.2,1.2 .2,5.6M956.8,718.4l1.9-2.9 3,1.6M967.1,755.2l.8-.6M999.1,765.6l-1.7-3.2 -3.1-2.4 -2-.7 -1.1-2.7 -2.9-3 -3.1-1.1M1042,684.4l1.8,2.4 .2,2.5 2.5,1.3 .3,3.2M1073.7,692.7l.7,5.4 -.8,.2M1073.6,698.3l-3.2,.6 -5.1,0 -4.3,1.9 -.6-3.4 -4.5-2.3 -3.4,0 -2.9,.5M1049.6,695.6l-2.8-1.8M1051.4,624.5l2.1,1.9 3.8-.1M1051.4,624.5l-5.7-3.5 -.3-2.7M1043.5,616.7l-2.7,.3 -3.2-1.4 -2.1-4.9 .2-.6M1033,604.3l-1.6,.2 -4.4-3M1028.8,598.6l-1.6-.1M1027.2,598.5l-.2,3M1022.5,638.7l4.2-.7 5-2.4 3.1-.9 1.8-2.3 .6-4.8 4.9-.8 4.2-3.4 5.1,1.1M1058.1,627.3l-.8-1M1015.9,619.3l1.8-3.3 2.8-1.4 2.5-2.1 2.3-.5 1.3-2.2 2.3-3.5 -1-2.6 -.9-2.2M1026.9,597.7l.3,.8M1002,619.6l-1.8-2.2 -2-2.9 -1.8-2.4 -2.3-2.2 -1.4-4.3 -3.8-1.1 -3.4,.9 -3-3.3M865.2,748.2l3.5-1.6 1.9-1.6 3.5-2.8M865.2,748.2l-3-5.4 -4.2,.5 -4.2,.7 -1,2.4 -.6-2.9 .4-1.9 -.7-3 -3.7-1.9M874.1,742.2l.1-2.8 .1-3.2 -1.8-1.2 0-3.6 -3.8-2.7 -.4-2.2 -2.2-2.9M848.2,736.7l0-3 1.8-1.6 4.3-1.2 1.6-2.8 4.3-1.2 1.8-2.5 4.1-.8M860.2,762.8l-.9-2 1.6-2.5 1.6-2.9 3.9,.7 -1.3-2 -.8-2.6 .9-3.3M888.4,748.6l-1.3-1.3 -1-2.9M886.1,744.4l-3.4-1.6 -2.5,2.7 -3.7-2.1 -2.4-1.2M841.9,737l3.1-.5 3.2,.2M894.5,726.8l-5.7,1 -3.5-5.6 -4.1-2.9 -4.4,.1 .1-3.5 -1.3-1.6 -3.8-1.1 -3.1-2.5M894.5,726.8l-2.4,1.3 -1.6,2.3 -3,4 .1,2.8 1.2,3.1 .1,3.4 -2.8,.7M868.7,710.7l-2.4,2.1 1.3,3.1 -1.7,2.2 -4-.1 .4,4.5 3.8,1.1M868.7,710.7l-1-3.2M626.9,823.6l-4.3,.7 -2.4,1.7 -4.2-1.5 -2.5,.9M626.9,823.6l.5,2.4 2.2,3 1.5,5.1 6-1.5 2.9,3.3 2.7,1.4 3,.4M620,848.9l-1.1-3.3 -3-4.7 .2-2.9 1.8-3.3 -3,0 -4.2-.8 .3-2.3 -.1-3.7M620,848.9l2.7,.8 3.9-.1 3.3-3.3 4,3.8 2.9-3.8 -.1-2.9 4-3.1 4.7-2M613.5,825.4l-2.6,2.5M645.7,837.7l-.3,.6M665.4,874.8l-3.1-2.3 -3.1-.6 -2.4-3.5 -3.6,.6 -2.6-3.3 .9-4.5 -3.4,1.1 -3.3-.5M644.8,861.8l-1.3-2.7 -.6-1.9 -1.5-2.3 -1.5-1.7 -1.2-4.2 2.6-2.8 2.4-2.6 1.7-5.3M651.6,834.7l-3.1-.2 -2.8,3.2M612.2,805.7l-2.5-1.6 -4.1-.8 -2.3-.3 -2.3,.7 -2.1,.6 -2.2,1M612.2,805.7l-.6,2.1 0,2.6 -2.4,2.1 -.1,4.4 2.8,2.8 1.5,1.7 .1,4M596.7,805.3l2.6,2.9 -1.9,2.1 1.4,3.7 2.6,2.1 -1.1,4.6 -.5,2.5 -4.4,2.1 -.8,3.8M610.9,827.9l-2.3-.4 -3,1.9 -3.3,.4 -2.3,.7 -3.7-.7M594.6,829.1l1.7,.7M590.4,798.8l3.8-2.4 3.1,.2 -2.2,3.8 .6,2.4 1,2.5M577.3,822.2l3.2,.1 1.8,3.9 3.8,.2 0,2.9M594.6,829.1l-3-.2 -1.9,.2 -3.6,.2M619.1,851.2l-3.1-.7 -4.6,.3 -2.2,2.2 -2.6-1 -2.4,2.5 1.4,3.5 -2.1-.8 -3.3,1.7M619.1,851.2l3.5,2.5 3.6,2.9 1.2,2.6 -2.6,3.1 1.2,2.8 3,.8 1,3.2M630,869.1l-2.2,1.4 -1.4,2.2 .3,3.2 -1.1,4.3M596.3,864.4l2.1-3.8 1.8-1.7M596.3,864.4l7.3-1 -.2,7.7 5.3,1 .4,3.7 .3,3.5 .5,3.4 1.2,4.1 3.7,1.2M614.8,888l2.4,.6 3.7-.2 -.1-2.7 -.6-3 2.6-3.2 2.8,.7M620,848.9l-.9,2.3M596.3,829.8l1.3,5.1 3.3,1.2 2.9,3.6 .3,3.3 -4,4.9 -4.4,2.2 .2,5.7 4.3,3.1M644.8,861.8l-3.8,2.4 .3,3.8 -1.5,2.9 -1.2-2.6 -2.1-1 -3.4,.5 -3.1,1.3M650.1,888.7l-1.5-3.8 -2.8-.8 1-2.5 -3.3-2 -4,2.8 -4.5,2.4 -4.4-.4 -5-4.2M586.1,829.3l-2.2,1.6 -3.7,3 -1.6,4.4 .5,5.2 -.5,1.8 -2.6,1.6 1.5,4.5 -3.5,.9M574,852.3l2.5,1.8 2.5,.8 1.2,4 2.9,3.5 3.6,.1 3.3,2.9 3-.8M593,864.6l3.3-.2M612,898.6l-2.7-2.3 1.5-2.4 2.3-2.2 1.7-3.7M579,881.7l2.2-1 2.6-2.8 1.8-3.3 -1.9-3.7 2.8-1.5 3.4,1.7 2.1-3.8 1-2.7M931.6,917.3l2.7,2.5 2.8,0M931.6,917.3l-.7-1.9 -.7-2.6 -2.2-2.1 -1.4-1.8 -.8-3.2 -2.9-1.5M937.1,919.8l1.6-2.4 2.8-.5 .9-2.3 3.1-2.6 1.5-1.3 3.2-.1M922.9,904.2l3.5,.6 6.5-.7 4.4-.7 .7-4.3 3.5,1.3 2.9-1.1 1.4-2.8 1-1.7M950.2,910.6l-.6-1.9 2-2.4 -2.8-1.6 -1.3-3.3 2.2-2 .5-2.6M946.8,894.8l2.9,1.1M950.2,896.8l-.5-.9M920.7,928.8l2.8-1.4 3.3-.6 1.4-4.7 -2.9-2.7 3.2-1.3 3.1-.8M940.7,928.5l-1.8-3.5 -1-3 -.8-2.2M919,902.1l3.9,2.1M969.8,923.2l-3.3,.5 -1.9,2.3 -2.2-2.6 -4.5-.1 .5-4.3 .6-4.2 -5.1,1 -3.7-5.2M933.4,873.1l2.7,1.5 .3,3.6 2.9,.6 5-.3 -4.7,4.3 -.2,6.7 5.2-.6 2.2,5.9M973.5,902.1l-4,2.9 -3.8,2.5 -3.4-1.7 -2-1.6 -3-3.3 -1.4-3.5 -2.1,.2 -3.6-.8M960.5,881.6l1.4,3.4 -2.5,1 -1.3,3.1 -1.1,3.9 -3.7,.8 -3.6,2.1M821.2,364.2l-.8,1.1M816.2,329.1l-2.3,1.6 -4.2-.5 -4.1,1.6 -2.8,.4 -4.5,1.6 -1.7,2.6 -.8,4.8 1.8,4.1M797.6,345.3l.7,3.6 3,1 4.6,0 4.4,3.9 1.8,3.7 5.5-1.3 1.5,5.5 1.3,3.6M784.9,332.8l1.8,1.6 3,1.9 2.1,3.5 -.4,2.3 2.1,3.8M797.6,345.3l-4.1,.6M826.6,378.7l-2.1-1.2 -3.6,.7 -2.1-2.7M820.4,365.3l-2.8,1.7 -.7,2.1 1.7,2.6 .2,3.8M839,396.2l-.7,3.3 0,3.5 -1.9,3.4 -1.8,3 -1.6,3.9M818.6,405.9l2.6,.9 2.8,.9 3,1.4 2.9,.6 2,1 1.1,2.6M818.6,405.9l1.3-3.3 -.7-3.6 -.9-3.3 -.5-1.8 .2-3.9 .1-2.8 .5-5.6 -3.6-3.4M815,378.2l2.1-2.3 1.7-.4M653.1,807.3l-.9-2.3 -1.1-2.2 -.5-4.1M653.1,807.3l-1.7,2.3 -2.5,1.3 -2.6,.8 -2.8-.5 -2.7,.5 -1.7,.7 -4.3-.4 -3.7,1.3M650.6,798.7l-3.9,.8 -2.6,.3 -4.6-.7 -5.6,1.4 -5.4-1.9 -1.4-3.3 -3.2-.2 -2.9-1.9M631.1,813.3l-3.5-1 -.6-2.9 -2.6-2.8 -3-2.6 -2.2-4 1-3.5 .6-2.1M620.8,794.4l.2-1.2M659,814.7l-1.6-2.1 -1.3-2.2 -3-3.1M675.2,783.4l-2.9,.1 -3.2,.5 -2.7,1.8 -3.1-2.3 -3.2-1 -2-1.4 -2.3-.1M655.8,781l-1.5,3.6 -.1,4.1 2.1,2.4 -2.2,2.5 .5,3.1 -4,2M626.9,823.6l-.1-2.6 1.6-3.6 1.4-2.3 1.3-1.8M612.2,805.7l3.1-2.8 2.1-2.4 -.1-2 2.2-.7 1.3-3.4M619.4,787.9l2.2,2.2 -.6,3.1M619.4,787.9l-1.8-6.3 -4.9,.6 -3.2-.5 -2.4-.2 -2.9-1.1 -2.5,2 -2.9-1.3 -1.9,1.8M455.7,611.2l-3.8,1 -2.4,1.6 -2.3-3 1.5,3.3 -.7,2 -4.3,.2 -1.6,2.3M455.7,611.2l.2-3.2 .9-3.9 -.3-2.6 .3-4.2M450.3,588.1l3.4,2.6 -1.4,1.4 -2,2 3,2.2 3.5,1M450.3,588.1l-1.9,3.7 -3.3,1.7 -2.2,.7 -3.3-1 -3.4,.6 -5.5-2.4 -6.3,4.6 -5.3,.3M442.1,618.6l-3.5-.9 -2.5-.9 -4.6,.2 -2.6-.3 -1.7-2.2 -1.8-1.7M425.4,612.8l.9-1.9 1.4-2 -.1-3.1 -.9-3.4 -.9-1.9 -2.5-2.1 -3.2,.2 -1.4-1.9M419.1,596.3l-.4,.4M445.7,643.6l3.7-1.3 3.8-2.3 1.7-2 1.1-3.4 3.4-1.9 1.5-3 4.4,.8M438.9,631.3l2.3-.1 .6-.9M441.8,630.3l.9-1.6 1.2-2.9 0-2.4 .1-2.4 -1.9-2.4M465.3,630.5l3.2-2.5 -.8-3.6M467.7,624.4l-4.5-.2 -1.6-2.5 -1.1-2.2 -.4-1.9 -.8-3 -1-3.1 -2.6-.3M450.1,569.6l1.1,3.4 3.6,2.9 -1.3,3.3 -3.6,.6 -1.2,3.6 0,2.3 1.6,2.4M422.3,559l1.5,7.8 6.1,2.5 1.6,6 -4.4,3.6 -9.2,1.4 1,8.4 -1.6,2.8 1.8,4.8M414,629.9l5.6-2.9 -.7-5.1 -3.6-1.7 -.3-3.4 2.6,.7 1.6-2.7 3.3,.4 2.9-2.4M399.4,597.2l2.8,.2 4,1.8 4.1,.3 1.3-2.3 1.4-2.4 3,1.3 2.7,.6M809.2,646.2l-4.4,0 -1-2.7 -3.1-2.1M803.9,612.5l-3.3,1.9 .3,3.5 -3.3,2.3 0,3.9 0,2.5M800.7,641.4l1.5-2.7 -1.5-2.8 -1.3-2.1 -2.1-3.2 .3-4M796.7,592.8l-2.9-1.5M793.8,591.3l-3.2,.1 -1-2.1 -2.6,.8 -3.2-.2 -1.9,1.5 -1.6,2.2 -4,1.5M776.3,595.1l2.8,4.3 .2,3.7 -.7,2.5 -1.9,3.4 -.5,3.2 -4.1,2.3 1.9,2 .9,3.8M797.6,626.6l-2.6-.4 -2.7-.7 -2.8-1.5 -2.8-1.8 -2.9,.5 -4,2 -4.9-4.4M753,585.7l3.7,.3 2.2,2.7 3.1,.9 2.8,1.4 1.9,.5 2.7,0 3,1.3 3.9,2.3M748.8,627.3l4.1,.6 3.5,2.5 5.1,0 3.1,1.4 .5-3.9 3.9-.9M774.9,620.3l-2.1,3.2 -2.6,.5 -1.2,3M723.8,644.1l-2.2,1.4 .2,3.3 -3.1,2.4 .9,3.6 -1.5,5 1.1,3.5 1.4,1.9M673.6,655.6l0,2.7 .5,2 -1.8,2.4M672.3,662.7l-1.1,4.1 5.1,1.4 1.8-3.9 3.5-.5 2.7,3.2 4.6,1.6 .8,4.1 3.7,.3M693.4,673l4.5-1.6 3.7-.5 1-5.6 7.5,.8 3,2.8 2.8-1.2 2.2-2.1 2.5-.4M956.8,718.4l-3.4-1.8 -2.2-.4 -3.4-.6M938.2,741.2l-3.3-1.7 1.7-3.6 -.7-3.8 -3.4-1.1 -1.6-3.1M947.8,715.6l-1,2 -1,2.1 -1.9,1.6 -2.2,1 -2.6,2.9 -1,2 -4.1,2.6 -3.1-1.9M941.8,688.2l.8,3.6 -1.5,2.1 -1.3,1.5 -3.4-.6 -1.5,4.2M947.8,715.6l-1.7-1.5 -.6-3.3 -1.1-1.5 .1-2.9 -3.9-1.3 -2.3-3 -1.5-.8 -1.9-2.3M913.7,691.9l1.4,2.4 3.2-.5 3.8-.9 2.6,1 1.2,2 2.7,3.4M927.1,668.3l-4-1.3 -1.6,3.3 -3.7,2.2 -2.8,.4 -1.8-.3M908.4,677.5l4.1-1.4 .7-3.5M934.9,699l-3.4,.7 -2.9-.4M823.8,441.2l2.2-1.2 2.8-.7 4-.9 -1.1-2.9 2.5-2.2 3.1-1.3 3.4-1.4M823.8,441.2l-.8,2.9 -3.4,1.8 -.7,4.4 -1.8,3.1M817.1,453.4l2.4,1.4 4.1,.5 -.8,4.4 1.6,3.4 6.2,1.4 -2,6.5 -1.2,5.3 3.1,4.5M843.1,431l1.3,3.3 2.5,4.9 6.2,.4 1.6,6.8 1.1,4 -3.4,5.8 4.8,6 5.3-.3M843.1,431l-2.4-.4M830.5,480.8l4-4.3 8.7,0 4.9-.6 3-5.8 3.6,2.4 2.3-3.5 2.6-2.4 2.8-3.9M862.5,461.9l-.1,.8M794.7,413.9l.4,3.8M794.7,413.9l2.5,0 3-1.6 3.3,0 5.1-4.6 2.3-4 3.2-.6 4.5,2.8M795.1,417.7l2.9,2.7 .7,4.8 4.5,2.8 6.2-2.6 3.3,2.9 3.2,6 1.4,4.7 6.5,2.2M833,413.3l1.8,3.7 .7,2.6 1,3.1 -.3,3.3 2.2,1.1 2.3,3.5M779.2,445.2l1.5,1.2 1.7,1.9 3.3,.8 .2,2.4 3,1 4.8,1.1 1.5,4.1M779.2,445.2l-2.6-4.7 1.9-4 .2-5.3 3.8-4.7 6.1-2.8 .4-5.2 3.7-1.3 2.4,.5M795.2,457.7l1.8-.4 2.6-.9 3.9,1.6 2.6,.2 4.2-1.2 2.9-2 3.9-1.6M887.3,452.6l-1.1,0M886.2,452.6l-5.3-.1 -1.9,3 -5.1,3.6 -2.6,0 -2,.7 -5-1.1 -1.8,3.2M862.4,420.2l-3.7-2.5 -2.3,.7 -2.7,2.5 -4.2,.7 -3.4,1.9 -1.2,3.5 -1.8,4M866.9,470l1.3-2.6 -2.9-1.9 -2.9-2.8M827,499.9l-1.1-3 1-4.4 -3.1-1.9 -1.2-1.7 1.5-2 2.2-1.3 1.5-2.4 2.7-2.4M743.2,430.8l2.6,1 3.2-1.7 3.2,1.5 3.8-.6 2.2,1.8 1.6,2.8 2.4,3.6M735,465.6l2.8,2.4M762.2,439.2l2.6,2.6 2,3.4M766.8,445.2l-2.3,1.7 -2.2,2.9 -1.8,3.6 -1.5,2.5 -.8,4.4M737.8,468l3.6-3.6 .7-2.8 4.5,1.2 2.7-1.3 2.7,.9 1.4,1.5 .6-3.1 4.2-.5M708,496.1l3.4-.5 2.8,1.9 2.9-.7 1.1-2.5 1.7,2.4 4.7,1 2.8,1.2 2.9,.9M730.3,499.8l3.5-1.8 1.8-2.8M737.8,468l0,3.1 2.5,3.8 5.2,5.5 -2.6,5.1 -4.4,.2 -4,2.8 .7,3.3 .4,3.4M779.2,445.2l-1.8,.7 -2.4,1 -3.2,2.4 -2-1.9 -3-2.2M795.2,457.7l-1.6,2.6 -.4,4.7 5.3,6.9 -1.6,5.8 -.3,5.7 -4.4,.6 -1,4.3 -3.6-.1M758.2,460.3l4.1,2.2 -.6,3.5 2.3,.8 1.7,2.7 1.6,5.1 4.1,4.5 1.9,3.8 -.5,3.5M787.6,488.2l-.1-3.7 -2.1-3 -4-1.2 -2.6,.6 -1.9-.6 -2.8,1 -.7,3.2 -.6,1.9M822.6,505.7l-2.9-.1 -2,1.4 -1.9,2.1 .8,2.6 -3.2-2.5 -3.3,.6 -2.9,1.1M787.6,488.2l-1.3,4 2.9,3.3 .4,2.5 2.1,3.6 5.6-.3 7.1,.3 3.3,3 -.5,6.3M735.6,495.2l3,.6 2.1-2.8 3.1,.2 2.4,3.1 .7,2.9 3.4-1.3 5.9-.8M772.8,486.4l-3.5,0 -2,.7 -2.7,2 -4.9,1.4 -2.4,1.7 -1.4,2.2 .3,2.7M155.2,517.5l2.7,4.9 1.5,3.6 3.1,2.5 4.1,1.4 5.7,1.4 3.8,1 -.3,4.6 2.1,2.4M196.3,524.2l3.7,1.5 -1.4,3.2 .8,2.4M199.4,531.3l-3.8-2.5 -1.8-2.2 -3.3,3.3 -6,2.3 -2.7,1.4 -1.4,3 -2.5,2.7M144.7,550.1l4.7-1.6 2.3-4 1.9,1.2 3.6,.8 2.7,2.7 4.7,1.1 5.6,4.5 5.2,1.5M177.9,539.3l.5,1.9 .1,2.9 .3,2.4 1.7,3.2 -3.7,2.6 -1.4,4M279.5,610.4l-2,0 -2.8-.6 -2-.4 -3.3-1.3 -3.2,1.2 -2.6-1.4M288.6,577.1l-4.3,.7 -2.4-.8M263.6,607.9l-3.2-.4 -2.2-2.7 -1.9-2.4 -1.1-3.2M281.9,577l-5.5-.4 -3.6,4.7 0,3.7 -3.5,1.2 -1.4,7.1 -6.1,2.6 -3.7-.2 -2.9,3.5M243.8,629.1l2,.3 2.2,1.8 1.3,1.6 1.9,2.4 3.7-1 1.9,1.5 3-3.1M243.8,629.1l-1.3,5.9 -2.3,3.6 -3.5,1.1 -5.5,1.6 -2.2,1.5 -.2,2.8 -.8,3.8 -3.6,2.3M248.6,658.7l2.5-.7 3.1-.4 1.4-3 .9-3.2 4.5-2.9 1.3-3 3.1-1.9 .4-3.7M248.6,658.7l-2.3,1 -.3,.1M234.4,657.7l-.9-.7 -5.5-2.7 -3.6-2.6M265.8,639.9l-2.7-3.5 -1.7-1.3 -1.6-2.5M254.9,671.3l-1.1-1.7M252.8,667.7l1.1-2.3 -.4-3.3 -2.9,.5 -2-3.9M272.1,640.8l-2.4-1.2 -3.9,.3M215.4,656l3.3-.3 1.6-3.3M220.3,652.4l4.1-.7M263.6,607.9l.9,2.3 2.7,3.7 1.1,2.6 -1.3,2 -2.3,1.8 -3.4,3.4 -1.8,5.5 .3,3.4M175.1,629.1l2.2-3.7 1.5-3.6 1.9-1.6 3.5,1.5 2.3-1.7 .3-3.5M220.3,652.4l4.7-6.7 -2.8-4.6 -.1-4 3.4-2.3 3.1-5.2 -1.2-6.6 .9-9.8 -11.4-4.5M186.8,616.5l.7-5 .7-.6M188.2,610.9l3.3-2.7 4.6-1 2.9,5.5 5.3,1.7 3.2-.8 5.2-5 4.2,.1M159.6,584.2l1.8-1.2 3.9-.1 4.6-1.2 3.6-2.3 4.2-.7 2.8-2.7 2.6,.7M186.8,616.5l1.8-3.8 -.4-1.8M188.2,610.9l-.4-2.2 -.7-5.2 -2-4 3.3-3.3 2.5-5.7 -2.7-9M188.2,581.5l-.3-.7 -3.3-2.8M184.6,578l-1.5-1.3M175.4,556.3l4,.3 .1,3.2 1.3,2.2 .6,1.9 0,3.2 2.5,1.6 2,1.1M185.9,569.8l.2,3.5M183.1,576.7l2-1 1-2.4M243.8,629.1l-1.5-2 -2-4.2 -1.4-2.7 .2-4.5 -4.4-5.3 -4.9-3.4 2.5-4.3 -2.3-7.7M216.9,608.7l1.6-1.3 .5-2.7 -.8-2.3 1.8-2.5 2-4.5 3.5,.7 2.2-1.5 2.3,.4M255.2,599.2l-2.2,.9 -2.1,1.1 -3.7,4.2 -3.8-2.3 -2.7-2.2 -4.3,1.5 -1.2-4.6 -4.5-4.3M230,595l.7-1.5M186.1,573.3l-1.5,4.7M184.6,578l-.3,1.1 3.9,2.4M188.2,581.5l1.3,.9 7.1,4 6-2.9 4.1,2.9 5.1,4.8 9.5-2.2 6.7-1.8M230.7,593.5l1.6-3.5 -3-1.9M228,587.2l1.3,.9M604.2,728.9l-3.5-.2 -4.6,1.3 -4.2-2.3 -4.2,4.3 -4.1-.7 -.3-4 -4.4-.2M604.2,728.9l1.7,3.6 3.8,.7 1.8,2.7 1.3,2.3 -3.6,4 -2.9,1.2 1.1,1.9 1.1,3.5M608.5,748.8l-3.5,1.9 -2.6-1 -1.9,.5 -1.3,2 -1.2,2.4M596.8,754.5l.9-4.1 -1.4-3.9 -3.8-.9 -2.5-3.5 -5.9,4 -2.7-7 -3.2,.8 -2,.6M576.2,740.5l-1.2-3.3 -1.8-2.5 2.7-2.9 1.3-2.4 1.7-2.3M460,673.1l.4-4.5 -1.5-2.5 -1.8-.9 0-3.1 .4-1.8M460,673.1l1,3 2.1,2.6 3.3,.2 1.1,1.8 3.3,1.6M470.8,682.3l1.7-2.3 3.2-1.4 3.5-1.4 -2.2-3.6 .1-3.2 2.4-1.8 2.3-4.3M457.5,660.3l2.3-3.4 1.8-2.6 2.1,2.1 2.5-1.5 3-1.8M481.8,664.3l-3.1-1.1 -2.2-1.4 -2.4-1.2 -.3-3.1 0-3.8M469.2,653.1l1.7,.2 2.9,.4M451.1,657.2l3.7,1.6 2.7,1.5M445.3,682.5l-2-3.1 -3,.5 -3.1-3M445.3,682.5l1.6-3.9 4.1-.7 1.4-1.8 .5-2.6 3.2-.2 3.9-.2M465.3,630.5l3.6,2.8 -.1,5.3 1.8,1.4 -.7,3.2 1.7,2.3 -.3,2.3 -1.2,2.4 -.9,2.9M524.4,530.5l3,1.5 2.1-.7 3.4,1.4 -1.2,2.7 -1,2.3 1,2.1 2.6,.8M594.5,526.4l-2.6,3.2 -2.8,1.4M589.1,531l-3.3-1 -5.3-.6 -.8,4.6M579.7,534l-.1,.5 -2.4,1.8M577.2,536.3l-.1,.1 -3.8-1.6 -6.6,1.4 -5.3,4.4 -5.1,2.2M534.3,540.6l4-1 .5,4.6 3,1 2.6,2.7 1.5-2.5 2.4-.9 4.5-2.1 3.5,.4M643.5,651.5l-.1-2.3 1.1-2.4 -2.1-3.9 -2.2-4.2 -2.2-2.4 .8-4.3 2.5-2.2M643.5,651.5l-3.4,2.6 -2.9,2.8 -2.4-.4 -3.8,.8 -3.1,0 -1.9,.8M626,658.1l-5.2-.1 -3.5-2.7 2.5-5.3 -4.9-5.8 -.1-4.5 -1.6-3 .1-5.6 -.6-5.7M641.3,629.8l-5.1,1.2 -2.9-.9 -3.2,2.6 -5.2-2.1 -5-1 -3-.3 -1.9-2.4 -2.3-1.5M672.3,662.7l-4,.5 -1.7,2.2M666.6,665.4l-3.5-3.7 -3.2,1.7 -1-4 -1.1-4.9 -4.4,.8 -5-.6 -3.5,0 -1.4-3.2M651.6,623.4l-2.3,1.3 -2.4,2.7 -3.9,.9 -1.7,1.5M633.8,572.9l-6.6,7.5 1.1,6.7 -6,2.9 -7,8.3 -4.2,2.9 -7.7,0 -2,9.8 -3.6,5M597.8,616l1.4,3.7 3.3-.3 3.4,1.1 1.8,1.6 3.2-.3 1.8,3.6M557,865.5l4.6-1.1 1.6-4 2.5,2 2.4,.5 .7-2.9 1.9-.8 -1-3.7 2.9-3M557,865.5l-2.2-3.6 -3.8-1M551,860.9l0-1.6 0-3.1 1.2-4.2 2.3-1.9 -4.3-3.7 2.9-6.3 -4.4-.6 -1.1-2.8M572.6,852.5l-.9-4.5 1.1-5.3 -4.1,0 -1.3-5.3 -2.7-1.3 -3.8-.5 -2.5-1.6 -2.7-1.5M555.7,832.5l-4.1,1 -2.3-1 -.3,1.8 -1.4,2.4M557.1,867.9l-.1-2.4M574,852.3l-1.4,.2M528.9,860.6l3.4-1.9M532.3,858.7l2.8-3 3,1.2 1.6,1.8 3.3,.1 2.9,.9 3,0 2.1,1.2M532.3,858.7l-2.6-.9 -1-3.9 -.5-2.1 1.5-2.8 -3.8-3.9 5.3-4.7 2.1-1.9 2.2-3M535.5,835.5l2.8-.1 1.5,2.2 2.5-.3 2.5-.9 2.8,.3M556,831.8l-.3,.7M527,828.8l-3.2,3 -2.1-1.5 -3.1-1.6 -4.5,.8 -2.5,.6M511.6,830.1l-.3,0 -.4,1.8M510.9,831.9l-.3,.9 -1.9,2.4M527,828.8l2.1-2.9 2.4-2 -1.2-3.3 -2.8-2.4 3.2-2.8M508.7,835.2l.9-3.3 1.3,0M510.9,831.9l1.6-.2 -.9-1.6M511.6,830.1l-.7-1.2 .5-4.4 -.9-4.4 -3.7-3 -4.9-1.7 1.4-6.4M530.7,815.4l-3.4,.5 -1.8-1.3 -2.7-3.8 -2-1.6 -1.3-2.9 -2.5-2.8M517,803.5l-4.2,.6 -3.4,1.9 -1.8-2.1 -1.4,1.9 -2.9,3.2M503.5,841l3.3-2.5 1.9-3.3M535.5,835.5l-1.9-1.7 -2.6-3.4 -4-1.6M539.1,809.8l-1.3,2.2 -2.7,1.2 -3.3-.1 -1.1,2.3M476,814l5.9,0 1.8,4.2 3.2-2.8 3.4-.5 3.9-.6 3.8,.6 .5-5.2 2.7-1.8M501.2,807.9l2.1,1.1M532.8,781.3l-2.9,3 -2.5,.8 0,4 -.3,2.2 -2.7,1.7 -1,2.5 -2.3,1.4 -2.6-2.9M518.5,794l-1,4.2 -1.2,3.3 .7,2M437.4,712.1l2.7,3.5 1.3-.2M441.4,715.4l2-.3M443.4,715.1l.3,0 3.5-2.4 2.8-1.1 2.9-2.6 3.2-1.6 1.6-4.2M437.4,712.1l-.1-3.2 -2.8-4 3-.7 1.8-2.3 -3.9-.4 -1.4-2.5 -2-.5M432,698.5l.4-1.3M432.4,697.2l1.8-1.4 .5-3 2.6-1 2.1,.1 2.2,1.6 3.6-1M445.2,692.5l3.4,0 2.4,.2 3.7-.7 0,3.2 -2.1,2.4 2.9,3.5 2.2,1.8M447.3,729l1.9-1 2.5-2.5 2-2.2 2.2,.4 3.4-.9 .3-5 1.5-3.7 -1.5-6.9M437.2,712.7l.2-.6M459.6,707.2l-1.9-4M415.4,708.4l2.7,2.9 .8-.5M418.9,710.8l3.1-2 2-2.8 2.5,.6 2.4-3 1.5-2.1 1.6-3M423.4,684.9l3.5,.5 3.7,2.4 -1.3,3.1 .9,3.2 2.2,3.1M445.3,682.5l3.1,.9 .6,3.2 1.6,3.2 -2.4,1.2 -3,1.5M472.2,685.3l-1.4-3M472.2,685.3l.6,2.7 .8,2.6 -4.6,.7 .3,3.6 -3.1-1.1 -3,1.1 -1,5.9 -4.5,2.1M474.8,717.9l-2,0 -1.8-2.6 -2,1.2 -3.4-.4 -1.4-4 -2.3-1 -1-2.1 -1.3-1.8M474.8,717.9l1.6-2.5 1.8-2.6 3.5-1.3 3.3-1.5 2.5-1.1M487.5,708.9l1.8-3.7 -2.1-5.4 -3.7-.7 -.9-2.6 0-2.5 -2.3-1.6 -1.6-2.8 .2-2M472.2,685.3l2.2,2.9 4.5-.6M1100.1,737.7l.4,3.2 -4.3,1.9 -1.2,2.7 -1.7,4.9 -2.2,3.1 -3.1,1.3 -4.2-.6M1100.1,737.7l-.3-2.3 -2.2-1.5 -1.2-1.9 -1.1-3.7 -2.7-.3 -1.4-1.8 -.1-5.1 -4.1-.4M1087,720.7l-1.5,1.1 -2.6,1.3 -.7,3 -1.1,3 -2.9-.4 -1.9,.2 -2-1.9 -2.8-1.3M1075.7,752.6l2.9,3.3 2.5-2.8 2.7,1.1M1075.7,752.6l1.7-1.3 .9-3.3 -1.3-3.3 .4-2.1 -.9-1.6 -2.8-1.9 -1.6-3.8 -5.4-2.1M1066.7,733.2l2.8-2.5 .2-3 1.8-2M1092.3,776.4l-2.3-1.1M1103,738.6l-2.9-.9M1090,775.3l-3.1-3 1.1-3.7 -.1-4 -2.3-2 1.9-2.1 -.2-2.5 -1.5-2.2 -2-1.6M1090.7,707l.2,3 -2.1,.9 -.3,3.2 -1.1,3.5 -.4,3.1M1053.9,709.9l-1.1-1.3 -.9-2.9 -2.4-1.6 -3.1,.1 1.2-2.1 -1.3-2.9 2.9-1.3 .4-2.3M1053.9,709.9l.8,2.8 -1,3.5 1.6,2.3 1.6,2.8 3.4,.4 2.1,.7 3.8,1.9 5.3,1.4M1048.6,741.7l2.4,3.1 2.4,1.3 4.6,1.1 5.1,2.2 .9,3.6 5.1,.2 -3.8,4.5 -1.5,2.9M1048.6,741.7l2.5,.2 3-1.3 3.8-.9 .7-3.9 1.8-.3 2.8,.3 3.5-2.6M1063.8,760.6l1-1.7 2.8-1.3 1.4-3.1 3.3,.7 3.4-2.6M1045.9,741.5l-1,2.5 -1.5,2 -.9,2.7 -2,1.5 .6,2.9 -2.2,3.2 .8,2.9 0,3.4M1045.9,741.5l-2.7-.2 -2.1-3.5 -3.1-2.5M1038,735.3l-2.8,.5 -3.4-2M1031.8,733.8l-2.5,1 -2.6,1.8 -3,1.2 -.7,1.7 -3.9,1.8 -2.2,1.7 -2.3,2.7M1013.3,757l-1.9-2.3 .2-4.1 .2-3.8 2.8-1.1M1013.3,757l2.6,1.4 3.8,1.3 3.4,1.6 3.7,1.3 .8,4M1027.6,766.6l3.4-.4 2.2-1.9 3.9,1.1 2.6-2.8M1048.6,741.7l-2.7-.2M1053.9,709.9l-1.3,2.2 -3.2,2.3 -1.5,3.2 -2.4,1.5 -4.1,2.4 1.8,5.5 -2.4,2.8 -2.8,5.5M1024.8,716l2.3-.2 2,3 3.2,1.7 -.3,3.4 1.2,1.9 1.9,5.3 -3.3,2.7M1024.8,716l4.4-1.1 .8-3 1.3-6.1 3.5-4.6 4.8-1.3 .3-5.7 3.8,.8 3.1-1.2M1017.2,713.1l3.7,1.3 3.9,1.6M1017.2,713.1l3.3,3.3 -3.9,4.4 -4-1.6 -5.6,.5 -2.7-.3 -2.4,1.2 -1.5,3.5M997.7,732.2l2.1,1.3 3.1-.2 2,1 1.1,3.2 3.3-1.1 3,2.9 1.7,2.3 .6,4.1M1002.6,765l2.4-2.5 3.2,1.9 2.4-3.3 1.8-1.1 .9-3M1027.7,783.6l.8-4.3 -2.3-1.8 -1.7-2.5 .9-3.8 1-2.1 1.2-2.5M1012.1,703l2.4-3.5 .2-3 .9-2.9 .4-2.6 3.1-.2 1.2-1.9M1012.1,703l-1.9,1.4 -2.8-.4 -4.9,1.2 -3.7,.4 -1.3-3.9 -1.8-1.7 -1.4-2.6M1020.3,688.9l-2.9-1.8 -2.5,.2 -3.4,1.6 -2.2-2.4 -1.2-2.9 -.7-3.4 -3.1-1.2 -.9-2M994.3,697.4l2.5-1.7 2.8,.5 .1-3.3 2.1-1.8 .1-5.2 2.7-2.1 -3.3-2.3 2.1-4.5M1017.2,713.1l1-1.8 -1-3 -3.1,.3 -1.9-.9 1-2.8 -1.1-1.9M1041.3,684l-2.6-2.1 -5.4-.9 -2.4-1.7 -3.3,1.2 -3.3-.1 -2,2.5 .5,3.9 -2.5,2.1M993,698l1.3-.6M1002.7,672.8l.7,4.2M955.6,634.2l-.8-1.5M983.3,638.7l-2.4-4.2 1-6.9 -2.7-1.5 -4.1-3 -1.9-3.8 -3.8-.5 1.1-3.8 4.3-4M954.8,632.7l3.6-2.5 2.9-.1 1.2-4.5 3.5-1.7 .4-2.3 1.4-3.2 2.8-4.4 4.2-3M979.9,601.5l-2.7,2.4 -1.6,3.2M975.6,607.1l-.8,3.9M931.6,650.4l-2-3.4M913.2,672.6l2.9-1.9 1.4-1.9 -1.5-4.3 2.6-1.7 -1.7-4.2 -2.8-1.1 -4.7-3.3 .8-6.8M929.6,647l-2.9,.5 -3.1,2.7 -4-.4 -2.2,2.3 -2.8-.1 -1.5-3 -2.9-1.6M954.8,632.7l-2.6-.8 -1-2.2 -2.5-2 -3.2-.6 -4-.5 -3.3,.2 -.4-4.8 -2.9-1.6M929.6,647l0-4.7 4.3-5.1 -4,.1 -4-4.9 4.2-4.6 5.7,1.4 .5-4.3 -1.4-4.5M949.7,534.7l-2.2,1.8 -.7,3.6 1.3,4.2 -3,3.5 -3.2,1.1 -1.2,4.5 2.7,4.5M973.8,542.7l-.1,1.6 2.4-.4M976.4,544.1l1.5,3 -1.6,3.2 -3.4,1.9M972.9,552.2l-2.3,.5 -.3,3.3 -1.2,2.8 -2.2,.7 -2.9,1.8 -5,.3 -.2,1.9 -1.8,2.9M943.4,557.9l3.8,0 1.9,1.2 3.7,2.5 1.5,4.1 2.7,.7M975.2,587.7l-1.7,.3 -2.8-.2 -2.6-2 -2.1-1 -3.7-.4 -1.1-2.5M972.9,552.2l-1.4,4.1 -.6,4.3 1.5,3 3.4,2.4 .5,3.6 3,2.3 4.1-2.7 3.5,1.9M986.9,571.1l.1,1.5M957,566.4l.6,3.2 -1.2,3.9 2.9,.4 3.4,.7 .2,2.8 -.2,2 -1.5,2.5M874.4,570.1l-.4,3.7 -.6,3.9 -1.1,2.5 3.5,3.3 -2.8,4.8 6-2.6 3.8,1M857.9,607.2l3.4,.8 3.2-2.1 2.2,2.5 3.2-1.4 2,.8 2.7,.9M874.6,608.7l2.6-2.1 1.8-4.8 3.3-.5 1.2-4.6 1.4-2.4 1.1-2.5 -1.5-1.8 -1.7-3.3M986.9,571.1l4.8-2.5 2.4-1.7 -.6-5.4 -2.3-4.1 4-.2M794.7,413.9l-.5-4.4 -.3-2.3 -4.2-1.6 -2.6-1.4M815,378.2l-4,1.1 -3.3,.8 -3.5-.2M804.2,379.9l-2.8,2.8 -2.9,2 -7.2,.1 -2.2,5.2 -3.9,6.9 6.7,2.7 -3.5,.2 -1.3,4.4M762.2,439.2l-.8-5.9 -.2-5.7 -2.5-6.6 3.4-4.6 2.1-3.6 5.5-3.9 1.5-3.8 -.7-4.9M787.1,404.2l-2.7-.4 -3.7,.9 -3.6-2.3 -3.7-2.8 -2.9,.6M791.6,644.7l-4-.4 -3.5,2.2 -3.7-2.4 -2.9,1.8 -3-3.1 .1-3M791.6,644.7l-1.5,3.9 -.6,4.5 -2.7,5.5 .2,6.4 -4.1-.8 -4.4,3 -3.9,1.7 .8,5.1M774.6,639.8l-.2,2.1 -.6,2.4 -1.5,1.6 -3.6,.6 1.3,3.2 -3.2,3.2 -1.8,1.7 -1.8,1.9M763.2,656.5l-.3,4.1 -1.1,2.5 1.9,1.6 1.5,2.1M775.4,674l-3.4,.1 -.8-3.5 -3.3,0 -.1-2.2 -2.6-1.6M800.7,641.4l-2.5-.3 -2.9-1.9 -1.8,2 -1.9,3.5M769,627l.6,2.2 0,3.7 1,3.1 1.8,2 2.2,1.8M740,634.6l1.3,3.8 3.1,2.7 5.5,1.2 2.8-4.6 2.9,4.6 4.7,6.6 0,3.1 2.9,4.5M737.2,674l-3.8-.2 -3.2-2.6 -2.3,1.7 -2.2-2M737.2,674l7.6,2 1-7.8 6.4-1 3.6,8.4 1.4-3.5 2.8-1.3 3.1-.1 2.1-3.9M725.7,670.9l-1.8-4 -3.3-1.7M754.5,702.3l1.4-5.9 -.5-.6M755.4,695.8l-3.6-5.6 -4.5-.5 -5.6-.6 .8-3.5 3.4-5.2 -5.6-3.4 -3.1-3M754.1,703.3l-2.7,2.8 -3.5,.7 -2,.8 -2.7,1.2 -2.4-.3 -5.3,1.1 -3.5,.7M754.9,736.2l-3.9,.7 -2.6-2.3 0,2.2 -2.3,2.7 -2.5-1.1 -3.8,.1 -3.1-.4 -3.3-3.4M732,710.3l2.7,3.9 -1,6.9 1.7,3 3.9,.8 -1.1,1.9 -2.4,1.8 -1,4.1 -1.4,2M725.7,670.9l-1.8,7.3 -.1,4.5 3.4,2.6 -2.8,4.5 1.1,3.4 -.7,4.3 2.7,3.7 -5.1,2.6M732,710.3l-3.9-1.4 -3.9,1.8 .6-3.8 -2.4-3.1M741,771.4l-7.3,.7 -1.1-7.1 -2.2-4.3 -2.4-3.2 1.2-5 -3.8-3.6 2.1-5 0-4M727.5,739.9l2.7-2.4 3.2-2.8M655.8,781l-3.2-3 -1.3-2.2 .5-2.5 -.3-2.8 -1.3-1.8 -2.1-2M619.4,787.9l2.4-2.3 .7-3.8 3-2.9 2-2.4 2.6-4.9 .7-3.4 .5-3.5M648.1,766.7l-1.9-3 -4.4,1.6 .6-3.7 -2.4-1.1 -1.9,1.3 -2.9,1.3 -3.9,1.6M608.5,748.8l2.9,2 2.3-1 2.1,.2 2.7,.9 2.6,1.3M621.1,752.2l1.8,2.1 1,1.8 2,2.2 -.7,2.6 2.8,1.6 3.3,2.2M614.7,715.5l3.9-1.4 .1-5.1 4.8-3.8 -.9-7.7 -3.9-1.1 -2.4-2.4 .5-3.3 .1-4.5M614.7,715.5l2.5,5.5 3.9,.7 4.6-.2 4.2-1.3 3.3-.2 1.6,1.4 2.4,1.1 3.4,2.2M640.6,724.7l3.3-1.4M643.9,723.3l-5.1-3.7 -3.5-5.4 6.8-4.9 -2.5-5.5 4.4,.3 .8-5.7 4.1-5.7 -7.6-3.5M641.3,689.2l-1.3,1.8 -3.6,.8 -2.6-.6 -3-.7 -2.1-.8 -1.1-3.2 -5.9-.5 -2.4-2.6M619.3,683.4l-2.4,2.8M604.2,728.9l2.2-2.6 -.5-3.2M605.9,723.1l-.5-3.6 4.2-1.4 3.7,.3 1.4-2.9M621.1,752.2l1.6-4 5.1-5.6 2.1-4 -1.9-7.4 2.7-2.7 3.3-2.4 2.8-.5 3.8-.9M666.6,665.4l-1,3 1.3,1.9 -1.6,2.5 -.4,2 -2,2.5 -1.5,1.4 -5.4,1.3 -1.5,3.5M654.5,683.5l-3.5,2.1 -2.4,2.5 -3.3-1.1 -4,2.2M626,658.1l-2.8,.5 -3.8,1.9 -1.7,3 1.6,2.2 -1.1,3.1 -.7,1.7 .9,1.9 -1.2,3.3M617.2,675.7l1.9,1.1 1.9,1.4 .6,3.9 -2.3,1.3M915.7,739.2l1.1-2.7 2.5-.9 2.9,0 2.3-1.8 1.9-2.7 -.2-3.3M915.7,739.2l-3.6-1.8 -.4-3.6 -4-1.9 -2.5-1.3 -2-2 -2.4-.3 -2.7-3M926.2,727.8l-2.3-3.4 .3-2.9 -1.2-3.1 -3.1-.5M919.9,717.9l-2.8-.8 -3.1-1.5 -4.4-.3 -2.8,.2 -3.5,1M898.1,725.3l.6-2.9 2.3-2 -.7-2.4 3-1.5M915.9,746.4l1.7-3.8 -1.9-3.4M930.9,727.9l-2.2-1.4 -2.5,1.3M894.5,726.8l3.6-1.5M928.6,699.3l-.1,2.4 -2.2,2.6 -.1,2.8 .1,3.1 -2.5,1.7 -.5,1.8 -2,1.2 -1.4,3M902.3,706.5l-1.4,1.6 -1.8,2.8 -2.7,1.9 3.5,2.5 3.4,1.2M840.3,549.5l-2.7-1 -1.9-2.4 -2.9,.7 -3.2-3 -.8,3.9 -3.4,5.4 -3.9-4 -7.3,2.3M807.2,510.9l-1.1,1.9 -1.2,2.2M804.9,515l.1,2.8 .7,4.1 .5,3 -.4,4.4 1.5,7.6 -2.5,8.1 5.5,2.6 3.9,3.8M793.8,591.3l-.6-3.9 .5-5.9 .3-4.8 5.5-.3 -1.3-3.2 2.5-2.7 -2.4-2.7 -3.5-2.4M828.9,581.5l.4-3.4 -1.8-2.9 -2-3.3 -3.2-1 -3-2 -3.9-1.8 -4.5-5.3 2-7M794.8,565.4l-.3-2 .1-2.6 3.7,.8 2.4-3.3 3.1-3.7 4,.5 3,.9 2.1-1.2M812.9,554.8l1.3-3.4M239.6,539.2l-2.7,1.1M239.6,539.2l1.5,5.7M241.1,544.9l.1,.5M241.2,545.4l.3,1.1 3.8,3.5 3.5-5.1 7,3.6 2.5-.6 1-3.7 4.6,1.3 2.5-1.8M236.9,540.3l1,3.1 3.2,1.5M241.1,544.9l.3,.2 -.2,.3M241.2,545.4l-2.5,5.3 5.1,5.1 -1.6,3.1 2.7,3.3 -2.8,2.8 .4,4.8M266.4,543.7l0,3.9 .2,3.6 -2.1,1.4 -1.6,2.5 -.2,4 -1.1,2.3 -.7,2.6M260.9,564l-3.4,3.6 .6,3.4 -4-1.3 -2.7,1.7 -3.1-.7 -2.6-.7 -3.2-.2M274.8,536.6l-3.4,.3 -1.4,2.6 -2.1,1.8 -1.5,2.4M253.1,519.7l.9,2.8 -3.3,1.9 1.2,2.1 -1.8,3.2 -3.9,3.1 -.6,5.5 -3,1.9 -3-1M281.9,577l-.2-4 -2.7-1.2 -2.2-.4 -3.5,.2 -3.4-3.7 -.4-3.1 -4,1.5 -4.6-2.3M229.3,588.1l2.5-3.1 2.4,3.8 4-2.4 -.6-3.5 .7-3.3 1.5-3.3 4.2-2.9 -1.5-3.6M236.5,540.2l-3.6-.5 -3,1.3 -1.2-3.7 -2.2-2.1 -4.5,1.2 -5.1,1.6 -3.2,.5 -2,3.4M236.5,540.2l-.9-3.8 .7-2.1 -1-3.3 -.5-2.6 -1.1-3 -1.2-4.1 -1.5-3.9M221.4,514.9l3,1.2 .5,3.3 2.7-.9 3.4-1.1M221.4,514.9l-4,3.9 -2.3,3.2 1.4,3 2.2,4.9 -4.2,3.5 -1.6,4.4 -2.7-1.1 -4-.5M211.7,541.9l-3.3-1.5M206.2,536.2l.9,1.5 1.3,2.7M228,587.2l-2.2-4.4 -1.1-2.9 -.3-.8M222.3,573.7l-.3-.7 -3.8-3.5 -6-4.6 -3.5-7.2 6.6-6.7 -3.6-9.1M239.7,511.7l-2.6,1.4 -.8,2.4 .2,3.1 -2.5-.8 -3-.4M211.3,491.3l5.3,2.3 4.1,3.2 -3.9,2.9 0,4.6 1.5,3.4 1.2,3.2 1.9,4M199.4,531.3l2.4,1 4-1.2 .5,2.7 -.1,2.4M185.9,569.8l5.2-.8 4.4-6.5 2.1-6.3 4.4-.6 1-4.7 -4-3.4 2.9-5.2 6.5-1.9M500,710.2l.9-2.7 1.4-1.8M502.3,705.7l.5-.5 -.2-2.3M502.6,702.9l-.1-1.6 3.3-5.1 2.9-6.7 -7.9-3.4 .6-2.8 -2.8-3.4M500,710.2l1,.5M501,710.7l1.5-4.4 -.2-.6M502.3,705.7l-.9-2.5 1.2-.3M502.6,702.9l2-.4 .7-2.2 2.4,0 2.5-3.1 3.7-1.3 5.9,2.8M498.6,679.9l1.4-1.6M500,678.3l3.1-1.1 3-.5 5,1.5 2.5,2.4 3.8-.6 3.3,4.2 4,5.9 -3.7,4.4M519.8,698.7l1.2-4.2M487.5,708.9l3.9-.6 2.5-3.1 2.1,.9 .8,3.4 3.2,.7M478.9,687.6l3.6-2.6 2.9-2.5 2.3,.9 3.6-1.9 5.2,1.1 2.1-2.7M474.8,717.9l-.3,3.1 .3,2.1 -1.4,2 -2.7,1.5 1.5,2.9 1.9,2.4M505.1,722l-.7-2 -.9-3.3 -1-2.9 -1.5-3.1M505.1,722l.7,4.4 -.5,3.9 -1.3,1.9 -2.7,1.7 -1.8,2.3 -2.4,.2M474.1,731.9l-.6,2.3 2.5,2.1 4.3,0 2,1.4 6.4,1.6 3.2,1.7 1.5-.9M493.4,740.1l1.6-1 2.1-2.7M481.8,664.3l2.2-3.8 4.1,.6 4.3-1.1 2.5-.6 4.2,1.4 2.5,2.6 .9,3.5M502.5,666.9l1.2,2.7 -1.6,2.6 1.6,2.1 -2.9,1.4 -.8,2.6M505.1,722l1.7,2.5 2.8,1 2.4,0 4.2-1.1 2.8,0 2,.6 1.5,3 2.7-.2M519.8,698.7l2.2,2.6 3.8,1 0,3.2 .5,3.5 .4,3.6 3.2,.2M529.9,712.8l1.9,2.1 -1.6,2.6 -2.5,3 .2,3.2 -.5,1.7 -2.2,2.4M492.1,540.9l4.8,.7 2.7,5 2.9-2.3 2.5,3.2 1.3,6.6 1.6,4.8 2.7,2.8 2.4,3.5M534.3,540.6l-3,.7 -4.9,1.2 -2.8,4.2 1,3.8 .7,2.6 1,4.7 -2.2,3.1 -2.4,3.3M513,565.2l2.3-.4 1.4-2.5 1.7,2.7 3.3-.8M481.5,567.8l3.2,3.8 3.2,.4 2.2,1.5 4.3,1.9 -4,.2 .7,5 -.2,4.3 2.7,1.2M513,565.2l-4.6,5.3 -2.6,2.8 -.7,3.5 0,6.3 -5,.1 -2.6-1.4 -2.1,2.7 -1.8,1.6M456.8,597.3l7.1-1 4,.5 5.5,1.4 5.7-3.4 2-3.8 3.2-2.5 4.7-2 4.6,3.6M493.6,586.1l0,4M605.9,723.1l-7.4,1.1 -.6-8.3 -1.4-2.4 -.6-3.3 -1.9-3.9 -3.2-.9 -6-2.1 -2.8-3.7M616.9,686.2l-6.3-.5 -4,.1 -4.3,4.4 -6.6-.5 -1.1,1.8 -2.3,2.5 -3.7,1.7 -4,1.5M582,699.6l2.6-2.4M447.2,731l3.1,3.3 1.8,1.6 3.3,2.5 3.7,.1 2.9-.3M435.7,772.3l2.5,0 1.3-3.3 2.9-2.9 3,.2M445.4,766.3l2.6-5.9 4.2,2M452.2,762.4l.6,.3 .1-.6M452.9,762.1l.5-2.4 .4-3.3 3.7-1.9 2.3-4.9 -.8-6.1 3-5.3M474.1,731.9l-2.7,1.9 -1.3,1.5 -1.1,2.5M462,738.2l3.3,.2 3.7-.6M483.5,781.2l-1.7-3.1 -.5-2 0-3 -.1-4 -2.9-2.5 -.5-2.4 -.2-2.9M483.5,781.2l1.2,3.2 2.8,1.6 2.2,.1 3.3,0 2.1-3.6M506.8,752.4l-3.8-1.9 -1.8-1.5M506.8,752.4l-3.4,4.2 -3.3,2.4 -3,.8 -.8,2.5 4.6,5.5 -.6,6 -3.6,4.9 -.7,3.3M501.2,749l-3.1,4.4 -5-.1 -3.8,2.9 -4.3-3.8 -.7,4.2 .3,3.8 -3.3-.1 -3.5,.4M477.6,761.3l.2-.6M495.1,782.5l.8-.3M471.6,792.4l3.8,.5 -.2-4.2 -.2-3.7 3.6-1.8 2.3,.1 2.6-2.1M445.4,766.3l4.1-2.8 2.7-1.1M452.2,762.4l.7-.3M452.9,762.1l1.2-.4 3.2,.6 4.3-.4 3.5,1.2 2.1-1.4 4.4,3.6 6-4M501.2,807.9l1.7-2.5 -2.6-3.9 2.3-6.1 0-4.9 -4.2-1.4 -2.9-.3 1.3-3.4 -1.7-2.9M514,753.1l3-.8 3.2-3.7 -1.3-3.9 -3.2-4.6 3-.5 2.6-2.4 4-1.6 2.3-3.8M514,753.1l-2.5-1.2 -2-.3 -2.7,.8M497.1,736.4l-2.1,2.1 -1.7,1.4 .1,.2M493.4,740.1l.7,2.8 3,1.6 2.9,1.5 1.2,3M527.6,731.8l-1.3-2.4 -1.1-1.6M526.2,770.5l-3,.1 -4.1,2.9 -5.1,3.2 -8.3-3.9 -3.1,1.2 -2.3,1.5 -3.6,3.3 -.7,3.2M526.2,770.5l.8-2.4 -1.3-2.9M525.7,765.2l-2.3-.8 -.2-3.1 .6-2.8 -2.4-.5 -3.1-1.7 -2.6-1.2 -1.7-2M469,737.8l2.3,3.3 -1.1,4.6 3.4,1.5 2.1,3.3 -.7,2.9 2.5,3.3 .3,4M518.5,794l-3.7-2.5 -5.5,.7 -1.9-2.8 -2.2-2.1 -1.5-4.2 -4,.2 -3.8-1.1M526.2,770.5l3,1.2 1,1.8 -.2,3.6 1.9,1.3 .9,2.9M1062.2,767.7l2.5,2.4 1.2,1.6 1.4,1.8 3.9,.7 3.8,1.8 1.6,1.2 3.4,.2M1062.2,767.7l-2.1,.9 -3.1,.8 -2,1.7 -1.5,2.5M1052.2,780.3l-.5-2.9 1.8-3.8M1052.2,780.3l2.5,.2 3.4,.1 1,3.8 2.3,3 1.7,1.8 -.4,3 .3,2.6 2.7,2.2M1065.7,797l.8-4.4 3.1-1.9 1-3.2 1.4-4.8 4.1-2.2 .4-2.4 3.5-.7M1090,775.3l-3.7,.8 -1.3,2.3 -2.2,.3 -2.8-1.3M1063.8,760.6l-3.1,3.2 1.5,3.9M1039.7,762.6l2.9,1.7 3.2,.9 2.3,1.7 2.9,.7 .6,2.5 1.9,3.5M1038,788.1l3.2-2.7 1.8-3.3 2.3-.4 2.3-1.7 1.9,.3 2.7,0M1066.4,804.4l-.2-3.7 2.1-1.2 -2.6-2.5M932.8,609.5l-2.3,3.2M932.8,609.5l4.1-1.8 1.2-3.2 1.7-3.2 -1-3.9 -.8-4.3M938,593.1l-3.1-2 -1.5-2.9 -1.4-3 -2.3-2.6 -2.3-4.4 -1.9-4.8 -.4-3.8 -1-3.8M928.3,612.8l2.2-.1M928.3,612.8l-3.9-1.8 -1.9-6.3 -3.2-4.4 -6.4,1 -1.3-3.5 -5-.6 -1.1-3.5M905.5,593.7l-.8-2.7 2.8-5M907.5,586l.6-2.2 .8-2.9 -.7-3 1.5-3.1M909.7,574.8l1.8,.8 3.2-1.2 .7-2.1 -.3-2.8 3,.8 1.7-2.2 3.6-2.5M923.4,565.6l.7,.2M975.6,607.1l-5.2,3.9 -7.5,4.6 -4.9,.4 -4.1-1.2 -4.8,2 -6.9-2.8 -2.1-4.6 -7.3,.1M934.9,620.4l-1.5-1.6 -1.3-2.2 -1.6-3.9M961.2,581.9l-1.6,2 -3.5,2 -6,1.7 -2,4.3 -3,0 -1.7-1.9 -2.2,.7 -3.2,2.4M943.4,557.9l-2.7-2.4 -4,.6 -2.1,3.5 -2.7,1 -1.4,3.6 -2.7-.2 -3.7,1.8M876,567.8l8.3,1.3 4.5,6.8 3.7-5 5.3,1.2 2.1,2.6 3.5-.2 4-1.9 2.3,2.2M882.8,586.7l3.1,2.1 .2-.4M886.1,588.4l1.6-3.1 -1.7,3 .1,.1M886.1,588.4l2.8,2.8 3.7-1.8 .4,3.6 1.8,1.4M894.8,594.4l3.3,.3 1.2,1.6 2.4-2.1 2.1,.9 1.7-1.4M905.5,593.7l.3-.3 2.5-3.3 -.8-4.1M914,547.3l1.5,1.9 1.5,3 1.9,3 0,3.9 -1.6,3.9 4.2,.3 1.9,2.3M926.4,613.4l-2,5.1 -4.8,5.5 -3.6,2.6 1.2,6 -5.1,.5 -3.4,.1 -1.8,3.2 -5.3,3.2M926.4,613.4l-8.8-.8 -1.9,6 -2.1-2.2 -2.4-4.9 -1.4-3.5 -5.5-1.7 -4.1,.5 -2.6,1.2M897.6,608l-4,.8 -2.2-.1 -2.3-.9 -.6,3 -2.4,1.3 -1.1,2.7 .4,2.8M893,639.9l3.3-2 1.3,2.5 4-.8M893,639.9l-1.6-2.9 -.6-2.8 -3-1.9 -.8-4.3 -1.8-2.5M885.2,625.5l-1.2-2.9 -1.2-2.9 2.6-2.1M910.2,647.4l-3-.9 -3.5-2.7 -1.2-2.3 -.9-1.9M928.3,612.8l-1.9,.6M894.8,594.4l1,4.1 3.7,1.6 1.6,2.2 -2,2.7 -1.5,3M874.6,608.7l2.4,1.9 1.9,3.2 3.4,1 3.1,2.8M891.1,642.6l1.9-2.7M850.2,633.6l5,.2 3-3.6 2.7-1.1 3.7,.9 6.2,.5 3.2,4.1 6.3-4.5 4.9-4.6M785.2,357.4l-.5,3.2 .6,1.7 0,2.7M785.2,357.4l-2.1-2 -4.1,1.3 -3-1.2 -2-4.2 -2.1-3.2 -4.3-.9 -3.4,2.7 -2.9-1.7M785.3,365l4.5,4.5 -5.5,3.9 -5.3-.1 -3.3,3.1 -1.7,4.3 -6.4,1.5 -4.3,1.9 -6,5.3M761.3,348.2l-2.8,.5 -2.8,3.3 -.5,4.7 -3.1,1.4 -1.9,7.1 -5.2-.4 0,3.8M745,368.6l0,1 1.5,4.4M746.5,374l3.6,1 .7,3.1 .2,1.7 -1.9,.9 -1.7,2.9 .5,2.2 1.9,2M749.8,387.8l3.8,1 3.7,.6M793.5,345.9l-3,1.2 -3.9,1.3 -1.2,3.9 -.2,2.9 0,2.2M804.2,379.9l-3.5-.2 -2.5-1.6 -.8-3.7 3.1-4.1 -3.6-3.4 -4.7-3.5 -4.6,.2 -2.3,1.4M759.6,340.2l-1.3,3.3 2.1,2.6 .9,2.1M770.5,400.2l-3.2-.7 -3.6-2.6 -2.3-2.8 -2.3-.3 -2-1.4 .2-3M721.6,348.8l3.5,3.5 3.2,1.6 .6,6.4 4.7,4.8 3.8,1.1 4.8-3 2.5,4.2 .3,1.2M745,368.6l1.5,5.4M732.6,400.7l2.9,.8 3.1-.2 -.3-5.7 3.9-2.1 2.4-1.2 2.6-1.8 2.6-2.7M693.4,673l-1.6,6.3 .3,3.9 -3.5,3.9 -2,3.8 2.6,2.5 1.3,1.6 2.7,3.7 -.3,6.1M722.4,703.8l-2.6-1.5 -3.7-.7 -3.1,1.7 -1.1,2.3 -2.9-.4 -2.1-.7 -2.4,2.7 -1.1,2.5M692.9,704.8l2.4,1.9 .7,2.7 .3,1.8 3.6-.9 3.5-.6M654.5,683.5l3,1.6 2.4,2 2,3.5 1.6,3.7 7.7,5.1 -4.2,9.1 7-2 3.9,4.9M692.9,704.8l-3.1,1.1 -2.3-.4 -3.9,.8 -2-3.1 -2.9,1.8 1.9,3.8 -2.7,2.6M727.5,739.9l-2.6,.3 -2.3-2 -3.3,1.1 -2.6-.5 -3.6,.3 -1.8,3.3 -2.6,0M703.4,709.7l-3.2,4 -1.8,3.8 3.4,3 2.2,2.8 .2,6.6 -2.1,6.7 2.4,3.4 4.2,2.4M765.5,519.5l5.9,1.8 3.5-5 2.8,2.7 3.2,.9 2.7-2.3 5.6,.6 3.4,.9 2,1.6M765.5,519.5l-2.9,5.3 -2.1,2.8 -11.8-.6 -2.4,8.8 -4.5,2.9 -3.3,5.1 -1.7,1.2M736.8,545l-.3,.2 -1,4M794.6,520.7l-.1,3.9 -3.3,2.6 -1.1,5.1 -3.9,2 -6.1,2.1 -3.8,3.8 1.6,5 -2,7.4M775.9,552.6l-5.9-.7 -4.4,1.8 -7.8-3.8 -2.2,6.3 -5-3.1 -3.4,4.1 -3.3,7.4 -8.9-3.2M735.5,549.2l-1.6,2.4 -1.3,1.8 .4,2.9 .2,1.7M733.2,558l1.7,3.3M756.2,497.1l2.4,2.8 3,2.5 -.5,3.8 -.9,3.8 4.2,0 2.8,1.3 -.1,4.2 -1.6,4M804.9,515l-2.5,2.2 .2,3.5 -2,1.2 -2.2-.1 -3.8-1.1M730.3,499.8l-.7,10.9 -5.1,5.1 .5,5.8 6.6,7.7 2.4,3.5 1,6.9 1.8,5.3M736.8,545l.1,.1 -1.4,4.1M794.8,565.4l-2.6-2.6 -2.9-1.2 -.8-3 -3.8-2 -2.8,2 -2-4.7 -4-1.3M737.7,569.6l-.8-3.1 .3-3 -2.2-2.1M708.3,549l2,1.7 2.6,1.9 3.9,2.5 0,3.9 2.6-2.9 3.7-2.4 4.6,1.3 5.5,3M683,596.5l13.4-4.4 6.6-5.8 5.9-10.2 2.1-6.4 7.4-3.1 7.9,3.2 4.6-4.5 4-4M538.2,735.1l.9-4.4 1.3-2.8 3.3,.2 4.5-.2 2.3-.6 2.6-2.6M538.2,735.1l2.1,.5 2.1,2.7 -1.9,3.8 -1.6,2.9 2.7,2.3 .3,2.2 2.4,1.6M553.1,724.7l2.9,3.1 1.9,2.7 .2,2.5 5.5,1.2 2.6,3.7 -.5,3.2 0,4.1M544.3,751.1l3,.3 3.1,.1 4,1.5 1.1,2.3M565.7,745.2l-2.3-.2 -3,1.8 .8,4 -1.4,3.9M555.5,755.3l4.3-.6M525.7,765.2l3-2.4 3.8-3.3 5.8-.1 2.6,2.5 3-3.1 5.3-1.6 -5-2.5 .1-3.6M527.6,731.8l3,1.9 2.1-.5 1.9,.9 3.6,1M545.1,780.9l2.6-2.9 1.3-2.3 -1.8-2.7 -3.6-4.8 2.3-6.5 5.9,1.5 .7-5.7 3-2.2M571.3,767.8l-1.1-1.9 -.4-2.5 -1.4-3.8 -2.2-1.6 -2.3-.9 -2-1.5 -2.1-.9M576.2,740.5l-1.8,2.3 -2,.4 -2.5,1.6 -4.2,.4M554.3,721.8l.1-2.7 -2.3-1.3 .7-3.2 -2-1.2 -2.1-1.4 -1.8-1.2 -3.2-2M554.3,721.8l1.7-3.5 -.7-2.8 5.2,4.1 3.4-4 3.5-.1 2.5-.4 2.6-1.5M572.5,713.6l3.6-2.5 -1.7-2.3 1.9-2.2 .1-3 .9-2.5M543.7,708.8l1.2-3.7 -.1-2.2 .9-3.7M574.7,699.2l2.6,1.9M574.7,699.2l-6.9,1.8 -2.1-4.9 -2.6-1.6 -1.8-1.3 -3.3-1.6 -3.5,.1 -2.2,1.5M552.3,693.2l-2.1,2.1 -.4,2.2 -4.1,1.7M529.9,712.8l2.9-1.5 1.9-1 3.3,2.5 3.9-1.2 1.8-2.8M553.1,724.7l1.2-2.9M578.9,727.1l-1.4-1 -2.7-1.4 -1.8-3 1.5-4 -1.5-2.3 -.5-1.8M582,699.6l-3.5-.3 -1.2,1.8M521,694.5l2.7-2.2 1.7-1.3M525.4,691l1.9,1.8 2.7,2.2 3.1,2.3 2.9-.7 2.3-.1 2.5,2.1 2.5,.8 2.4-.2M525.4,691l3.1-2.5 3.5-2 -.6-2 -1.5-2.4 .7-4.4M550.6,686.9l-.9-3.1 -4.5-2.1 -2.1,2 -3.9-.1 -3.5-1.8 -2.3-1.1 -2.8-3M550.6,686.9l1.8,3 -.1,3.3M589.1,531l-9.4,3M579.7,534l-2,.6 -.5,1.7M577.2,536.3l-4.6,14.9 -2.1,9.1 1.8,6.9 5.3,6.2 1.1,5.8 -7.8,4.6 1.2,8.5M572.1,592.3l5.3,.6 5.7,7 -2.1,4.3 -.7,4.5 2.3,2.5 4.5,0 3.9,3.5 6.8,1.3M662.4,730.3l5.2-.1 .1,.3M667.7,730.5l1.7,4.1 .1,4.4 -3.5,3.1 -1,4 -.6,2.8M662.4,730.3l4.4,0 .9,.2M667.7,730.5l2.1,.4 1.9-3 -.3-2.1 .2-2.9M671.6,722.9l8.9-1.5 1.1,8.9 4.9,2 7.6-3.3 .3,7.6 7.8,1.7 1.6,4.5 2.8,1.5M674.6,753.6l5.1-.3 4.1-4.9 4.1,.2 2.8-2.6 5.4,1.6 3.2-1.6 2.9,1.8 3.9-2.5M674.6,753.6l-1.5,1.2 -2.2,1.8 -3,1 -1.3-3.7 -1.6-2.2 -.6-2.8M706.1,745.3l.5-1M648.1,766.7l2.5-3.6 2-3.9 3.3,0 3.3-2.8 .4-2.6 2.1-1.8 2.7-3.1M643.9,723.3l.6,3.6 1.6,2.1 3-.3 1.5,1.7 1.6,2.9 3.5,.3 3.3-3.7 3.4,.4M677.9,711.4l-3.5,.1 -1.6,1.3 -1.7,3.8 .2,3.7 .3,2.6M708.7,742.4l-2.1,1.9M706.8,766.6l.7-1.9 2.6-2.5 1.1-2.9 -.6-4.3 -1.2-2.2 -.2-3.8 -1.5-1.9 -1.6-1.8M684.7,774.8l2.4-2.5 1.4-2.4 -3.9-1.9 -.1-5.8 -4.3-.9 -3.6-.5 -2-2.8 0-4.4M467.7,624.4l1.7,2.4 3.3,.7 1.7-1.6 3-.6 1.1-.3M478.5,625l2.2-.5M493.6,590.1l.7,1.9 2.6,2.3 .4,3 -.1,2.1 .4,3.6 2.9-.2 2.6,1.6M503.1,604.4l-3.6,3.4 -3.3-.1 2.1,3.3 -2.2,6.1 -3.8,1.5 -5.7,.9 -2.3,4.5 -3.6,.5M473.8,653.7l4-2.2 1.3-2.7 2.1-1.6 1.1-2.6 .9-1.3M483.3,643.2l1-1.4 .8-1.7 2.1,1.3 2.4,1.3M480.7,624.5l-2.1,.4 -.1,.1M478.5,625l-1.5,2.6 3,2.8 -1.5,4.5 1.8,4.3 2.9,4.1M483.3,643.2l1.7-4 4.6,3.5M513.5,604.2l3,5.7 2.8,3.9 4.8,2.4 3.7-1.9 5.8,.7 5.3,1 3.5-1.5 2.7-2.7M513.5,604.2l5.1,.8 5.7-5.3 3.7-3.2 4-2.4 -.3-3.2 .3-2.5 3.2-3.1 -.1-4M545.1,611.8l2.3-2.4 1.8-1.2 1.6-2.7 1.1-2.6 1.9-2.4 1.9-4.8 2.4-4M535.1,581.3l2.7,1 2.7,.1 2.3-1.3 3.3,.9M546.1,582l2.5,1 3.3,1.5 -1.8,4 2.7,3.3 2.5,.1 2.8-.2M521.7,564.2l1.9,2.5 1.5,2.8 2.5,.4 1.1,3.7 -1.8,4.2 2.9,2.8 2.4,1.6 2.9-.9M503.1,604.4l1.9,.8 3.2,1.2M508.2,606.4l2.1-.5 3.2-1.7M556.3,542.8l-5.2,5.3 -1.3,6.8 0,7.4 6.6,5.8 -2.2,3.9 -3,5.1 -3.1,3.1 -2,1.8M572.1,592.3l-3.7,1.9 -2.9-1.2 -3.3-.3 -4.1-1M617.2,675.7l-2.8-3.2 -5.1-4.7 -3.5-2.2 1.4-5.2 -4.5-3.5 -6.7,3.1 -3.8-1.6 -5-4.5M597.8,616l-1.9,2.9 -.9,2.8 -3,.7 -1.8-.6 -1.3,3.3 -2.5,1.2 -1.1,5.1 -.6,3.1M584.7,634.5l2.3,3.4 2.7,3.5 .3,5.3 3.2,2.9 -3.2,2.8 -2.8,1.5M584.6,697.2l-.9-7.5 -5.4-2.1M578.3,687.6l-4.1-1.5 2.7-1.6M576.9,684.5l2.9-1.6 -1.8-6.2 .9-6.3 3.6-3.1 -.9-4.8 2.7-4.4M587.2,653.9l-1.8,1.8 -1.1,2.4M574.7,699.2l4.6-1 0-4 0-4.3 -1-2.3M578.3,687.6l-1.4-3.1M576.9,684.5l-.1-.3 -5.6-3.7 -3.9-.7 1-5.9 -2.6-3.3M584.3,658.1l-3.1,.7 -2.5-1.1 -3.2-.2 -1.6,1.1 1.1,3.3 .5,5.5 -6.4,.4 -3.4,2.8M550.6,686.9l1.5-1.1 .8-2.9 -.7-2.3 -2-1.6 2.8,.6 1.9-3.1 2.1-2 -.3-4.2M556.7,670.3l2.6,.2 2.9,.1 3.5,0M502.5,666.9l1.1-1.5M489.6,642.7l4.2,.7 2.9,0 1.8,3.1M503.6,665.4l-1-3.7 -2-2.7 0-2.2 -2.3-2.7 -.7-3.1 .9-4.5M508.2,606.4l-.9,3.6 .5,2.4 .5,4.1 4.8,3.4 -.2,5.2 1.4,2.4 1.8,2M498.5,646.5l1.3-3.5 2.1-1.8 3.4-1.2 5.6-.9 4.5,.1 .8-5.2 -.1-4.5M548.3,632.8l1.6,1.7 1.9,1.4 3.5,.7M548.3,632.8l-2.3,2.2 .5,3.2 -3.2,2.1 -3.3,.8 -2.9,0 -1.9-3.1 -3.2-.4 -3.7-.7M555.3,636.6l-.3,3.3 1.2,5.3 -2.5,4.6 1.1,3.3 -.1,4.7 -1.4,2.4 -2.5,1.8 -2,.9M528.3,636.9l0,3 1.5,2 .2,3.4 1.6,2.8 .9,2.4 -.8,4.5 .4,8.5 -7.4,.2M548.8,662.9l-2.9,1.8 -4-.6 -2.2-.3 -3.1-1.1 -5.1,1.5 -2.1,3.1M529.4,667.3l-2.8-2.4 -1.9-1.2M545.1,611.8l-2.3,2.3 .2,3.9 -2.9,3.2 2.7,3.9 1.5,2.5 2.5,.7 -.7,2.1 2.2,2.4M584.7,634.5l-5.9-.4 -3.8-.3 -3-1.5 -2-3.2 -2.6,2.1 -3.7,2.7 -4.1,.6 -4.3,2.1M516.1,629.5l4.3-.4 0,3.9 3.2,2.8 3.1-.3 1.6,1.4M556.7,670.3l-.7-2.2 -2.6-1.1 -2.1-.7 -2.7,.2 .2-3.6M503.6,665.4l2.4-3.1 4.9-2.9 3.8,.7 1.4-2.2 3,.8 1.5,1.4 .2,2.9 3.9,.7M530.6,677.7l-1.5-1.2 -1.3-2.9 1.5-3.7 .1-2.6" fill="none" stroke="#7c7c7c" stroke-width="0.8" stroke-linejoin="round"/>
<path d="M344.8,426.0 350.4,428.8 359.7,426.9 366.2,427.8 372.7,415.8 376.4,412.1 380.1,416.7 385.7,419.5 394.9,429.7 403.3,439.9 407.9,451.0 414.4,459.4 421.8,468.6 426.5,466.8 429.3,470.5 429.3,476.1 425.5,481.6 424.6,489.1 414.4,490.9 404.2,493.7 395.9,487.2 385.7,483.5 376.4,484.4 369.9,490.9 363.4,483.5 360.6,474.2 357.8,468.6 350.4,464.9 354.1,461.2 353.2,442.7 349.5,430.6Z" fill="#e3c9ff" stroke="#a99abb" stroke-width="0.5" stroke-linejoin="round"/>
<path d="M842.0,672.9 844.7,678.0 847.8,682.7 845.9,685.8 849.8,692.4 844.7,698.3 842.0,706.1 840.8,711.2 843.9,716.2 848.2,721.7 844.3,726.4 838.4,722.5 833.8,722.1 830.6,724.1 828.3,717.8 822.0,711.2 817.3,710.0 814.2,711.2 812.7,709.2 815.8,706.1 818.9,704.5 808.4,705.3 809.9,701.4 818.5,703.8 818.5,695.9 819.7,688.5 824.0,688.9 832.2,681.1 836.9,679.5Z" fill="#e3c9ff" stroke="#a99abb" stroke-width="0.5" stroke-linejoin="round"/>
<path d="M404.2,493.7 414.4,490.9 417.2,503.9 414.4,509.5 407.9,503.0 404.2,496.5Z" fill="#b96dff" stroke="#9a66cc" stroke-width="0.5" stroke-linejoin="round"/>
<path d="M431.1,511.3 433.9,505.8 443.2,506.7 448.7,505.8 456.2,504.8 458.9,511.3 458.9,518.7 469.1,519.7 474.7,515.0 478.4,509.5 485.8,505.8 493.3,510.4 500.7,511.3 501.6,520.6 495.1,526.2 489.6,527.1 478.4,533.6 471.0,539.1 469.1,546.6 476.6,554.0 479.4,562.3 491.4,565.1 489.6,567.0 480.3,565.1 473.8,570.7 471.0,577.2 466.4,573.5 463.6,563.3 458.0,555.8 455.2,567.0 454.3,578.1 450.6,585.5 446.0,582.7 445.0,578.1 433.0,573.5 426.5,572.5 419.1,577.2 413.5,572.5 408.8,568.8 411.6,563.3 420.9,559.6 426.5,550.3 431.1,542.9 435.8,537.3 433.0,529.9 433.0,520.6Z" fill="#b96dff" stroke="#9a66cc" stroke-width="0.5" stroke-linejoin="round"/>
<path d="M718.7,401.7 724.6,397.6 726.3,401.7 733.9,400.5 735.1,397.6 745.1,397.6 760.3,393.5 766.2,394.6 770.9,391.7 777.3,394.1 782.6,392.3 789.6,394.6 794.9,399.3 784.9,404.0 777.9,408.7 783.2,413.4 782.0,426.9 787.3,436.8 780.2,440.4 774.4,443.3 767.9,440.9 761.5,439.8 756.8,442.1 753.9,448.0 755.6,449.7 753.9,456.2 745.1,463.8 741.0,460.9 741.0,456.2 736.3,458.5 728.7,462.6 724.0,467.9 718.1,463.2 715.8,469.1 714.6,479.6 712.9,478.4 707.0,460.9 704.1,446.8 709.9,443.3 711.1,431.6 719.3,430.4 729.8,430.4 733.4,425.7 741.6,421.6 740.4,416.9 735.1,417.5 728.7,411.6Z" fill="#b96dff" stroke="#9a66cc" stroke-width="0.5" stroke-linejoin="round"/>
<path d="M567.1,539.2 575.4,529.9 582.8,527.2 588.4,530.9 591.2,536.4 601.4,539.2 609.7,540.1 612.5,542.9 614.4,537.4 620.9,535.5 624.0,529.9 629.2,525.9 636.6,520.3 640.7,516.6 637.6,511.4 633.8,508.6 628.3,504.9 621.8,499.3 626.4,492.8 634.8,488.2 642.2,487.3 646.8,480.8 652.4,484.5 658.9,491.0 666.3,499.3 675.6,504.9 684.9,508.6 691.4,508.6 693.2,518.8 703.4,516.0 714.6,516.9 722.0,519.7 734.0,523.4 731.3,530.9 725.7,539.2 718.3,539.2 710.8,544.8 701.6,555.9 696.0,563.3 684.9,571.7 683.9,576.3 679.3,578.2 666.3,583.7 663.5,587.4 661.7,602.3 658.9,609.7 658.9,616.2 653.3,612.5 652.4,606.0 638.5,594.9 636.6,592.1 623.6,577.2 619.0,577.2 612.5,581.0 609.7,585.6 606.0,582.8 601.4,572.6 602.3,568.0 606.0,561.5 597.7,553.1 594.9,546.6 582.8,545.7 573.6,542.9Z" fill="#b96dff" stroke="#9a66cc" stroke-width="0.5" stroke-linejoin="round"/>
<path d="M639.4,635.7 645.9,635.7 650.5,640.3 646.8,645.0 640.3,647.7 636.6,642.2Z" fill="#b96dff" stroke="#9a66cc" stroke-width="0.5" stroke-linejoin="round"/>
<path d="M709.9,443.3 727.5,438.6 736.9,444.5 747.4,450.3 755.0,448.6" fill="none" stroke="#9457d6" stroke-width="0.8"/>
<path d="M639.4,504.9 644.1,502.1 647.8,504.0 647.4,508.6 643.1,511.8 639.4,510.5Z" fill="#fff" stroke="#999" stroke-width="0.5" stroke-linejoin="round"/>
<path d="M687.7,295.6 693.1,293.3 699.4,294.1 707.2,290.6 708.8,295.6 715.0,297.2 716.6,305.0 722.8,312.0 727.5,310.5 733.8,317.5 738.4,317.5 747.8,323.0 752.5,324.5 762.7,320.9 765.0,325.3 755.6,328.4 740.0,330.0 740.0,334.7 735.3,334.7 730.6,333.9 722.8,341.7 719.7,348.0 707.2,351.1 708.8,356.6 716.6,369.1 719.7,376.9 718.9,386.2 712.7,393.3 700.2,390.2 696.2,395.6 686.9,398.8 680.6,403.4 672.8,406.6 665.0,406.6 665.0,413.6 654.1,412.8 641.6,418.3 636.1,423.8 632.2,420.6 627.2,413.6 629.8,403.4 642.3,405.8 654.8,398.0 658.8,400.3 659.5,389.4 663.4,384.7 674.4,384.7 679.8,380.8 680.6,361.2 675.9,362.0 671.2,365.9 667.3,359.7 668.9,353.4 666.6,340.9 669.7,338.6 679.1,340.2 676.7,330.0 681.4,326.9 687.7,326.9 693.9,322.2 693.1,315.9 689.2,311.2 684.5,308.1 685.3,301.9Z" fill="#7f00ff" stroke="#6a00dd" stroke-width="0.5" stroke-linejoin="round"/>
<path d="M652.5,347.2 655.9,345.9 658.8,347.2 658.0,350.0 654.1,350.3Z" fill="#7f00ff" stroke="#6a00dd" stroke-width="0.5" stroke-linejoin="round"/>
<path d="M680.6,361.2 685.3,356.6 691.6,345.6 696.2,344.1 700.2,348.8 707.2,351.1" fill="none" stroke="#a060ff" stroke-width="0.6"/>
<path d="M160.7,170.7 163.9,167.9 171.9,165.1 178.2,166.7 182.2,164.7 191.8,165.1 199.0,166.7 202.9,169.1 210.1,169.9 215.7,173.9 216.9,178.7 214.1,182.7 209.3,185.1 208.5,188.2 209.3,194.6 210.9,200.2 217.3,205.0 218.5,208.2 215.7,211.0 207.7,212.2 202.9,213.7 196.6,216.9 191.0,213.7 179.8,209.8 171.9,205.0 170.7,201.8 173.5,194.6 171.9,192.6 166.3,189.8 162.3,181.9 160.7,175.5Z" fill="#e1f2fe" stroke="#454c54" stroke-width="1.15" stroke-linejoin="round"/>
<path d="M102.5,453.8 104.1,446.7 107.2,438.1 111.9,431.1 116.6,426.0 124.4,424.8 132.2,424.5 140.8,426.0 147.0,429.5 150.2,435.0 150.5,439.7 152.5,441.2 150.9,445.9 152.5,452.2 151.3,458.4 152.5,466.2 152.5,472.5 147.8,477.2 140.0,479.1 130.6,478.8 124.4,476.4 122.8,471.7 117.3,469.4 113.4,466.2 111.1,460.8 107.2,456.9Z" fill="#e1f2fe" stroke="#454c54" stroke-width="1.15" stroke-linejoin="round"/>
<path d="M207.3,573.0 210.0,573.0 214.2,575.7 220.3,573.7 223.7,573.7 224.4,579.2 223.7,586.0 215.5,588.7 208.7,588.0 205.7,585.3 207.3,580.5Z" fill="#e1f2fe" stroke="#454c54" stroke-width="1.15" stroke-linejoin="round"/>
<path d="M216.9,670.8 222.4,664.0 229.2,658.5 236.0,657.4 242.2,658.2 244.9,656.4 246.3,660.5 251.1,664.7 253.8,669.4 253.8,676.3 251.1,683.1 247.0,687.2 240.1,689.3 236.0,693.4 229.2,690.6 222.4,684.5 218.3,677.6Z" fill="#e1f2fe" stroke="#454c54" stroke-width="1.15" stroke-linejoin="round"/>
<path d="M243.4,382.1 246.9,381.5 250.8,383.1 247.3,385.6 246.1,388.4 246.5,395.0 243.8,397.3 242.2,400.9 242.2,403.6 240.2,403.4 235.4,397.9 237.5,395.0 237.5,393.0 240.4,391.9 240.6,386.4Z" fill="#e1f2fe" stroke="#454c54" stroke-width="1.15" stroke-linejoin="round"/>
<path d="M383.0,845.0 387.0,844.4 391.0,848.0 393.0,853.0 391.0,856.5 386.0,857.0 382.5,853.0 381.5,848.0Z" fill="#e1f2fe" stroke="#454c54" stroke-width="1.15" stroke-linejoin="round"/>
<path d="M397.5,865.0 400.5,865.0 401.6,869.0 400.0,873.5 397.0,873.0 395.8,869.0Z" fill="#e1f2fe" stroke="#454c54" stroke-width="1.15" stroke-linejoin="round"/>
<path d="M734.6,35.5 739.5,45.6 764.0,108.7 778.6,143.3 788.4,178.4 798.6,200.0 803.4,219.5 809.3,248.8 816.1,278.1 828.8,307.4 832.7,336.7 840.5,362.1 848.8,381.0 857.6,401.5 869.3,421.0 883.0,446.4 896.6,466.0 909.3,480.6 922.0,495.2 935.7,510.0 949.4,524.5 968.9,540.2 980.0,545.9 991.7,553.7 999.5,561.5 1007.3,577.1 1019.0,588.8 1032.7,602.5 1033.7,608.4 1046.4,619.1 1065.9,631.8 1083.5,640.6 1097.2,646.4 1105.0,649.4 1107.9,647.4 1108.9,661.1 1109.9,672.8 1108.9,681.6 1116.7,690.4 1136.3,701.1 1148.0,710.9 1172.5,720.0" fill="none" stroke="#333" stroke-width="1.15" stroke-linejoin="round"/>
<path d="M83.5,693.7 88.6,705.4 94.4,716.1 99.3,717.1 107.1,715.2 114.9,713.2 122.7,713.6 132.5,720.0 140.3,725.9 145.2,732.3 154.0,735.7 161.8,741.5 169.6,752.3 179.4,758.1 189.1,764.0 198.9,767.9 208.7,779.6 216.5,792.3 224.3,810.9 229.2,828.4 231.1,846.0 232.4,852.6 238.5,854.5 259.0,865.9 278.6,878.6 298.1,893.2 313.8,909.8 329.4,926.4 345.0,947.0 356.7,966.5 368.4,987.5" fill="none" stroke="#333" stroke-width="1.15" stroke-linejoin="round"/>
<path d="M1042.5,621.5L1045.5,617.5M1084,641L1084.6,644M1096.8,645.6L1098,647.2M1107.6,650L1108.6,651.5M1108,660.5L1109.3,662M1110,672.5L1111,674M1133.5,708.5L1136,701.5M845,386.3L849,381.6M866.5,422L870,420.2M903.5,479.6L909,478.6M906,484L910.5,481M933,511L936,510M828.3,307.4L829.6,308.4M763,113.5L766,115M776.5,143L779,143.6M227.8,822.5L229.5,827M216,791L217.3,794" fill="none" stroke="#222" stroke-width="1.7" stroke-linecap="round"/>
</g>
<g stroke="#000" stroke-width="1" fill="none"><path d="M153.5,35.5V987.5M680.5,35.5V987.5M83.5,731.5H1172.5"/></g>
<g fill="#000" stroke="none">
<rect x="153.5" y="26.5" width="527" height="9"/><rect x="153.5" y="987.5" width="527" height="9.5"/>
<rect x="73.5" y="35.5" width="10" height="696"/><rect x="1172.5" y="35.5" width="10" height="696"/>
</g>
<g stroke="#000" stroke-width="1" fill="none"><rect x="73.5" y="26.5" width="1109" height="970.5"/><rect x="83.5" y="35.5" width="1089" height="952"/><path d="M83.5,26.5V35.5M1172.5,26.5V35.5M83.5,987.5V997M1172.5,987.5V997M73.5,35.5H83.5M1172.5,35.5H1182.5M73.5,987.5H83.5M1172.5,987.5H1182.5"/></g>
<g class="h" font-size="23" fill="#000">
<text x="153.5" y="16.7" text-anchor="middle">12°00'</text><text x="680.5" y="16.7" text-anchor="middle">13°30'</text>
<text x="153.5" y="1024" text-anchor="middle">12°00'</text><text x="680.5" y="1024" text-anchor="middle">13°30'</text>
<text x="64" y="740.6" text-anchor="end">42°00'</text><text x="1191.5" y="740.6">42°00'</text>
</g>
<path d="M634.80,502.90 638.95,515.68 652.39,515.68 641.52,523.58 645.67,536.37 634.80,528.47 623.93,536.37 628.08,523.58 617.21,515.68 630.65,515.68Z" fill="none" stroke="#000" stroke-width="4.2" stroke-miterlimit="10"/>
<g><rect x="139" y="930.3" width="215" height="5.6" fill="#000"/><rect x="183.2" y="931.3" width="42" height="3.6" fill="#fff"/><rect x="268.1" y="931.3" width="42.1" height="3.6" fill="#fff"/><path d="M139.5,930.3V940.3M353.5,930.3V940.3M183.2,935V939M225.2,935V939M268.1,935V939M310.2,935V939" stroke="#000" stroke-width="1" fill="none"/>
<text class="h" x="246.4" y="915.6" font-size="31" text-anchor="middle">km</text><text class="h" x="139.3" y="964.6" font-size="23" text-anchor="middle">0</text><text class="h" x="353.3" y="964.6" font-size="23" text-anchor="middle">50</text></g>
<rect x="543.5" y="46.5" width="611.2" height="62" fill="#fff" stroke="#000" stroke-width="1"/>
<g class="h" font-size="12.19" fill="#000">
<text x="548.3" y="59.9" textLength="367.6">Terremoto del 23-06-2009 02:41:56 (ora locale) Mw=3.7 Prof=15 km</text>
<text x="548.3" y="74.9" textLength="32.1">Paura</text>
<text x="548.3" y="89.9" textLength="604.9">Dati non verificati estratti da 68 questionari compilati tramite Internet, relativi a comuni con almeno 3 questionari.</text>
<text x="548.3" y="104.6" textLength="236.7">Aggiornato il: 11-01-2026 07:50 (ora locale)</text></g>
<rect x="1052.5" y="171.5" width="101" height="333" fill="#fff" stroke="#000" stroke-width="1"/>
<g class="d" font-size="12.7" text-anchor="middle" fill="#000">
<text x="1103.2" y="183.7">Percentuale</text>
<text x="1101.0" y="199.6">di persone</text>
<text x="1103.0" y="215.5">che hanno</text>
<text x="1103.0" y="231.6">provato</text>
<text x="1100.9" y="247.5">paura</text>
<rect x="1062.8" y="254.9" width="80" height="36.6" fill="#fae0ff"/>
<text x="1102.8" y="277.8" fill="#000">0 - 24%</text>
<rect x="1062.8" y="298.8" width="80" height="36.9" fill="#e3c9ff"/>
<text x="1102.8" y="321.6" fill="#000">25 - 49%</text>
<rect x="1062.8" y="344" width="80" height="36.6" fill="#b96dff"/>
<text x="1102.8" y="366.6" fill="#000">50 - 74%</text>
<rect x="1062.8" y="386.2" width="80" height="37.5" fill="#7f00ff"/>
<text x="1102.8" y="408.4" fill="#fff">75 - 100%</text>
<text x="1102.5" y="448.6">Epicentro</text><text x="1102.5" y="464.5">strumentale</text></g>
<path d="M1052.5,432.5H1153.5" stroke="#000" stroke-width="1" stroke-dasharray="2.6,2.2" fill="none"/>
<path d="M1100.60,478.90 1102.46,484.64 1108.49,484.64 1103.62,488.18 1105.48,493.91 1100.60,490.37 1095.72,493.91 1097.58,488.18 1092.71,484.64 1098.74,484.64Z" fill="#fff" stroke="#000" stroke-width="1.2"/>
<g>
<g clip-path="url(#globe2)">
<circle cx="132.3" cy="78.2" r="30.2" fill="url(#gb)"/>
<path d="M135.1,60.9 141.9,50.1 146.3,51.7 150.7,55.0 145.5,57.4 139.0,59.9Z" fill="#1f9a3a" stroke="#fff" stroke-width="0.7" stroke-linejoin="round"/>
<path d="M149.6,53.9 152.9,56.5 151.4,57.0Z" fill="#f5e11c" stroke="#fff" stroke-width="0.7" stroke-linejoin="round"/>
<path d="M135.7,61.4 145.5,57.6 150.8,56.3 151.6,64.5 146.3,62.0 139.7,61.5Z" fill="#e2062c" stroke="#fff" stroke-width="0.7" stroke-linejoin="round"/>
<path d="M151.6,56.3 156.2,60.5 159.8,66.4 160.6,72.6 151.6,65.3Z" fill="#cdb9d3" stroke="#fff" stroke-width="0.7" stroke-linejoin="round"/>
<path d="M136.9,62.2 146.3,62.2 151.3,65.3 145.9,71.6 141.9,65.8Z" fill="#1f9a3a" stroke="#fff" stroke-width="0.7" stroke-linejoin="round"/>
<path d="M135.1,62.6 139.0,64.9 142.8,69.3 145.5,72.4 140.4,74.1 134.8,74.7Z" fill="#f5e11c" stroke="#fff" stroke-width="0.7" stroke-linejoin="round"/>
<path d="M146.3,72.4 151.6,66.2 158.9,73.8 155.4,80.3 151.6,84.1 148.6,78.1Z" fill="#f5e11c" stroke="#fff" stroke-width="0.7" stroke-linejoin="round"/>
<path d="M160.3,72.2 162.8,74.4 162.0,77.4 159.6,75.2Z" fill="#1f9a3a" stroke="#fff" stroke-width="0.7" stroke-linejoin="round"/>
<path d="M134.6,75.5 140.4,75.0 145.5,73.3 148.2,78.1 150.2,84.1 146.3,87.0 140.4,89.2 133.8,90.0Z" fill="#e2062c" stroke="#fff" stroke-width="0.7" stroke-linejoin="round"/>
<path d="M151.8,85.1 155.5,81.0 159.5,75.9 161.8,79.6 162.3,84.7 159.8,90.5 154.5,95.1Z" fill="#cdb9d3" stroke="#fff" stroke-width="0.7" stroke-linejoin="round"/>
<path d="M133.6,91.0 140.4,90.5 146.3,88.4 150.9,85.9 153.8,97.3 149.6,103.0 142.6,106.3 132.2,108.1Z" fill="#1f9a3a" stroke="#fff" stroke-width="0.7" stroke-linejoin="round"/>
<path d="M154.5,96.0 158.7,92.4 157.3,96.4 154.7,98.2Z" fill="#e2062c" stroke="#fff" stroke-width="0.7" stroke-linejoin="round"/>
<path d="M134.9,61.2Q131.6,54.7 128.0,49.5M134.9,61.2Q126.5,58.3 119.5,57.2M134.9,61.2Q113.3,64.9 102.0,78.1M134.9,61.2Q119.2,75.2 112.2,99.3M134.9,61.2Q133.5,84.0 131.6,108.1M128.0,49.9Q122.1,51.7 119.5,57.2M119.5,57.2Q117.7,65.6 124.3,72.2M124.3,72.2Q128.7,74.8 134.8,74.7M108.2,61.2Q108.2,74.4 117.7,84.3M117.7,84.3Q124.3,89.1 133.8,90.2M108.2,61.2Q113.3,58.3 119.5,57.2M102.0,79.6Q105.3,90.5 112.6,98.2M112.6,98.2Q121.4,103.0 132.4,104.5M119.5,57.2Q113.3,58.7 108.2,61.2M102.0,72.2Q103.8,65.6 108.2,61.2M112.2,51.7Q116.2,53.9 119.5,57.2" fill="none" stroke="#fff" stroke-width="0.75" opacity="0.95"/>
<circle cx="132.3" cy="78.2" r="30.2" fill="url(#gsh)"/>
</g>
<g fill="#444" font-family="'Liberation Sans',Arial,sans-serif" font-weight="bold" font-size="13.2">
<text x="169.9" y="75" textLength="89" lengthAdjust="spacingAndGlyphs">ISTITUTO NAZIONALE</text>
<text x="169.9" y="89.2" textLength="135.5" lengthAdjust="spacingAndGlyphs">DI GEOFISICA E VULCANOLOGIA</text></g>
</g>
<g>
<circle cx="1096.2" cy="915.9" r="33.6" fill="#1d1d1b"/>
<circle cx="1096.2" cy="915.9" r="19.5" fill="none" stroke="#e2001a" stroke-width="6"/>
<circle cx="1096.2" cy="915.9" r="8.2" fill="#e2001a"/>
<path d="M1101.5,911.8L1128.5,901.2Q1131.2,900.3 1131.2,903V931Q1131.2,934.3 1128,933.2L1101.5,920.5Z" fill="url(#gc)"/>
<path d="M1101.5,920.5L1128,933.2Q1131.2,934.3 1131.2,931V927L1104,919Z" fill="#0a62a8" opacity="0.6"/>
<circle cx="1144.7" cy="916.6" r="10.3" fill="#e2001a"/>
<text transform="translate(1144.7,916.6) rotate(90)" x="0" y="5.8" text-anchor="middle" font-family="'Liberation Sans',Arial,sans-serif" font-weight="bold" font-size="17" fill="#fff">?</text>
<path id="circ" d="M1134.07,929.68A40.3,40.3 0 1 1 1058.33,902.12A40.3,40.3 0 1 1 1134.07,929.68" fill="none"/>
<text font-family="'Liberation Sans',Arial,sans-serif" font-size="19" font-weight="bold" fill="#e2001a"><textPath href="#circ" startOffset="6.33" textLength="33.76" lengthAdjust="spacingAndGlyphs">www</textPath></text>
<text font-family="'Liberation Sans',Arial,sans-serif" font-size="19" font-weight="bold" fill="#e2001a"><textPath href="#circ" startOffset="42.55" textLength="3.87" lengthAdjust="spacingAndGlyphs">.</textPath></text>
<text font-family="'Liberation Sans',Arial,sans-serif" font-size="19" font-weight="normal" fill="#1d1d1b"><textPath href="#circ" startOffset="47.83" textLength="18.99" lengthAdjust="spacingAndGlyphs">hai</textPath></text>
<text font-family="'Liberation Sans',Arial,sans-serif" font-size="19" font-weight="bold" fill="#1d1d1b"><textPath href="#circ" startOffset="68.93" textLength="53.46" lengthAdjust="spacingAndGlyphs">sentito</textPath></text>
<text font-family="'Liberation Sans',Arial,sans-serif" font-size="19" font-weight="normal" fill="#1d1d1b"><textPath href="#circ" startOffset="124.14" textLength="8.09" lengthAdjust="spacingAndGlyphs">il</textPath></text>
<text font-family="'Liberation Sans',Arial,sans-serif" font-size="19" font-weight="bold" fill="#1d1d1b"><textPath href="#circ" startOffset="133.64" textLength="69.63" lengthAdjust="spacingAndGlyphs">terremoto</textPath></text>
<text font-family="'Liberation Sans',Arial,sans-serif" font-size="19" font-weight="bold" fill="#e2001a"><textPath href="#circ" startOffset="205.03" textLength="17.94" lengthAdjust="spacingAndGlyphs">.it</textPath></text>
</g>
</svg></body></html>
